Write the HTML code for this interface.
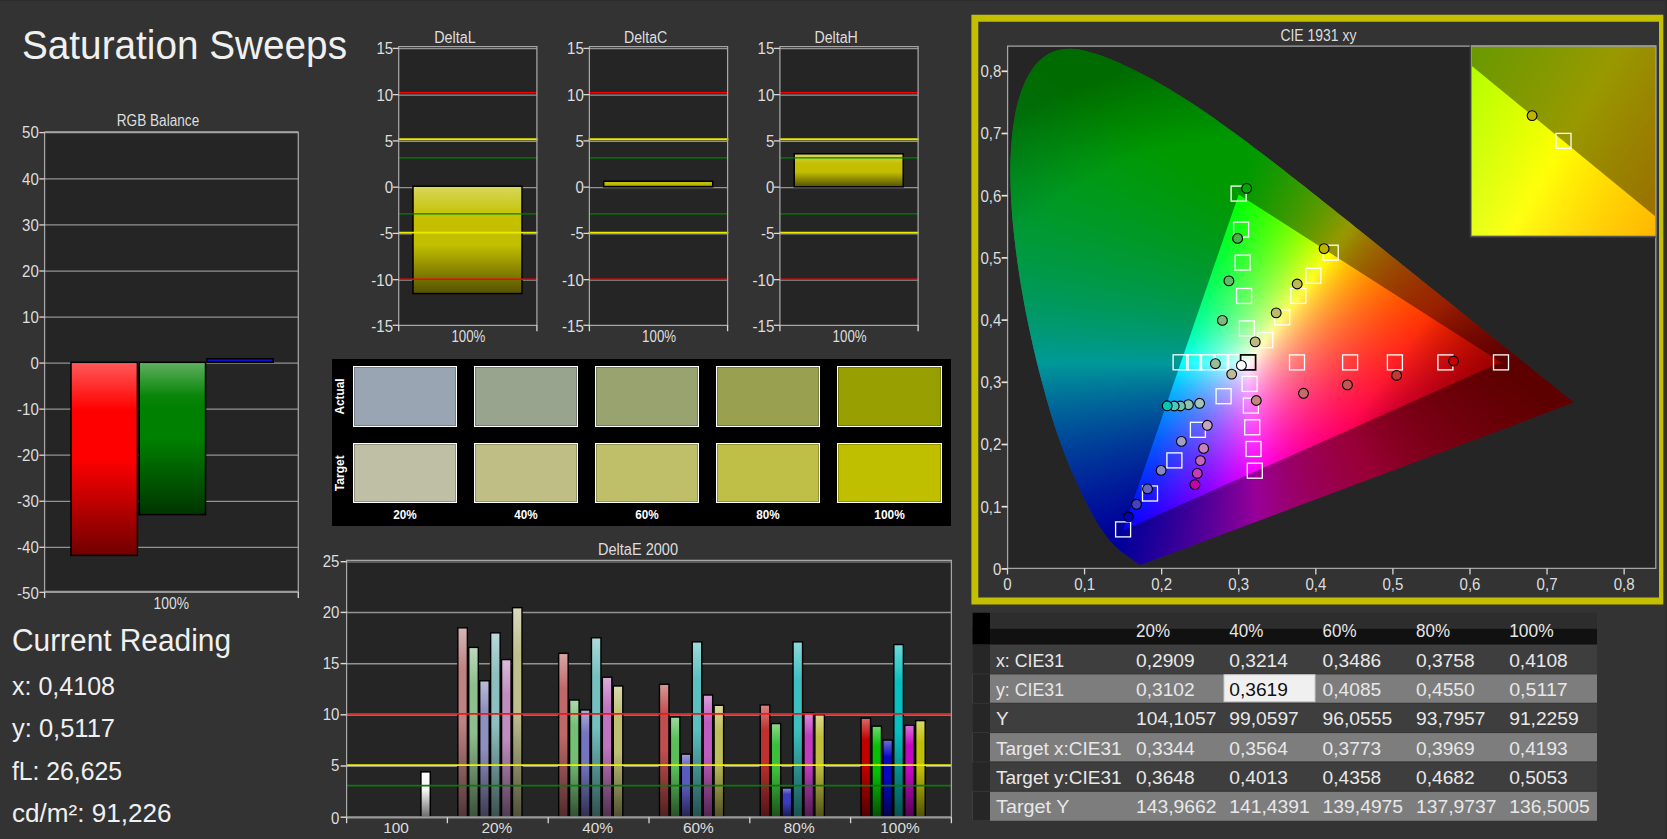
<!DOCTYPE html>
<html><head><meta charset="utf-8"><title>Saturation Sweeps</title>
<style>
html,body{margin:0;padding:0}
body{width:1667px;height:839px;background:#333;overflow:hidden;position:relative;font-family:"Liberation Sans",Arial,sans-serif}
svg{position:absolute;left:0;top:0}
svg{fill:#dedede}
svg text{font-family:"Liberation Sans",Arial,sans-serif}
.rw i{position:absolute;display:block}
#cbg{position:absolute;left:1007.6px;top:46px;width:648.2px;height:522.4px;background:#252525}
</style></head><body>
<div id="cbg"></div>
<div class="rw" style="position:absolute;left:1008px;top:46px;width:648px;height:522px;overflow:hidden;clip-path:polygon(133.7px 518.5px,131.6px 518.4px,129.7px 517.3px,127.8px 516.0px,125.8px 514.5px,123.7px 513.0px,121.7px 511.6px,119.4px 510.0px,117.7px 508.8px,115.9px 507.5px,113.8px 505.9px,111.6px 504.1px,109.3px 502.1px,106.7px 499.7px,103.9px 496.8px,102.4px 495.0px,100.8px 493.1px,99.0px 490.8px,97.1px 488.4px,95.2px 485.6px,93.1px 482.7px,91.0px 479.4px,88.8px 475.8px,86.4px 471.9px,84.0px 467.6px,81.4px 462.8px,78.7px 457.6px,75.9px 451.9px,73.0px 445.8px,69.9px 439.1px,66.6px 431.8px,63.2px 424.0px,59.7px 415.6px,56.1px 406.5px,52.5px 396.8px,48.8px 386.3px,45.2px 375.3px,41.6px 363.6px,38.1px 351.2px,34.5px 338.1px,30.9px 324.4px,27.4px 310.2px,24.0px 295.4px,20.7px 280.3px,17.6px 264.9px,14.7px 249.3px,12.0px 233.6px,9.7px 217.9px,7.6px 202.3px,5.8px 186.7px,4.3px 171.4px,3.3px 156.4px,2.6px 141.9px,2.3px 127.9px,2.5px 114.3px,3.1px 101.2px,4.1px 88.6px,5.7px 76.7px,7.7px 65.4px,10.2px 55.0px,13.2px 45.4px,16.6px 36.7px,20.5px 28.9px,24.8px 22.2px,29.4px 16.5px,34.4px 11.9px,39.7px 8.3px,45.2px 5.7px,50.9px 3.9px,56.8px 3.0px,62.7px 2.8px,68.8px 3.3px,75.0px 4.3px,81.2px 5.9px,87.5px 7.7px,93.8px 9.8px,100.1px 12.2px,106.4px 14.8px,112.6px 17.5px,118.8px 20.4px,124.8px 23.2px,130.7px 26.2px,136.6px 29.2px,142.4px 32.3px,148.2px 35.4px,153.9px 38.7px,159.6px 42.0px,165.2px 45.4px,170.9px 48.9px,176.5px 52.4px,182.1px 56.0px,187.7px 59.7px,193.3px 63.4px,198.8px 67.2px,204.4px 71.1px,209.9px 75.0px,215.4px 78.9px,220.9px 82.9px,226.5px 86.9px,232.0px 91.0px,237.5px 95.1px,243.0px 99.2px,248.5px 103.4px,254.0px 107.6px,259.5px 111.8px,265.1px 116.0px,270.6px 120.3px,276.1px 124.6px,281.6px 128.9px,287.1px 133.2px,292.6px 137.5px,298.1px 141.8px,303.6px 146.2px,309.1px 150.5px,314.6px 154.9px,320.0px 159.2px,325.5px 163.6px,330.9px 167.9px,336.4px 172.2px,341.8px 176.6px,347.2px 180.9px,352.6px 185.2px,357.9px 189.5px,363.2px 193.8px,368.5px 198.0px,373.8px 202.3px,379.0px 206.5px,384.2px 210.7px,389.4px 214.8px,394.5px 218.9px,399.6px 223.0px,404.6px 227.1px,409.6px 231.1px,414.5px 235.0px,419.4px 238.9px,424.2px 242.8px,429.0px 246.6px,433.7px 250.4px,438.3px 254.1px,442.8px 257.7px,447.3px 261.3px,451.7px 264.9px,456.0px 268.3px,460.2px 271.7px,464.2px 275.0px,468.2px 278.1px,472.0px 281.2px,475.7px 284.2px,479.3px 287.1px,482.8px 289.9px,486.3px 292.7px,489.7px 295.4px,492.9px 298.0px,496.1px 300.6px,499.2px 303.0px,502.1px 305.4px,504.9px 307.6px,507.6px 309.8px,510.2px 311.8px,512.7px 313.8px,515.1px 315.8px,517.4px 317.6px,519.6px 319.4px,521.7px 321.1px,523.7px 322.7px,525.6px 324.3px,527.5px 325.8px,529.2px 327.2px,530.9px 328.5px,532.5px 329.8px,535.5px 332.2px,538.2px 334.4px,540.8px 336.4px,543.0px 338.3px,545.2px 340.0px,547.2px 341.6px,549.0px 343.1px,550.7px 344.4px,552.3px 345.7px,554.4px 347.4px,556.3px 348.9px,558.3px 350.5px,559.9px 351.8px,561.4px 353.1px,563.0px 354.3px,564.6px 355.6px,565.8px 356.6px);">
<i style="top:2px;left:48px;width:32px;height:2px;background:linear-gradient(90deg,#00b200,#00b200,#00b200,#00b200,#00b200)"></i>
<i style="top:4px;left:40px;width:48px;height:2px;background:linear-gradient(90deg,#00b200,#00b200,#00b200,#00b200,#00b200,#00b200,#00b200)"></i>
<i style="top:6px;left:32px;width:64px;height:2px;background:linear-gradient(90deg,#00b200,#00b200,#00b200,#00b200,#00b200,#00b200,#00b200,#00b200,#00b200)"></i>
<i style="top:8px;left:32px;width:64px;height:2px;background:linear-gradient(90deg,#00b200,#00b200,#00b200,#00b200,#00b200,#00b200,#00b200,#00b200,#00b200)"></i>
<i style="top:10px;left:32px;width:72px;height:2px;background:linear-gradient(90deg,#00b200,#00b200,#00b200,#00b200,#00b200,#00b200,#00b200,#00b200,#00b200,#00b200)"></i>
<i style="top:12px;left:24px;width:88px;height:2px;background:linear-gradient(90deg,#00b200,#00b200,#00b200,#00b200,#00b200,#00b200,#00b200,#00b200,#00b200,#00b200,#00b200,#00b200)"></i>
<i style="top:14px;left:24px;width:88px;height:2px;background:linear-gradient(90deg,#00b200,#00b200,#00b200,#00b200,#00b200,#00b200,#00b200,#00b200,#00b200,#00b200,#00b200,#00b200)"></i>
<i style="top:16px;left:24px;width:96px;height:2px;background:linear-gradient(90deg,#00b300,#00b200,#00b200,#00b200,#00b200,#00b200,#00b200,#00b200,#00b200,#00b200,#00b200,#00b200,#00b200)"></i>
<i style="top:18px;left:24px;width:96px;height:2px;background:linear-gradient(90deg,#00b301,#00b200,#00b200,#00b200,#00b200,#00b200,#00b200,#00b200,#00b200,#00b200,#00b200,#00b200,#00b200)"></i>
<i style="top:20px;left:16px;width:112px;height:2px;background:linear-gradient(90deg,#00b402,#00b301,#00b200,#00b200,#00b200,#00b200,#00b200,#00b200,#00b200,#00b200,#00b200,#00b200,#00b200,#00b200,#00b200)"></i>
<i style="top:22px;left:16px;width:112px;height:2px;background:linear-gradient(90deg,#00b403,#00b302,#00b300,#00b200,#00b200,#00b200,#00b200,#00b200,#00b200,#00b200,#00b200,#00b200,#00b200,#00b200,#00b300)"></i>
<i style="top:24px;left:16px;width:120px;height:2px;background:linear-gradient(90deg,#00b403,#00b302,#00b301,#00b200,#00b200,#00b200,#00b200,#00b200,#00b200,#00b200,#00b200,#00b200,#00b200,#00b300,#00b500,#00b700)"></i>
<i style="top:26px;left:16px;width:120px;height:2px;background:linear-gradient(90deg,#00b404,#00b403,#00b301,#00b300,#00b200,#00b200,#00b200,#00b200,#00b200,#00b200,#00b200,#00b200,#00b300,#00b500,#00b700,#00b900)"></i>
<i style="top:28px;left:16px;width:128px;height:2px;background:linear-gradient(90deg,#00b405,#00b403,#00b302,#00b301,#00b200,#00b200,#00b200,#00b200,#00b200,#00b200,#00b200,#00b300,#00b500,#00b700,#00b900,#00ba00,#00bc00)"></i>
<i style="top:30px;left:16px;width:128px;height:2px;background:linear-gradient(90deg,#00b505,#00b404,#00b403,#00b301,#00b200,#00b200,#00b200,#00b200,#00b200,#00b200,#00b200,#00b500,#00b700,#00b900,#00ba00,#00bc00,#00be00)"></i>
<i style="top:32px;left:16px;width:136px;height:2px;background:linear-gradient(90deg,#00b506,#00b404,#00b403,#00b302,#00b300,#00b200,#00b200,#00b200,#00b200,#00b200,#00b400,#00b600,#00b800,#00ba00,#00bc00,#00be00,#00bf00,#00c100)"></i>
<i style="top:34px;left:8px;width:144px;height:2px;background:linear-gradient(90deg,#00b607,#00b506,#00b505,#00b404,#00b302,#00b301,#00b200,#00b200,#00b200,#00b200,#00b300,#00b600,#00b800,#00ba00,#00bc00,#00be00,#00c000,#00c100,#00c300)"></i>
<i style="top:36px;left:8px;width:152px;height:2px;background:linear-gradient(90deg,#00b608,#00b507,#00b505,#00b404,#00b403,#00b301,#00b300,#00b200,#00b200,#00b300,#00b500,#00b700,#00ba00,#00bc00,#00be00,#00c000,#00c100,#00c300,#00c400,#00c600)"></i>
<i style="top:38px;left:8px;width:152px;height:2px;background:linear-gradient(90deg,#00b608,#00b607,#00b506,#00b405,#00b403,#00b302,#00b301,#00b200,#00b200,#00b400,#00b700,#00b900,#0b0,#00bd00,#00bf00,#00c100,#00c300,#00c500,#00c600,#00c700)"></i>
<i style="top:40px;left:8px;width:160px;height:2px;background:linear-gradient(90deg,#00b609,#00b608,#00b506,#00b505,#00b404,#00b403,#00b301,#00b200,#00b300,#00b600,#00b800,#0b0,#00bd00,#00bf00,#00c100,#00c300,#00c500,#00c600,#00c800,#00c900,#00cb00)"></i>
<i style="top:42px;left:8px;width:160px;height:2px;background:linear-gradient(90deg,#00b70a,#00b608,#00b507,#00b506,#00b404,#00b403,#00b302,#00b300,#00b500,#00b800,#00ba00,#00bc00,#00bf00,#00c100,#00c300,#00c500,#00c600,#00c800,#00ca00,#00cb00,#0c0)"></i>
<i style="top:44px;left:8px;width:160px;height:2px;background:linear-gradient(90deg,#00b70a,#00b609,#00b608,#00b506,#00b505,#00b404,#00b302,#00b401,#00b700,#00b900,#00bc00,#00be00,#00c000,#00c200,#00c400,#00c600,#00c800,#00ca00,#00cb00,#00cd00,#00ce00)"></i>
<i style="top:46px;left:8px;width:168px;height:2px;background:linear-gradient(90deg,#00b70b,#00b609,#00b608,#00b507,#00b505,#00b404,#00b403,#00b601,#00b800,#0b0,#00bd00,#00c000,#00c200,#00c400,#00c600,#00c800,#00ca00,#0c0,#00cd00,#00cf00,#00d000,#00d100)"></i>
<i style="top:48px;left:8px;width:168px;height:2px;background:linear-gradient(90deg,#00b70b,#00b70a,#00b609,#00b607,#00b506,#00b505,#00b603,#00b802,#00ba01,#00bd00,#00bf00,#00c100,#00c400,#00c600,#00c800,#00ca00,#0c0,#00cd00,#00cf00,#00d000,#00d200,#00d300)"></i>
<i style="top:50px;left:8px;width:176px;height:2px;background:linear-gradient(90deg,#00b70c,#00b70b,#00b609,#00b608,#00b507,#00b505,#00b804,#00ba03,#00bc01,#00be00,#00c100,#00c300,#00c500,#00c700,#00ca00,#00cb00,#00cd00,#00cf00,#00d100,#00d200,#00d300,#00d500,#00d600)"></i>
<i style="top:52px;left:8px;width:176px;height:2px;background:linear-gradient(90deg,#00b80c,#00b70b,#00b70a,#00b609,#00b607,#00b706,#00b905,#00bc03,#00be02,#00c000,#00c200,#00c500,#00c700,#00c900,#00cb00,#00cd00,#00cf00,#00d100,#00d200,#00d400,#00d500,#00d600,#00d700)"></i>
<i style="top:54px;left:8px;width:176px;height:2px;background:linear-gradient(90deg,#00b80d,#00b70c,#00b70a,#00b609,#00b608,#00b907,#00bb05,#00bd04,#00c002,#00c201,#00c400,#00c600,#00c900,#00cb00,#00cd00,#00cf00,#00d100,#00d200,#00d400,#00d600,#00d700,#00d800,#00d900)"></i>
<i style="top:56px;left:8px;width:184px;height:2px;background:linear-gradient(90deg,#00b80e,#00b80c,#00b70b,#00b70a,#00b808,#00bb07,#00bd06,#00bf05,#00c103,#00c302,#00c600,#00c800,#00ca00,#00cd00,#00cf00,#00d100,#00d200,#00d400,#00d600,#00d700,#00d900,#00da00,#00db00,#00dc00)"></i>
<i style="top:58px;left:0px;width:192px;height:2px;background:linear-gradient(90deg,#00b910,#00b80e,#00b80d,#00b70c,#00b70a,#00ba09,#00bc08,#00bf07,#00c105,#00c304,#00c502,#00c701,#00ca00,#0c0,#00ce00,#00d000,#00d200,#00d400,#00d600,#00d800,#00d900,#00da00,#00dc00,#0d0,#00de00)"></i>
<i style="top:60px;left:0px;width:200px;height:2px;background:linear-gradient(90deg,#00b910,#00b90f,#00b80e,#00b80c,#00b90b,#00bc0a,#00be09,#00c007,#00c306,#00c504,#00c703,#00c901,#00cb00,#00ce00,#00d000,#00d200,#00d400,#00d600,#00d800,#00d900,#00db00,#00dc00,#0d0,#00de00,#00df00,#00e000)"></i>
<i style="top:62px;left:0px;width:200px;height:2px;background:linear-gradient(90deg,#00b911,#00b910,#00b80e,#00b80d,#00bb0c,#00bd0b,#00c009,#00c208,#00c407,#00c705,#00c904,#00cb02,#00cd00,#00cf00,#00d200,#00d400,#00d600,#00d800,#00d900,#00db00,#0d0,#00de00,#00df00,#00e000,#00e100,#00e200)"></i>
<i style="top:64px;left:0px;width:200px;height:2px;background:linear-gradient(90deg,#00ba11,#00b910,#00b90f,#00ba0e,#00bc0c,#00bf0b,#00c10a,#00c409,#00c607,#00c806,#00cb04,#00cd03,#00cf01,#00d100,#00d300,#00d500,#00d700,#00d900,#00db00,#0d0,#00de00,#00e000,#00e100,#00e200,#00e300,#00e400)"></i>
<i style="top:66px;left:0px;width:208px;height:2px;background:linear-gradient(90deg,#00ba12,#00b911,#00b90f,#00bb0e,#00be0d,#00c10c,#00c30b,#00c509,#00c808,#00ca06,#00cc05,#00ce03,#00d102,#00d300,#00d500,#00d700,#00d900,#00db00,#0d0,#00de00,#00e000,#00e100,#00e300,#00e400,#00e500,#00e600,#00e600)"></i>
<i style="top:68px;left:0px;width:208px;height:2px;background:linear-gradient(90deg,#00ba13,#00ba11,#00bb10,#00bd0f,#00c00e,#00c20d,#00c50b,#00c70a,#00c909,#00cc07,#00ce06,#00d004,#00d202,#00d401,#00d700,#00d900,#00db00,#0d0,#00df00,#00e000,#00e200,#00e300,#00e400,#00e600,#00e700,#00e700,#00e800)"></i>
<i style="top:70px;left:0px;width:208px;height:2px;background:linear-gradient(90deg,#00ba13,#00ba12,#00bc11,#00bf10,#00c10f,#00c40e,#00c60c,#00c90b,#00cb09,#00cd08,#00d006,#00d205,#00d403,#00d601,#00d800,#00da00,#00dc00,#00de00,#00e000,#00e200,#00e400,#00e500,#00e600,#00e700,#00e800,#00e900,#00ea00)"></i>
<i style="top:72px;left:0px;width:216px;height:2px;background:linear-gradient(90deg,#00bb14,#00bb13,#00be12,#00c011,#00c310,#00c50e,#00c80d,#00ca0c,#00cd0a,#00cf09,#00d107,#00d406,#00d604,#00d802,#00da00,#00dc00,#00de00,#00e000,#00e200,#00e400,#00e500,#00e700,#00e800,#00e900,#00ea00,#00eb00,#00ec00,#00ec00)"></i>
<i style="top:74px;left:0px;width:216px;height:2px;background:linear-gradient(90deg,#00bb15,#00bd14,#00bf13,#00c212,#00c410,#00c70f,#00ca0e,#00cc0c,#00ce0b,#00d109,#00d308,#00d506,#00d805,#00da03,#00dc01,#00de00,#00e000,#00e200,#00e400,#00e500,#00e700,#00e800,#00ea00,#00eb00,#00ec00,#00ed00,#00ed00,#0e0)"></i>
<i style="top:76px;left:0px;width:216px;height:2px;background:linear-gradient(90deg,#00bb15,#00be14,#00c113,#00c312,#00c611,#00c910,#00cb0f,#00ce0d,#00d00c,#00d20a,#00d509,#00d707,#00d905,#00db04,#00dd02,#00df00,#00e200,#00e400,#00e500,#00e700,#00e900,#00ea00,#00eb00,#00ed00,#0e0,#00ef00,#00ef00,#00f000)"></i>
<i style="top:78px;left:0px;width:224px;height:2px;background:linear-gradient(90deg,#00bd16,#00c015,#00c214,#00c513,#00c812,#00ca11,#00cd0f,#00cf0e,#00d20d,#00d40b,#00d60a,#00d908,#00db06,#00dd04,#00df03,#00e101,#00e300,#00e500,#00e700,#00e900,#00ea00,#00ec00,#00ed00,#0e0,#00ef00,#00f000,#00f100,#00f200,#00f200)"></i>
<i style="top:80px;left:0px;width:224px;height:2px;background:linear-gradient(90deg,#00be17,#00c116,#00c415,#00c614,#00c913,#00cc12,#00ce10,#00d10f,#00d30d,#00d60c,#00d80a,#00da09,#00dd07,#00df05,#00e103,#00e301,#00e500,#00e700,#00e900,#00eb00,#00ec00,#0e0,#00ef00,#00f000,#00f100,#00f200,#00f300,#00f300,#00f400)"></i>
<i style="top:82px;left:0px;width:224px;height:2px;background:linear-gradient(90deg,#00c018,#00c317,#00c516,#00c815,#00cb14,#00cd12,#00d011,#00d210,#00d50e,#00d70d,#00da0b,#00dc0a,#00de08,#00e106,#00e304,#00e502,#00e700,#00e900,#00eb00,#00ec00,#0e0,#00ef00,#00f100,#00f200,#00f300,#00f400,#00f500,#00f500,#00f600)"></i>
<i style="top:84px;left:0px;width:232px;height:2px;background:linear-gradient(90deg,#00c119,#00c418,#00c717,#00ca16,#00cc15,#00cf13,#00d112,#00d411,#00d70f,#00d90e,#00db0c,#00de0a,#00e009,#00e207,#00e405,#00e603,#00e801,#00ea00,#00ec00,#0e0,#00f000,#00f100,#00f300,#00f400,#00f500,#00f600,#00f600,#00f700,#00f700,#00f800)"></i>
<i style="top:86px;left:0px;width:232px;height:2px;background:linear-gradient(90deg,#00c31a,#00c619,#00c818,#00cb17,#00ce15,#00d014,#00d313,#00d612,#00d810,#00db0f,#00dd0d,#00df0b,#00e20a,#00e408,#00e606,#00e804,#00ea02,#00ec00,#0e0,#00f000,#00f100,#00f300,#00f400,#00f600,#00f700,#00f700,#00f800,#00f900,#00f900,#00f900)"></i>
<i style="top:88px;left:0px;width:232px;height:2px;background:linear-gradient(90deg,#00c41b,#00c71a,#00ca19,#00cc18,#00cf16,#00d215,#00d514,#00d712,#00da11,#00dc0f,#00df0e,#00e10c,#00e30a,#00e609,#00e807,#00ea05,#00ec03,#00ee01,#00f000,#00f100,#00f300,#00f500,#00f600,#00f700,#00f800,#00f900,#00fa00,#00fb00,#00fb00,#00fb00)"></i>
<i style="top:90px;left:0px;width:240px;height:2px;background:linear-gradient(90deg,#00c61c,#00c81b,#00cb1a,#00ce19,#00d117,#00d316,#00d615,#00d913,#00db12,#00de10,#00e00f,#00e30d,#00e50b,#00e70a,#00e908,#00ec06,#00ee04,#00f001,#00f100,#00f300,#00f500,#00f600,#00f800,#00f900,#00fa00,#00fb00,#00fc00,#00fc00,#00fd00,#00fd00,#00fd00)"></i>
<i style="top:92px;left:0px;width:240px;height:2px;background:linear-gradient(90deg,#00c71d,#00ca1c,#00cd1b,#00cf19,#00d218,#00d517,#00d816,#00da14,#00dd13,#00df11,#00e210,#00e40e,#00e70c,#00e90a,#00eb09,#00ed07,#00ef04,#00f102,#00f300,#00f500,#00f700,#00f800,#00fa00,#00fb00,#00fc00,#00fd00,#00fe00,#00fe00,#0f0,#0f0,#0f0)"></i>
<i style="top:94px;left:0px;width:240px;height:2px;background:linear-gradient(90deg,#00c81e,#00cb1d,#00ce1c,#00d11a,#00d419,#00d618,#00d917,#00dc15,#00de14,#00e112,#00e311,#00e60f,#00e80d,#00eb0b,#00ed09,#00ef07,#00f105,#00f303,#00f501,#00f700,#00f800,#00fa00,#00fb00,#00fd00,#00fe00,#0f0,#0f0,#0f0,#0f0,#0f0,#0f0)"></i>
<i style="top:96px;left:0px;width:248px;height:2px;background:linear-gradient(90deg,#00ca1f,#00cd1e,#00cf1d,#00d21b,#00d51a,#00d819,#00db18,#00dd16,#00e015,#00e213,#00e512,#00e710,#00ea0e,#00ec0c,#00ee0a,#00f108,#00f306,#00f504,#00f702,#00f800,#00fa00,#00fc00,#00fd00,#00fe00,#0f0,#0f0,#0f0,#0f0,#0f0,#0f0,#0f0,#0f0)"></i>
<i style="top:98px;left:0px;width:248px;height:2px;background:linear-gradient(90deg,#00cb20,#00ce1f,#00d11e,#00d41c,#00d61b,#00d91a,#00dc19,#00df17,#00e116,#00e414,#00e613,#00e911,#00eb0f,#00ee0d,#00f00b,#00f209,#00f407,#00f605,#00f803,#00fa00,#00fc00,#00fd00,#0f0,#0f0,#0f0,#0f0,#0f0,#0f0,#0f0,#0f0,#0f0,#0f0)"></i>
<i style="top:100px;left:0px;width:248px;height:2px;background:linear-gradient(90deg,#00cd21,#00cf20,#00d21f,#00d51d,#00d81c,#00db1b,#00dd1a,#00e018,#00e317,#00e515,#00e814,#00ea12,#00ed10,#00ef0e,#00f20c,#00f40a,#00f608,#00f806,#00fa04,#00fc01,#00fe00,#0f0,#0f0,#0f0,#0f0,#0f0,#0f0,#0f0,#0f0,#0f0,#0f0,#01ff00)"></i>
<i style="top:102px;left:0px;width:256px;height:2px;background:linear-gradient(90deg,#00ce22,#00d121,#00d420,#00d71e,#00d91d,#00dc1c,#00df1b,#00e219,#00e418,#00e716,#00e915,#00ec13,#0e1,#00f10f,#00f30d,#00f50b,#00f809,#00fa07,#00fc05,#00fe02,#0f0,#0f0,#0f0,#0f0,#0f0,#0f0,#0f0,#0f0,#0f0,#0f0,#0f0,#02ff00,#0dff00)"></i>
<i style="top:104px;left:0px;width:256px;height:2px;background:linear-gradient(90deg,#00cf23,#00d222,#00d521,#00d81f,#00db1e,#00de1d,#00e01c,#00e31a,#00e619,#00e817,#00eb16,#00ee14,#00f012,#00f210,#00f50e,#00f70c,#00f90a,#00fb08,#00fd06,#00ff03,#00ff01,#0f0,#0f0,#0f0,#0f0,#0f0,#0f0,#0f0,#0f0,#0f0,#0f0,#03ff00,#0eff00)"></i>
<i style="top:106px;left:0px;width:256px;height:2px;background:linear-gradient(90deg,#00d124,#00d423,#00d622,#00d921,#00dc1f,#00df1e,#00e21d,#00e41b,#00e71a,#00ea18,#00ec17,#00ef15,#00f213,#00f411,#00f610,#00f90d,#00fb0b,#00fd09,#00ff07,#00ff04,#00ff02,#0f0,#0f0,#0f0,#0f0,#0f0,#0f0,#0f0,#0f0,#0f0,#0f0,#04ff00,#0fff00)"></i>
<i style="top:108px;left:0px;width:264px;height:2px;background:linear-gradient(90deg,#00d225,#00d524,#00d823,#00db22,#00dd20,#00e01f,#00e31e,#00e61d,#00e91b,#00eb1a,#00ee18,#00f016,#00f314,#00f513,#00f811,#00fa0f,#00fc0c,#00ff0a,#00ff08,#00ff05,#00ff03,#0f0,#0f0,#0f0,#0f0,#0f0,#0f0,#0f0,#0f0,#0f0,#0f0,#05ff00,#10ff00,#1bff00)"></i>
<i style="top:110px;left:0px;width:264px;height:2px;background:linear-gradient(90deg,#00d326,#00d625,#00d924,#00dc23,#00df22,#00e220,#00e41f,#00e71e,#00ea1c,#00ed1b,#00ef19,#00f217,#00f416,#00f714,#00f912,#00fc10,#00fe0e,#00ff0b,#00ff09,#00ff06,#00ff04,#00ff01,#0f0,#0f0,#0f0,#0f0,#0f0,#0f0,#0f0,#0f0,#0f0,#06ff00,#1f0,#1cff00)"></i>
<i style="top:112px;left:0px;width:264px;height:2px;background:linear-gradient(90deg,#00d527,#00d726,#00da25,#00dd24,#00e023,#00e321,#00e620,#00e91f,#00eb1d,#00ee1c,#00f11a,#00f318,#00f617,#00f815,#00fb13,#00fd11,#00ff0f,#00ff0c,#00ff0a,#00ff07,#00ff05,#00ff02,#0f0,#0f0,#0f0,#0f0,#0f0,#0f0,#0f0,#0f0,#0f0,#07ff00,#12ff00,#1dff00)"></i>
<i style="top:114px;left:0px;width:272px;height:2px;background:linear-gradient(90deg,#00d628,#00d927,#00dc26,#00df25,#00e124,#00e423,#00e721,#00ea20,#00ed1e,#00ef1d,#00f21b,#00f51a,#00f718,#00fa16,#00fc14,#00ff12,#00ff10,#00ff0d,#00ff0b,#00ff08,#00ff06,#00ff03,#00ff01,#0f0,#0f0,#0f0,#0f0,#0f0,#0f0,#0f0,#0f0,#08ff00,#13ff00,#1eff00,#2aff00)"></i>
<i style="top:116px;left:0px;width:272px;height:2px;background:linear-gradient(90deg,#00d729,#00da28,#00dd27,#00e026,#00e325,#00e624,#00e822,#00eb21,#00ee20,#00f11e,#00f41d,#00f61b,#00f919,#00fb17,#00fe15,#00ff13,#0f1,#00ff0e,#00ff0c,#00ff0a,#00ff07,#00ff04,#00ff02,#0f0,#0f0,#0f0,#0f0,#0f0,#0f0,#0f0,#0f0,#09ff00,#14ff00,#1fff00,#2bff00)"></i>
<i style="top:118px;left:0px;width:272px;height:2px;background:linear-gradient(90deg,#00d82a,#00db29,#00de28,#00e127,#00e426,#00e725,#00ea24,#00ed22,#00ef21,#00f21f,#00f51e,#00f81c,#00fa1a,#00fd18,#00ff16,#00ff14,#00ff12,#00ff0f,#00ff0d,#00ff0b,#00ff08,#00ff06,#00ff03,#0f0,#0f0,#0f0,#0f0,#0f0,#0f0,#0f0,#0f0,#0aff00,#15ff00,#20ff00,#2cff00)"></i>
<i style="top:120px;left:0px;width:280px;height:2px;background:linear-gradient(90deg,#00da2b,#00dd2b,#00df2a,#00e229,#00e527,#00e826,#00eb25,#00ee24,#00f122,#00f421,#00f61f,#00f91d,#00fc1b,#00fe1a,#00ff17,#00ff15,#00ff13,#00ff10,#00ff0e,#00ff0c,#00ff09,#00ff07,#00ff04,#00ff01,#0f0,#0f0,#0f0,#0f0,#0f0,#0f0,#0f0,#0bff00,#16ff00,#2f0,#2dff00,#3aff00)"></i>
<i style="top:122px;left:0px;width:280px;height:2px;background:linear-gradient(90deg,#00db2d,#00de2c,#00e12b,#00e42a,#00e729,#00e927,#00ec26,#00ef25,#00f223,#00f522,#00f820,#00fa1e,#00fd1d,#00ff1b,#00ff19,#00ff16,#00ff14,#00ff12,#00ff0f,#00ff0d,#00ff0a,#00ff08,#00ff05,#00ff02,#0f0,#0f0,#0f0,#0f0,#0f0,#0f0,#01ff00,#0cff00,#17ff00,#23ff00,#2fff00,#3bff00)"></i>
<i style="top:124px;left:0px;width:280px;height:2px;background:linear-gradient(90deg,#00dc2e,#00df2d,#00e22c,#00e52b,#00e82a,#00eb29,#00ee27,#00f126,#00f325,#00f623,#00f921,#00fc20,#00fe1e,#00ff1c,#00ff1a,#00ff17,#00ff15,#00ff13,#00ff10,#00ff0e,#00ff0b,#00ff09,#00ff06,#00ff03,#00ff01,#0f0,#0f0,#0f0,#0f0,#0f0,#02ff00,#0dff00,#18ff00,#24ff00,#30ff00,#3cff00)"></i>
<i style="top:126px;left:0px;width:288px;height:2px;background:linear-gradient(90deg,#00dd2f,#00e02e,#00e32d,#00e62c,#00e92b,#00ec2a,#00ef29,#00f227,#00f526,#00f824,#00fa23,#00fd21,#00ff1f,#00ff1d,#00ff1b,#00ff18,#00ff16,#00ff14,#0f1,#00ff0f,#00ff0c,#00ff0a,#00ff07,#00ff05,#00ff02,#0f0,#0f0,#0f0,#0f0,#0f0,#03ff00,#0eff00,#19ff00,#25ff00,#31ff00,#3eff00,#4bff00)"></i>
<i style="top:128px;left:0px;width:288px;height:2px;background:linear-gradient(90deg,#00de30,#00e12f,#00e42e,#00e72d,#00ea2c,#00ed2b,#00f02a,#00f329,#00f627,#00f926,#00fc24,#00fe22,#00ff20,#00ff1e,#00ff1c,#00ff1a,#00ff17,#00ff15,#00ff13,#00ff10,#00ff0e,#00ff0b,#00ff08,#00ff06,#00ff03,#0f0,#0f0,#0f0,#0f0,#0f0,#04ff00,#0fff00,#1bff00,#27ff00,#3f0,#3fff00,#4cff00)"></i>
<i style="top:130px;left:0px;width:288px;height:2px;background:linear-gradient(90deg,#00df32,#00e231,#00e530,#00e82f,#00eb2e,#00ee2c,#00f12b,#00f42a,#00f728,#00fa27,#00fd25,#00ff24,#00ff21,#00ff1f,#00ff1d,#00ff1b,#00ff18,#00ff16,#00ff14,#0f1,#00ff0f,#00ff0c,#00ff0a,#00ff07,#00ff04,#00ff01,#0f0,#0f0,#0f0,#0f0,#05ff00,#10ff00,#1cff00,#28ff00,#34ff00,#41ff00,#4eff00)"></i>
<i style="top:132px;left:0px;width:296px;height:2px;background:linear-gradient(90deg,#00e133,#00e432,#00e731,#00ea30,#00ed2f,#00f02e,#00f32c,#00f62b,#00f82a,#00fb28,#00fe27,#00ff25,#00ff23,#00ff20,#00ff1e,#00ff1c,#00ff1a,#00ff17,#00ff15,#00ff12,#00ff10,#00ff0d,#00ff0b,#00ff08,#00ff05,#00ff02,#0f0,#0f0,#0f0,#0f0,#06ff00,#1f0,#1dff00,#29ff00,#36ff00,#42ff00,#4fff00,#5dff00)"></i>
<i style="top:134px;left:0px;width:296px;height:2px;background:linear-gradient(90deg,#00e234,#00e533,#00e832,#00eb31,#00ee30,#00f12f,#00f42e,#00f72d,#00fa2b,#00fd2a,#00ff28,#00ff26,#00ff24,#0f2,#00ff1f,#00ff1d,#00ff1b,#00ff18,#00ff16,#00ff14,#0f1,#00ff0e,#00ff0c,#00ff09,#00ff06,#00ff04,#00ff01,#0f0,#0f0,#0f0,#07ff00,#12ff00,#1eff00,#2aff00,#37ff00,#4f0,#51ff00,#5fff00)"></i>
<i style="top:136px;left:0px;width:296px;height:2px;background:linear-gradient(90deg,#00e335,#00e635,#00e934,#00ec33,#00ef32,#00f230,#00f52f,#00f82e,#00fb2c,#00fe2b,#00ff29,#00ff27,#00ff25,#00ff23,#00ff21,#00ff1e,#00ff1c,#00ff1a,#00ff17,#00ff15,#00ff12,#00ff10,#00ff0d,#00ff0a,#00ff08,#00ff05,#00ff02,#0f0,#0f0,#0f0,#08ff00,#13ff00,#1fff00,#2cff00,#38ff00,#45ff00,#53ff00,#60ff00)"></i>
<i style="top:138px;left:0px;width:304px;height:2px;background:linear-gradient(90deg,#00e437,#00e736,#00ea35,#00ed34,#00f033,#00f332,#00f631,#00f92f,#00fc2e,#00ff2c,#00ff2a,#00ff28,#00ff26,#00ff24,#0f2,#00ff1f,#00ff1d,#00ff1b,#00ff18,#00ff16,#00ff13,#0f1,#00ff0e,#00ff0b,#00ff09,#00ff06,#00ff03,#0f0,#0f0,#0f0,#09ff00,#15ff00,#21ff00,#2dff00,#3aff00,#47ff00,#54ff00,#62ff00,#70ff00)"></i>
<i style="top:140px;left:0px;width:304px;height:2px;background:linear-gradient(90deg,#00e538,#00e837,#00eb36,#00ee35,#00f134,#00f433,#00f732,#00fa31,#00fd2f,#00ff2e,#00ff2c,#00ff29,#00ff27,#00ff25,#00ff23,#00ff21,#00ff1e,#00ff1c,#00ff1a,#00ff17,#00ff15,#00ff12,#00ff0f,#00ff0d,#00ff0a,#00ff07,#00ff04,#00ff01,#0f0,#0f0,#0aff00,#16ff00,#2f0,#2eff00,#3bff00,#49ff00,#56ff00,#64ff00,#72ff00)"></i>
<i style="top:142px;left:0px;width:304px;height:2px;background:linear-gradient(90deg,#00e639,#00e939,#00ec38,#00ef37,#00f236,#00f535,#00f833,#00fb32,#00fe31,#00ff2f,#00ff2d,#00ff2b,#00ff29,#00ff26,#00ff24,#0f2,#00ff20,#00ff1d,#00ff1b,#00ff18,#00ff16,#00ff13,#0f1,#00ff0e,#00ff0b,#00ff08,#00ff05,#00ff02,#0f0,#0f0,#0bff00,#17ff00,#23ff00,#30ff00,#3dff00,#4aff00,#58ff00,#6f0,#74ff00)"></i>
<i style="top:144px;left:0px;width:312px;height:2px;background:linear-gradient(90deg,#00e73b,#00ea3a,#00ed39,#00f038,#00f337,#00f636,#00f935,#00fc34,#00ff32,#00ff30,#00ff2e,#00ff2c,#00ff2a,#00ff28,#00ff25,#00ff23,#00ff21,#00ff1e,#00ff1c,#00ff1a,#00ff17,#00ff14,#00ff12,#00ff0f,#00ff0c,#00ff09,#00ff07,#00ff04,#00ff01,#0f0,#0cff00,#18ff00,#25ff00,#31ff00,#3eff00,#4cff00,#5aff00,#68ff00,#76ff00,#85ff00)"></i>
<i style="top:146px;left:0px;width:312px;height:2px;background:linear-gradient(90deg,#00e83c,#00eb3b,#00ee3b,#00f13a,#00f439,#00f737,#00fb36,#00fe35,#0f3,#00ff31,#00ff2f,#00ff2d,#00ff2b,#00ff29,#00ff27,#00ff24,#0f2,#00ff20,#00ff1d,#00ff1b,#00ff18,#00ff16,#00ff13,#00ff10,#00ff0e,#00ff0b,#00ff08,#00ff05,#00ff02,#01ff00,#0dff00,#19ff00,#26ff00,#3f0,#40ff00,#4eff00,#5bff00,#6aff00,#79ff00,#8f0)"></i>
<i style="top:148px;left:0px;width:312px;height:2px;background:linear-gradient(90deg,#00e93e,#00ec3d,#00ef3c,#00f23b,#00f53a,#00f939,#00fc38,#00ff36,#00ff35,#0f3,#00ff31,#00ff2e,#00ff2c,#00ff2a,#00ff28,#00ff26,#00ff23,#00ff21,#00ff1f,#00ff1c,#00ff1a,#00ff17,#00ff14,#00ff12,#00ff0f,#00ff0c,#00ff09,#00ff06,#00ff03,#02ff00,#0eff00,#1bff00,#27ff00,#34ff00,#42ff00,#4fff00,#5dff00,#6cff00,#7bff00,#8aff00)"></i>
<i style="top:150px;left:0px;width:312px;height:2px;background:linear-gradient(90deg,#00ea3f,#00ed3e,#00f03d,#00f33c,#00f63b,#00fa3a,#00fd39,#00ff38,#00ff36,#00ff34,#00ff32,#00ff30,#00ff2e,#00ff2b,#00ff29,#00ff27,#00ff25,#0f2,#00ff20,#00ff1d,#00ff1b,#00ff18,#00ff16,#00ff13,#00ff10,#00ff0d,#00ff0a,#00ff07,#00ff04,#03ff01,#0fff00,#1cff00,#29ff00,#36ff00,#43ff00,#51ff00,#5fff00,#6eff00,#7dff00,#8cff00)"></i>
<i style="top:152px;left:0px;width:320px;height:2px;background:linear-gradient(90deg,#00eb40,#00ee40,#00f13f,#00f43e,#00f83d,#00fb3c,#00fe3b,#00ff39,#00ff37,#00ff35,#0f3,#00ff31,#00ff2f,#00ff2d,#00ff2b,#00ff28,#00ff26,#00ff24,#00ff21,#00ff1f,#00ff1c,#00ff1a,#00ff17,#00ff14,#0f1,#00ff0f,#00ff0c,#00ff09,#00ff06,#04ff02,#10ff00,#1dff00,#2aff00,#37ff00,#45ff00,#53ff00,#61ff00,#70ff00,#7fff00,#8fff00,#9fff00)"></i>
<i style="top:154px;left:0px;width:320px;height:2px;background:linear-gradient(90deg,#00ec42,#00ef41,#00f240,#00f53f,#00f83e,#00fc3d,#00ff3c,#00ff3a,#00ff38,#00ff36,#00ff34,#00ff32,#00ff30,#00ff2e,#00ff2c,#00ff2a,#00ff27,#00ff25,#0f2,#00ff20,#00ff1d,#00ff1b,#00ff18,#00ff15,#00ff13,#00ff10,#00ff0d,#00ff0a,#00ff07,#05ff04,#12ff00,#1eff00,#2bff00,#39ff00,#46ff00,#54ff00,#63ff00,#72ff00,#81ff00,#91ff00,#a1ff00)"></i>
<i style="top:156px;left:0px;width:320px;height:2px;background:linear-gradient(90deg,#00ed43,#00f043,#00f342,#00f641,#00f940,#00fd3f,#00ff3e,#00ff3c,#00ff3a,#00ff38,#00ff36,#00ff34,#00ff32,#00ff2f,#00ff2d,#00ff2b,#00ff29,#00ff26,#00ff24,#00ff21,#00ff1f,#00ff1c,#00ff1a,#00ff17,#00ff14,#0f1,#00ff0e,#00ff0b,#00ff08,#06ff05,#13ff02,#20ff00,#2dff00,#3aff00,#48ff00,#56ff00,#65ff00,#74ff00,#83ff00,#93ff00,#a4ff00)"></i>
<i style="top:158px;left:0px;width:328px;height:2px;background:linear-gradient(90deg,#00ee45,#00f144,#00f443,#00f743,#00fa42,#00fe41,#00ff3f,#00ff3d,#00ff3b,#00ff39,#00ff37,#00ff35,#0f3,#00ff31,#00ff2f,#00ff2c,#00ff2a,#00ff28,#00ff25,#00ff23,#00ff20,#00ff1e,#00ff1b,#00ff18,#00ff15,#00ff12,#00ff10,#00ff0d,#00ff09,#08ff06,#14ff03,#21ff00,#2eff00,#3cff00,#4aff00,#58ff00,#67ff00,#76ff00,#86ff00,#96ff00,#a6ff00,#b8ff00)"></i>
<i style="top:160px;left:0px;width:328px;height:2px;background:linear-gradient(90deg,#00ef46,#00f246,#00f545,#00f844,#00fb43,#00fe42,#00ff40,#00ff3e,#00ff3d,#00ff3b,#00ff38,#00ff36,#00ff34,#00ff32,#00ff30,#00ff2e,#00ff2b,#00ff29,#00ff27,#00ff24,#00ff21,#00ff1f,#00ff1c,#00ff19,#00ff17,#00ff14,#0f1,#00ff0e,#00ff0b,#09ff08,#15ff04,#22ff01,#30ff00,#3dff00,#4bff00,#5aff00,#69ff00,#78ff00,#8f0,#98ff00,#a9ff00,#baff00)"></i>
<i style="top:162px;left:0px;width:328px;height:2px;background:linear-gradient(90deg,#00f048,#00f347,#00f646,#00f946,#00fc45,#0f4,#00ff42,#00ff40,#00ff3e,#00ff3c,#00ff3a,#00ff38,#00ff36,#0f3,#00ff31,#00ff2f,#00ff2d,#00ff2a,#00ff28,#00ff25,#00ff23,#00ff20,#00ff1e,#00ff1b,#00ff18,#00ff15,#00ff12,#00ff0f,#00ff0c,#0aff09,#17ff06,#24ff02,#31ff00,#3fff00,#4dff00,#5cff00,#6bff00,#7aff00,#8aff00,#9bff00,#acff00,#bdff00)"></i>
<i style="top:164px;left:0px;width:336px;height:2px;background:linear-gradient(90deg,#00f14a,#00f449,#00f748,#00fa47,#00fd46,#00ff45,#00ff43,#00ff41,#00ff3f,#00ff3d,#00ff3b,#00ff39,#00ff37,#00ff35,#0f3,#00ff30,#00ff2e,#00ff2c,#00ff29,#00ff27,#00ff24,#0f2,#00ff1f,#00ff1c,#00ff19,#00ff17,#00ff14,#0f1,#00ff0e,#0bff0a,#18ff07,#25ff04,#3f0,#41ff00,#4fff00,#5eff00,#6dff00,#7dff00,#8dff00,#9dff00,#afff00,#c0ff00,#d3ff00)"></i>
<i style="top:166px;left:0px;width:336px;height:2px;background:linear-gradient(90deg,#00f24b,#00f54a,#00f84a,#00fb49,#00fe48,#00ff46,#00ff45,#00ff43,#00ff41,#00ff3f,#00ff3d,#00ff3b,#00ff38,#00ff36,#00ff34,#00ff32,#00ff30,#00ff2d,#00ff2b,#00ff28,#00ff26,#00ff23,#00ff20,#00ff1e,#00ff1b,#00ff18,#00ff15,#00ff12,#00ff0f,#0cff0c,#19ff08,#26ff05,#34ff02,#42ff00,#51ff00,#60ff00,#6fff00,#7fff00,#8fff00,#a0ff00,#b1ff00,#c3ff00,#d6ff00)"></i>
<i style="top:168px;left:0px;width:336px;height:2px;background:linear-gradient(90deg,#00f34d,#00f64c,#00f94b,#00fc4a,#00ff4a,#00ff48,#00ff46,#0f4,#00ff42,#00ff40,#00ff3e,#00ff3c,#00ff3a,#00ff38,#00ff36,#0f3,#00ff31,#00ff2f,#00ff2c,#00ff2a,#00ff27,#00ff25,#0f2,#00ff1f,#00ff1c,#00ff19,#00ff17,#00ff13,#01ff10,#0dff0d,#1aff0a,#28ff07,#36ff03,#4f0,#53ff00,#62ff00,#71ff00,#81ff00,#92ff00,#a3ff00,#b4ff00,#c6ff00,#d9ff00)"></i>
<i style="top:170px;left:0px;width:344px;height:2px;background:linear-gradient(90deg,#00f34e,#00f64e,#00fa4d,#00fd4c,#00ff4b,#00ff49,#00ff47,#00ff45,#0f4,#00ff42,#00ff40,#00ff3d,#00ff3b,#00ff39,#00ff37,#00ff35,#00ff32,#00ff30,#00ff2e,#00ff2b,#00ff29,#00ff26,#00ff23,#00ff21,#00ff1e,#00ff1b,#00ff18,#00ff15,#02ff12,#0fff0f,#1cff0b,#29ff08,#37ff04,#46ff01,#54ff00,#64ff00,#73ff00,#84ff00,#94ff00,#a5ff00,#b7ff00,#caff00,#dcff00,#f0ff00)"></i>
<i style="top:172px;left:0px;width:344px;height:2px;background:linear-gradient(90deg,#00f450,#00f74f,#00fa4f,#00fd4e,#00ff4c,#00ff4b,#00ff49,#00ff47,#00ff45,#00ff43,#00ff41,#00ff3f,#00ff3d,#00ff3b,#00ff38,#00ff36,#00ff34,#00ff32,#00ff2f,#00ff2d,#00ff2a,#00ff27,#00ff25,#0f2,#00ff1f,#00ff1c,#00ff19,#00ff16,#03ff13,#10ff10,#1dff0d,#2bff09,#39ff06,#47ff02,#56ff00,#6f0,#76ff00,#86ff00,#97ff00,#a8ff00,#baff00,#cdff00,#e0ff00,#f4ff00)"></i>
<i style="top:174px;left:0px;width:344px;height:2px;background:linear-gradient(90deg,#00f552,#00f851,#00fb50,#00fe4f,#00ff4e,#00ff4c,#00ff4a,#00ff48,#00ff46,#0f4,#00ff42,#00ff40,#00ff3e,#00ff3c,#00ff3a,#00ff38,#00ff35,#0f3,#00ff31,#00ff2e,#00ff2c,#00ff29,#00ff26,#00ff24,#00ff21,#00ff1e,#00ff1b,#00ff18,#04ff15,#11ff12,#1eff0e,#2cff0b,#3bff07,#49ff04,#58ff00,#68ff00,#78ff00,#8f0,#9f0,#abff00,#bdff00,#d0ff00,#e3ff00,#f7ff00)"></i>
<i style="top:176px;left:0px;width:352px;height:2px;background:linear-gradient(90deg,#00f653,#00f953,#00fc52,#00ff51,#00ff4f,#00ff4e,#00ff4c,#00ff4a,#00ff48,#00ff46,#0f4,#00ff42,#00ff40,#00ff3e,#00ff3b,#00ff39,#00ff37,#00ff35,#00ff32,#00ff30,#00ff2d,#00ff2b,#00ff28,#00ff25,#0f2,#00ff1f,#00ff1c,#00ff19,#05ff16,#12ff13,#20ff10,#2eff0c,#3cff09,#4bff05,#5aff02,#6aff00,#7aff00,#8bff00,#9cff00,#aeff00,#c0ff00,#d3ff00,#e7ff00,#fbff00,#ffef00)"></i>
<i style="top:178px;left:0px;width:352px;height:2px;background:linear-gradient(90deg,#00f755,#00fa54,#00fd54,#00ff53,#00ff51,#00ff4f,#00ff4d,#00ff4b,#00ff49,#00ff47,#00ff45,#00ff43,#00ff41,#00ff3f,#00ff3d,#00ff3b,#00ff38,#00ff36,#00ff34,#00ff31,#00ff2f,#00ff2c,#00ff29,#00ff27,#00ff24,#00ff21,#00ff1e,#00ff1b,#06ff18,#14ff15,#21ff11,#2fff0e,#3eff0a,#4dff07,#5cff03,#6cff00,#7cff00,#8dff00,#9fff00,#b1ff00,#c3ff00,#d7ff00,#ebff00,#ff0,#ffeb00)"></i>
<i style="top:180px;left:0px;width:352px;height:2px;background:linear-gradient(90deg,#00f757,#00fa56,#00fd55,#00ff54,#00ff52,#00ff51,#00ff4f,#00ff4d,#00ff4b,#00ff49,#00ff47,#00ff45,#00ff43,#00ff41,#00ff3f,#00ff3c,#00ff3a,#00ff38,#00ff35,#0f3,#00ff30,#00ff2e,#00ff2b,#00ff28,#00ff25,#00ff23,#00ff20,#00ff1d,#07ff19,#15ff16,#23ff13,#31ff0f,#40ff0c,#4fff08,#5eff05,#6eff01,#7fff00,#90ff00,#a2ff00,#b4ff00,#c7ff00,#daff00,#ef0,#fffb00,#ffe800)"></i>
<i style="top:182px;left:0px;width:360px;height:2px;background:linear-gradient(90deg,#00f858,#00fb58,#00fe57,#00ff56,#00ff54,#00ff52,#00ff50,#00ff4e,#00ff4d,#00ff4b,#00ff49,#00ff47,#0f4,#00ff42,#00ff40,#00ff3e,#00ff3c,#00ff39,#00ff37,#00ff34,#00ff32,#00ff2f,#00ff2d,#00ff2a,#00ff27,#00ff24,#00ff21,#00ff1e,#09ff1b,#16ff18,#24ff14,#3f1,#41ff0e,#51ff0a,#60ff06,#71ff02,#81ff00,#93ff00,#a4ff00,#b7ff00,#caff00,#deff00,#f2ff00,#fff700,#ffe400,#ffd300)"></i>
<i style="top:184px;left:0px;width:360px;height:2px;background:linear-gradient(90deg,#00f95a,#00fc59,#00ff59,#00ff57,#0f5,#00ff54,#00ff52,#00ff50,#00ff4e,#00ff4c,#00ff4a,#00ff48,#00ff46,#0f4,#00ff42,#00ff3f,#00ff3d,#00ff3b,#00ff38,#00ff36,#0f3,#00ff31,#00ff2e,#00ff2b,#00ff29,#00ff26,#00ff23,#00ff20,#0aff1d,#18ff19,#26ff16,#34ff13,#43ff0f,#53ff0c,#62ff08,#73ff04,#84ff00,#95ff00,#a7ff00,#baff00,#cdff00,#e1ff00,#f6ff00,#fff300,#ffe100,#ffd000)"></i>
<i style="top:186px;left:0px;width:360px;height:2px;background:linear-gradient(90deg,#00f95c,#00fd5b,#00ff5a,#00ff59,#00ff57,#0f5,#00ff53,#00ff52,#00ff50,#00ff4e,#00ff4c,#00ff4a,#00ff48,#00ff45,#00ff43,#00ff41,#00ff3f,#00ff3c,#00ff3a,#00ff38,#00ff35,#00ff32,#00ff30,#00ff2d,#00ff2a,#00ff27,#00ff24,#00ff21,#0bff1e,#19ff1b,#27ff18,#36ff14,#45ff11,#54ff0d,#65ff09,#75ff06,#86ff02,#98ff00,#af0,#bdff00,#d1ff00,#e5ff00,#faff00,#fff000,#fd0,#ffcd00)"></i>
<i style="top:188px;left:0px;width:360px;height:2px;background:linear-gradient(90deg,#00fa5e,#00fd5d,#00ff5c,#00ff5a,#00ff59,#00ff57,#0f5,#00ff53,#00ff51,#00ff4f,#00ff4d,#00ff4b,#00ff49,#00ff47,#00ff45,#00ff43,#00ff40,#00ff3e,#00ff3c,#00ff39,#00ff37,#00ff34,#00ff31,#00ff2f,#00ff2c,#00ff29,#00ff26,#00ff23,#0cff20,#1aff1d,#29ff19,#37ff16,#47ff12,#56ff0f,#67ff0b,#77ff07,#89ff03,#9bff00,#adff00,#c0ff00,#d4ff00,#e9ff00,#feff00,#ffec00,#ffda00,#ffca00)"></i>
<i style="top:190px;left:0px;width:368px;height:2px;background:linear-gradient(90deg,#00fb5f,#00fe5f,#00ff5e,#00ff5c,#00ff5a,#00ff58,#00ff57,#0f5,#00ff53,#00ff51,#00ff4f,#00ff4d,#00ff4b,#00ff49,#00ff47,#0f4,#00ff42,#00ff40,#00ff3d,#00ff3b,#00ff38,#00ff36,#0f3,#00ff30,#00ff2e,#00ff2b,#00ff28,#00ff25,#0eff22,#1cff1e,#2aff1b,#39ff18,#49ff14,#59ff10,#69ff0d,#7aff09,#8bff05,#9dff01,#b0ff00,#c4ff00,#d8ff00,#ecff00,#fffc00,#ffe800,#ffd600,#ffc700,#ffb900)"></i>
<i style="top:192px;left:0px;width:368px;height:2px;background:linear-gradient(90deg,#00fb61,#00fe61,#00ff5f,#00ff5e,#00ff5c,#00ff5a,#00ff58,#00ff56,#0f5,#00ff53,#00ff51,#00ff4f,#00ff4d,#00ff4a,#00ff48,#00ff46,#0f4,#00ff41,#00ff3f,#00ff3d,#00ff3a,#00ff38,#00ff35,#00ff32,#00ff2f,#00ff2c,#00ff29,#01ff26,#0fff23,#1dff20,#2cff1d,#3bff19,#4bff16,#5bff12,#6bff0e,#7cff0a,#8eff06,#a0ff02,#b3ff00,#c7ff00,#dbff00,#f0ff00,#fff800,#ffe400,#ffd300,#ffc400,#ffb600)"></i>
<i style="top:194px;left:0px;width:368px;height:2px;background:linear-gradient(90deg,#00fc63,#00ff63,#00ff61,#00ff5f,#00ff5d,#00ff5c,#00ff5a,#00ff58,#00ff56,#00ff54,#00ff52,#00ff50,#00ff4e,#00ff4c,#00ff4a,#00ff48,#00ff46,#00ff43,#00ff41,#00ff3e,#00ff3c,#00ff39,#00ff37,#00ff34,#00ff31,#00ff2e,#00ff2b,#02ff28,#10ff25,#1fff22,#2dff1e,#3dff1b,#4cff18,#5dff14,#6dff10,#7fff0c,#91ff08,#a3ff04,#b6ff00,#caff00,#dfff00,#f4ff00,#fff400,#ffe100,#ffd000,#ffc000,#ffb300)"></i>
<i style="top:196px;left:0px;width:376px;height:2px;background:linear-gradient(90deg,#00fd65,#00ff64,#00ff63,#00ff61,#00ff5f,#00ff5d,#00ff5c,#00ff5a,#00ff58,#00ff56,#00ff54,#00ff52,#00ff50,#00ff4e,#00ff4c,#00ff4a,#00ff47,#00ff45,#00ff43,#00ff40,#00ff3e,#00ff3b,#00ff38,#00ff36,#0f3,#00ff30,#00ff2d,#03ff2a,#12ff27,#20ff24,#2fff20,#3eff1d,#4eff19,#5fff16,#70ff12,#81ff0e,#93ff0a,#a6ff06,#baff01,#ceff00,#e3ff00,#f8ff00,#fff000,#fd0,#fc0,#ffbd00,#ffb000,#ffa400)"></i>
<i style="top:198px;left:0px;width:376px;height:2px;background:linear-gradient(90deg,#00fd67,#0f6,#00ff64,#00ff63,#00ff61,#00ff5f,#00ff5d,#00ff5b,#00ff5a,#00ff58,#00ff56,#00ff54,#00ff52,#00ff50,#00ff4d,#00ff4b,#00ff49,#00ff47,#0f4,#00ff42,#00ff3f,#00ff3d,#00ff3a,#00ff37,#00ff35,#00ff32,#00ff2f,#05ff2c,#13ff29,#22ff25,#31ff22,#40ff1f,#50ff1b,#61ff17,#72ff14,#84ff10,#96ff0c,#a9ff08,#bdff03,#d1ff00,#e6ff00,#fcff00,#ffec00,#ffda00,#ffc900,#ffba00,#ffad00,#ffa100)"></i>
<i style="top:200px;left:0px;width:376px;height:2px;background:linear-gradient(90deg,#00fe69,#00ff67,#0f6,#00ff64,#00ff63,#00ff61,#00ff5f,#00ff5d,#00ff5b,#00ff59,#00ff58,#00ff56,#00ff53,#00ff51,#00ff4f,#00ff4d,#00ff4b,#00ff48,#00ff46,#0f4,#00ff41,#00ff3f,#00ff3c,#00ff39,#00ff36,#00ff34,#00ff31,#06ff2e,#14ff2a,#23ff27,#32ff24,#42ff20,#52ff1d,#63ff19,#75ff15,#87ff12,#99ff0e,#acff09,#c0ff05,#d5ff00,#eaff00,#fffd00,#ffe900,#ffd600,#ffc600,#ffb700,#fa0,#ff9f00)"></i>
<i style="top:202px;left:0px;width:384px;height:2px;background:linear-gradient(90deg,#00fe6b,#00ff69,#00ff68,#0f6,#00ff64,#00ff63,#00ff61,#00ff5f,#00ff5d,#00ff5b,#00ff59,#00ff57,#0f5,#00ff53,#00ff51,#00ff4f,#00ff4d,#00ff4a,#00ff48,#00ff46,#00ff43,#00ff40,#00ff3e,#00ff3b,#00ff38,#00ff35,#0f3,#07ff2f,#16ff2c,#25ff29,#34ff26,#4f2,#55ff1f,#66ff1b,#77ff17,#89ff13,#9cff0f,#b0ff0b,#c4ff07,#d9ff02,#ef0,#fff900,#ffe500,#ffd300,#ffc300,#ffb500,#ffa800,#ff9c00,#ff9200)"></i>
<i style="top:204px;left:0px;width:384px;height:2px;background:linear-gradient(90deg,#00ff6c,#00ff6b,#00ff69,#00ff68,#0f6,#00ff64,#00ff63,#00ff61,#00ff5f,#00ff5d,#00ff5b,#00ff59,#00ff57,#0f5,#00ff53,#00ff51,#00ff4e,#00ff4c,#00ff4a,#00ff47,#00ff45,#00ff42,#00ff40,#00ff3d,#00ff3a,#00ff37,#00ff34,#08ff31,#17ff2e,#26ff2b,#36ff28,#46ff24,#57ff21,#68ff1d,#7aff19,#8cff15,#9fff11,#b3ff0d,#c7ff09,#dcff04,#f2ff00,#fff500,#ffe100,#ffcf00,#ffc000,#ffb200,#ffa500,#ff9a00,#ff8f00)"></i>
<i style="top:206px;left:0px;width:384px;height:2px;background:linear-gradient(90deg,#00ff6e,#00ff6d,#00ff6b,#00ff69,#00ff68,#0f6,#00ff64,#00ff63,#00ff61,#00ff5f,#00ff5d,#00ff5b,#00ff59,#00ff57,#0f5,#00ff53,#00ff50,#00ff4e,#00ff4c,#00ff49,#00ff47,#0f4,#00ff42,#00ff3f,#00ff3c,#00ff39,#00ff36,#0aff33,#19ff30,#28ff2d,#38ff2a,#48ff26,#59ff23,#6aff1f,#7cff1b,#8fff17,#a2ff13,#b6ff0f,#cbff0b,#e0ff06,#f7ff01,#fff100,#fd0,#fc0,#ffbd00,#ffaf00,#ffa200,#ff9700,#ff8d00)"></i>
<i style="top:208px;left:0px;width:392px;height:2px;background:linear-gradient(90deg,#00ff70,#00ff6e,#00ff6d,#00ff6b,#00ff6a,#00ff68,#0f6,#00ff64,#00ff63,#00ff61,#00ff5f,#00ff5d,#00ff5b,#00ff59,#00ff57,#00ff54,#00ff52,#00ff50,#00ff4e,#00ff4b,#00ff49,#00ff46,#0f4,#00ff41,#00ff3e,#00ff3b,#00ff38,#0bff35,#1aff32,#2aff2f,#39ff2c,#4aff28,#5bff25,#6dff21,#7fff1d,#92ff19,#a5ff15,#b9ff11,#ceff0d,#e4ff08,#fbff03,#ffed00,#ffda00,#ffc900,#ffb900,#ffac00,#ffa000,#ff9500,#ff8b00,#ff8200)"></i>
<i style="top:210px;left:0px;width:392px;height:2px;background:linear-gradient(90deg,#00ff72,#00ff70,#00ff6f,#00ff6d,#00ff6b,#00ff6a,#00ff68,#0f6,#00ff64,#00ff62,#00ff61,#00ff5f,#00ff5d,#00ff5b,#00ff59,#00ff56,#00ff54,#00ff52,#00ff50,#00ff4d,#00ff4b,#00ff48,#00ff46,#00ff43,#00ff40,#00ff3d,#00ff3a,#0dff37,#1cff34,#2bff31,#3bff2e,#4cff2a,#5dff27,#6fff23,#81ff1f,#95ff1b,#a8ff17,#bdff13,#d2ff0f,#e8ff0a,#ffff05,#ffe900,#ffd600,#ffc500,#ffb600,#ffa900,#ff9d00,#ff9200,#f80,#ff7f00)"></i>
<i style="top:212px;left:0px;width:392px;height:2px;background:linear-gradient(90deg,#00ff74,#00ff72,#00ff70,#00ff6f,#00ff6d,#00ff6b,#00ff6a,#00ff68,#0f6,#00ff64,#00ff62,#00ff61,#00ff5f,#00ff5d,#00ff5a,#00ff58,#00ff56,#00ff54,#00ff52,#00ff4f,#00ff4d,#00ff4a,#00ff48,#00ff45,#00ff42,#00ff3f,#00ff3c,#0eff39,#1dff36,#2dff33,#3dff30,#4eff2c,#5fff29,#71ff25,#84ff21,#97ff1d,#acff19,#c0ff15,#d6ff11,#ecff0c,#fffb07,#ffe502,#ffd200,#ffc200,#ffb300,#ffa600,#ff9a00,#ff9000,#ff8600,#ff7d00)"></i>
<i style="top:214px;left:8px;width:384px;height:2px;background:linear-gradient(90deg,#00ff74,#00ff72,#00ff71,#00ff6f,#00ff6d,#00ff6c,#00ff6a,#00ff68,#0f6,#00ff64,#00ff62,#00ff61,#00ff5e,#00ff5c,#00ff5a,#00ff58,#00ff56,#00ff54,#00ff51,#00ff4f,#00ff4c,#00ff4a,#00ff47,#0f4,#00ff41,#00ff3e,#0fff3b,#1fff38,#2fff35,#3fff32,#50ff2e,#62ff2b,#74ff27,#87ff23,#9aff1f,#afff1b,#c4ff17,#daff13,#f0ff0e,#fff609,#ffe104,#ffcf00,#ffbf00,#ffb000,#ffa300,#ff9800,#ff8d00,#ff8400,#ff7b00)"></i>
<i style="top:216px;left:8px;width:392px;height:2px;background:linear-gradient(90deg,#00ff76,#00ff74,#00ff73,#00ff71,#00ff6f,#00ff6e,#00ff6c,#00ff6a,#00ff68,#0f6,#00ff64,#00ff62,#00ff60,#00ff5e,#00ff5c,#00ff5a,#00ff58,#00ff56,#00ff53,#00ff51,#00ff4e,#00ff4c,#00ff49,#00ff46,#00ff43,#02ff41,#11ff3e,#20ff3a,#30ff37,#41ff34,#52ff30,#64ff2d,#77ff29,#8aff25,#9eff21,#b2ff1d,#c7ff19,#deff15,#f5ff10,#fff20b,#ffdd06,#ffcb01,#fb0,#ffad00,#ffa100,#ff9500,#ff8b00,#ff8200,#ff7900,#ff7100)"></i>
<i style="top:218px;left:8px;width:392px;height:2px;background:linear-gradient(90deg,#00ff78,#00ff76,#00ff74,#00ff73,#00ff71,#00ff6f,#00ff6e,#00ff6c,#00ff6a,#00ff68,#0f6,#00ff64,#00ff62,#00ff60,#00ff5e,#00ff5c,#00ff5a,#00ff58,#0f5,#00ff53,#00ff50,#00ff4e,#00ff4b,#00ff48,#00ff46,#03ff43,#12ff40,#22ff3d,#32ff39,#43ff36,#5f3,#67ff2f,#79ff2b,#8dff28,#a1ff24,#b6ff20,#cbff1b,#e2ff17,#f9ff12,#ffee0d,#ffda07,#ffc803,#ffb800,#fa0,#ff9e00,#ff9300,#ff8900,#ff7f00,#f70,#ff6f00)"></i>
<i style="top:220px;left:8px;width:392px;height:2px;background:linear-gradient(90deg,#00ff79,#00ff78,#00ff76,#00ff75,#00ff73,#00ff71,#00ff70,#00ff6e,#00ff6c,#00ff6a,#00ff68,#00ff67,#00ff65,#00ff62,#00ff60,#00ff5e,#00ff5c,#00ff5a,#00ff57,#0f5,#00ff52,#00ff50,#00ff4d,#00ff4b,#00ff48,#04ff45,#14ff42,#24ff3f,#34ff3c,#45ff38,#57ff35,#69ff31,#7cff2e,#90ff2a,#a4ff26,#b9ff22,#cfff1e,#e6ff19,#feff14,#ffea0e,#ffd609,#ffc404,#ffb500,#ffa700,#ff9b00,#ff9000,#ff8600,#ff7d00,#ff7500,#ff6d00)"></i>
<i style="top:222px;left:8px;width:400px;height:2px;background:linear-gradient(90deg,#00ff7b,#00ff7a,#00ff78,#0f7,#00ff75,#00ff73,#00ff72,#00ff70,#00ff6e,#00ff6c,#00ff6b,#00ff69,#00ff67,#00ff65,#00ff62,#00ff60,#00ff5e,#00ff5c,#00ff5a,#00ff57,#0f5,#00ff52,#00ff4f,#00ff4d,#00ff4a,#06ff47,#15ff44,#25ff41,#36ff3e,#47ff3b,#59ff37,#6cff34,#7fff30,#93ff2c,#a7ff28,#bdff24,#d3ff20,#eaff1b,#fffc16,#ffe610,#ffd20b,#ffc106,#ffb202,#ffa500,#f90,#ff8e00,#ff8400,#ff7b00,#ff7300,#ff6b00,#ff6400)"></i>
<i style="top:224px;left:8px;width:400px;height:2px;background:linear-gradient(90deg,#00ff7d,#00ff7c,#00ff7a,#00ff79,#0f7,#00ff75,#00ff74,#00ff72,#00ff70,#00ff6e,#00ff6d,#00ff6b,#00ff69,#00ff67,#00ff65,#00ff62,#00ff60,#00ff5e,#00ff5c,#00ff59,#00ff57,#00ff54,#00ff52,#00ff4f,#00ff4c,#07ff49,#17ff46,#27ff43,#38ff40,#49ff3d,#5bff39,#6eff36,#82ff32,#96ff2e,#abff2a,#c0ff26,#d7ff22,#eeff1e,#fff718,#ffe212,#ffce0c,#ffbe07,#ffaf03,#ffa200,#ff9600,#ff8b00,#ff8100,#ff7900,#ff7100,#ff6900,#ff6200)"></i>
<i style="top:226px;left:8px;width:400px;height:2px;background:linear-gradient(90deg,#00ff7f,#00ff7e,#00ff7c,#00ff7b,#00ff79,#0f7,#00ff76,#00ff74,#00ff72,#00ff71,#00ff6f,#00ff6d,#00ff6b,#00ff69,#00ff67,#00ff65,#00ff62,#00ff60,#00ff5e,#00ff5c,#00ff59,#00ff57,#00ff54,#00ff51,#00ff4e,#08ff4c,#18ff49,#29ff46,#3aff42,#4bff3f,#5eff3c,#71ff38,#84ff35,#99ff31,#aeff2d,#c4ff29,#dbff24,#f3ff20,#fff31a,#ffde14,#ffcb0e,#ffba09,#ffac05,#ff9f01,#ff9300,#ff8900,#ff7f00,#ff7600,#ff6e00,#ff6700,#ff6000)"></i>
<i style="top:228px;left:8px;width:408px;height:2px;background:linear-gradient(90deg,#00ff81,#00ff80,#00ff7e,#00ff7d,#00ff7b,#00ff7a,#00ff78,#00ff76,#00ff74,#00ff73,#00ff71,#00ff6f,#00ff6d,#00ff6b,#00ff69,#00ff67,#00ff65,#00ff62,#00ff60,#00ff5e,#00ff5b,#00ff59,#00ff56,#00ff54,#00ff51,#0aff4e,#1aff4b,#2bff48,#3cff45,#4eff42,#60ff3e,#73ff3b,#87ff37,#9cff33,#b1ff2f,#c8ff2b,#dfff27,#f7ff22,#ffef1c,#ffda15,#ffc710,#ffb70b,#ffa906,#ff9c02,#ff9100,#ff8600,#ff7d00,#ff7400,#ff6c00,#ff6500,#ff5f00,#ff5800)"></i>
<i style="top:230px;left:8px;width:408px;height:2px;background:linear-gradient(90deg,#00ff83,#00ff82,#00ff80,#00ff7f,#00ff7d,#00ff7c,#00ff7a,#00ff78,#0f7,#00ff75,#00ff73,#00ff71,#00ff6f,#00ff6d,#00ff6b,#00ff69,#00ff67,#00ff65,#00ff62,#00ff60,#00ff5e,#00ff5b,#00ff59,#00ff56,#00ff53,#0bff50,#1cff4d,#2cff4a,#3eff47,#50ff44,#63ff41,#76ff3d,#8aff39,#9fff36,#b5ff32,#ccff2e,#e3ff29,#fcff25,#ffea1e,#ffd617,#ffc411,#ffb40c,#ffa608,#ff9903,#ff8e00,#ff8400,#ff7b00,#ff7200,#ff6a00,#ff6300,#ff5d00,#ff5700)"></i>
<i style="top:232px;left:8px;width:408px;height:2px;background:linear-gradient(90deg,#00ff85,#00ff84,#00ff82,#00ff81,#00ff7f,#00ff7e,#00ff7c,#00ff7a,#00ff79,#0f7,#00ff75,#00ff73,#00ff71,#00ff6f,#00ff6d,#00ff6b,#00ff69,#00ff67,#00ff65,#00ff62,#00ff60,#00ff5e,#00ff5b,#00ff58,#00ff56,#0dff53,#1dff50,#2eff4d,#40ff4a,#52ff46,#65ff43,#79ff40,#8dff3c,#a3ff38,#b9ff34,#d0ff30,#e8ff2c,#fffd27,#ffe61f,#ffd219,#ffc013,#ffb10e,#ffa309,#ff9605,#ff8b01,#ff8100,#ff7800,#ff7000,#ff6800,#ff6100,#ff5b00,#f50)"></i>
<i style="top:234px;left:8px;width:416px;height:2px;background:linear-gradient(90deg,#00ff87,#00ff86,#00ff85,#00ff83,#00ff82,#00ff80,#00ff7e,#00ff7d,#00ff7b,#00ff79,#0f7,#00ff76,#00ff74,#00ff72,#00ff70,#00ff6e,#00ff6c,#00ff69,#00ff67,#00ff65,#00ff62,#00ff60,#00ff5d,#00ff5b,#00ff58,#0eff55,#1fff52,#30ff4f,#42ff4c,#55ff49,#68ff46,#7cff42,#90ff3f,#a6ff3b,#bcff37,#d4ff33,#ecff2e,#fff929,#ffe221,#ffce1a,#ffbd14,#ffad0f,#ffa00a,#ff9406,#ff8903,#ff7f00,#ff7600,#ff6e00,#f60,#ff6000,#ff5900,#ff5300,#ff4e00)"></i>
<i style="top:236px;left:8px;width:416px;height:2px;background:linear-gradient(90deg,#00ff8a,#0f8,#00ff87,#00ff85,#00ff84,#00ff82,#00ff81,#00ff7f,#00ff7d,#00ff7b,#00ff7a,#00ff78,#00ff76,#00ff74,#00ff72,#00ff70,#00ff6e,#00ff6c,#00ff6a,#00ff67,#00ff65,#00ff62,#00ff60,#00ff5d,#00ff5b,#10ff58,#21ff55,#32ff52,#44ff4f,#57ff4c,#6aff48,#7fff45,#94ff41,#aaff3d,#c0ff39,#d8ff35,#f1ff31,#fff42b,#ffde23,#ffca1c,#ffb916,#fa1,#ff9d0c,#ff9108,#ff8604,#ff7d00,#ff7400,#ff6c00,#ff6400,#ff5e00,#ff5700,#ff5200,#ff4c00)"></i>
<i style="top:238px;left:8px;width:416px;height:2px;background:linear-gradient(90deg,#00ff8c,#00ff8a,#00ff89,#00ff87,#00ff86,#00ff84,#00ff83,#00ff81,#00ff7f,#00ff7e,#00ff7c,#00ff7a,#00ff78,#00ff76,#00ff74,#00ff72,#00ff70,#00ff6e,#00ff6c,#00ff6a,#00ff67,#00ff65,#00ff62,#00ff60,#01ff5d,#11ff5a,#22ff58,#34ff55,#46ff51,#59ff4e,#6dff4b,#82ff47,#97ff44,#adff40,#c4ff3c,#dcff38,#f5ff34,#ffef2d,#ffd925,#ffc61e,#ffb617,#ffa712,#ff9a0d,#ff8e09,#ff8405,#ff7a02,#ff7200,#ff6a00,#ff6200,#ff5c00,#ff5600,#ff5000,#ff4b00)"></i>
<i style="top:240px;left:8px;width:424px;height:2px;background:linear-gradient(90deg,#00ff8e,#00ff8c,#00ff8b,#00ff8a,#0f8,#00ff87,#00ff85,#00ff83,#00ff82,#00ff80,#00ff7e,#00ff7d,#00ff7b,#00ff79,#0f7,#00ff75,#00ff73,#00ff71,#00ff6f,#00ff6c,#00ff6a,#00ff68,#00ff65,#00ff62,#02ff60,#13ff5d,#24ff5a,#36ff57,#49ff54,#5cff51,#70ff4e,#85ff4a,#9aff47,#b1ff43,#c8ff3f,#e1ff3b,#faff37,#ffeb2e,#ffd526,#ffc31f,#ffb219,#ffa414,#ff970f,#ff8c0a,#ff8106,#ff7803,#ff6f00,#ff6800,#ff6000,#ff5a00,#ff5400,#ff4e00,#ff4900,#f40)"></i>
<i style="top:242px;left:8px;width:424px;height:2px;background:linear-gradient(90deg,#00ff90,#00ff8f,#00ff8d,#00ff8c,#00ff8a,#00ff89,#00ff87,#00ff86,#00ff84,#00ff82,#00ff81,#00ff7f,#00ff7d,#00ff7b,#00ff79,#0f7,#00ff75,#00ff73,#00ff71,#00ff6f,#00ff6d,#00ff6a,#00ff68,#00ff65,#04ff62,#15ff60,#26ff5d,#38ff5a,#4bff57,#5eff54,#73ff50,#88ff4d,#9eff49,#b5ff46,#ccff42,#e5ff3e,#ffff3a,#ffe630,#ffd128,#ffbf21,#ffaf1b,#ffa115,#ff9410,#ff890c,#ff7f08,#ff7604,#ff6d01,#f60,#ff5f00,#ff5800,#ff5200,#ff4d00,#ff4700,#ff4300)"></i>
<i style="top:244px;left:8px;width:424px;height:2px;background:linear-gradient(90deg,#00ff92,#00ff91,#00ff90,#00ff8e,#00ff8d,#00ff8b,#00ff8a,#0f8,#00ff87,#00ff85,#00ff83,#00ff81,#00ff80,#00ff7e,#00ff7c,#00ff7a,#00ff78,#00ff76,#00ff74,#00ff71,#00ff6f,#00ff6d,#00ff6a,#00ff68,#05ff65,#16ff62,#28ff60,#3aff5d,#4dff5a,#61ff56,#76ff53,#8bff50,#a1ff4c,#b8ff49,#d1ff45,#eaff41,#fffa3b,#ffe232,#ffcd29,#ffbc22,#ffac1c,#ff9e16,#ff9211,#ff860d,#ff7c09,#ff7305,#ff6b02,#ff6400,#ff5d00,#ff5600,#ff5000,#ff4b00,#ff4600,#ff4100)"></i>
<i style="top:246px;left:8px;width:424px;height:2px;background:linear-gradient(90deg,#00ff94,#00ff93,#00ff92,#00ff90,#00ff8f,#00ff8e,#00ff8c,#00ff8b,#00ff89,#00ff87,#00ff86,#00ff84,#00ff82,#00ff80,#00ff7e,#00ff7c,#00ff7a,#00ff78,#00ff76,#00ff74,#00ff72,#00ff6f,#00ff6d,#00ff6b,#07ff68,#18ff65,#2aff62,#3cff60,#50ff5d,#64ff59,#79ff56,#8eff53,#a5ff4f,#bcff4c,#d5ff48,#ef4,#fff53d,#ffde33,#ffca2b,#ffb824,#ffa91d,#ff9b18,#ff8f13,#ff840e,#ff7a0a,#ff7107,#ff6903,#ff6200,#ff5b00,#ff5400,#ff4f00,#ff4900,#f40,#ff4000)"></i>
<i style="top:248px;left:8px;width:432px;height:2px;background:linear-gradient(90deg,#00ff97,#00ff95,#00ff94,#00ff93,#00ff91,#00ff90,#00ff8e,#00ff8d,#00ff8b,#00ff8a,#0f8,#00ff86,#00ff85,#00ff83,#00ff81,#00ff7f,#00ff7d,#00ff7b,#00ff79,#0f7,#00ff75,#00ff72,#00ff70,#00ff6d,#08ff6b,#1aff68,#2cff65,#3fff62,#52ff5f,#66ff5c,#7cff59,#91ff56,#a8ff52,#c0ff4f,#d9ff4b,#f3ff47,#fff03f,#ffd935,#ffc62d,#ffb425,#ffa51f,#ff9819,#ff8c14,#ff8110,#ff780c,#ff6f08,#ff6704,#ff6001,#ff5900,#ff5300,#ff4d00,#ff4800,#ff4300,#ff3e00,#ff3a00)"></i>
<i style="top:250px;left:8px;width:432px;height:2px;background:linear-gradient(90deg,#0f9,#00ff98,#00ff97,#00ff95,#00ff94,#00ff92,#00ff91,#00ff8f,#00ff8e,#00ff8c,#00ff8b,#00ff89,#00ff87,#00ff85,#00ff84,#00ff82,#00ff80,#00ff7e,#00ff7c,#00ff7a,#0f7,#00ff75,#00ff73,#00ff70,#0aff6e,#1bff6b,#2eff68,#41ff65,#55ff62,#69ff5f,#7fff5c,#95ff59,#acff55,#c4ff52,#deff4e,#f8ff4a,#ffec40,#ffd537,#ffc22e,#ffb127,#ffa220,#ff951b,#ff8916,#ff7f11,#ff750d,#ff6d09,#ff6506,#ff5e02,#ff5700,#ff5100,#ff4b00,#ff4600,#ff4100,#ff3d00,#ff3800)"></i>
<i style="top:252px;left:8px;width:432px;height:2px;background:linear-gradient(90deg,#00ff9b,#00ff9a,#0f9,#00ff98,#00ff96,#00ff95,#00ff93,#00ff92,#00ff90,#00ff8f,#00ff8d,#00ff8c,#00ff8a,#0f8,#00ff86,#00ff84,#00ff83,#00ff81,#00ff7e,#00ff7c,#00ff7a,#00ff78,#00ff76,#00ff73,#0bff71,#1dff6e,#30ff6b,#43ff68,#57ff65,#6cff62,#82ff5f,#98ff5c,#b0ff58,#c9ff55,#e2ff51,#fdff4d,#ffe742,#ffd138,#ffbe30,#ffae28,#ff9f22,#ff921c,#ff8717,#ff7c12,#ff730e,#ff6a0a,#ff6307,#ff5c04,#ff5501,#ff4f00,#ff4900,#f40,#ff4000,#ff3b00,#ff3700)"></i>
<i style="top:254px;left:8px;width:440px;height:2px;background:linear-gradient(90deg,#00ff9e,#00ff9d,#00ff9b,#00ff9a,#0f9,#00ff97,#00ff96,#00ff94,#00ff93,#00ff91,#00ff90,#00ff8e,#00ff8d,#00ff8b,#00ff89,#00ff87,#00ff85,#00ff83,#00ff81,#00ff7f,#00ff7d,#00ff7b,#00ff78,#00ff76,#0dff74,#1fff71,#32ff6e,#45ff6c,#5aff69,#6fff66,#85ff62,#9cff5f,#b4ff5c,#cdff58,#e7ff54,#fffc4f,#ffe244,#ffcd3a,#ffba31,#ffaa2a,#ff9c23,#ff8f1d,#ff8418,#ff7a14,#ff700f,#ff680b,#ff6108,#ff5a05,#ff5302,#ff4d00,#ff4800,#ff4300,#ff3e00,#ff3a00,#ff3500,#f73000)"></i>
<i style="top:256px;left:8px;width:440px;height:2px;background:linear-gradient(90deg,#00ffa0,#00ff9f,#00ff9e,#00ff9d,#00ff9b,#00ff9a,#00ff98,#00ff97,#00ff96,#00ff94,#00ff93,#00ff91,#00ff8f,#00ff8e,#00ff8c,#00ff8a,#0f8,#00ff86,#00ff84,#00ff82,#00ff80,#00ff7e,#00ff7c,#00ff79,#0fff77,#21ff74,#34ff71,#48ff6f,#5cff6c,#72ff69,#8f6,#a0ff62,#b8ff5f,#d1ff5b,#ecff58,#fff651,#ffde45,#ffc93b,#ffb733,#ffa72b,#ff9925,#ff8c1f,#ff8119,#ff7715,#ff6e10,#ff660d,#ff5e09,#ff5806,#ff5103,#ff4c00,#ff4600,#ff4100,#ff3c00,#ff3800,#fc3300,#f52e00)"></i>
<i style="top:258px;left:8px;width:440px;height:2px;background:linear-gradient(90deg,#00ffa3,#00ffa2,#00ffa0,#00ff9f,#00ff9e,#00ff9c,#00ff9b,#00ff9a,#00ff98,#00ff97,#00ff95,#00ff94,#00ff92,#00ff90,#00ff8f,#00ff8d,#00ff8b,#00ff89,#00ff87,#00ff85,#00ff83,#00ff81,#00ff7f,#00ff7c,#10ff7a,#23ff77,#36ff75,#4aff72,#5fff6f,#75ff6c,#8cff69,#a3ff66,#bcff62,#d6ff5f,#f1ff5b,#fff153,#ffd947,#ffc53d,#ffb334,#ffa32d,#ff9626,#ff8920,#ff7f1b,#ff7516,#ff6c12,#ff640e,#ff5c0a,#ff5607,#ff4f04,#ff4a01,#f40,#ff4000,#ff3b00,#ff3700,#f93200,#f22d00)"></i>
<i style="top:260px;left:8px;width:448px;height:2px;background:linear-gradient(90deg,#00ffa5,#00ffa4,#00ffa3,#00ffa2,#00ffa0,#00ff9f,#00ff9e,#00ff9c,#00ff9b,#00ff9a,#00ff98,#00ff96,#00ff95,#00ff93,#00ff92,#00ff90,#00ff8e,#00ff8c,#00ff8a,#0f8,#00ff86,#00ff84,#00ff82,#00ff7f,#12ff7d,#25ff7a,#38ff78,#4dff75,#62ff72,#78ff6f,#8fff6c,#a7ff69,#c0ff66,#dbff62,#f6ff5f,#ffec54,#ffd549,#ffc13e,#ffaf36,#ffa02e,#ff9327,#ff8721,#ff7c1c,#ff7217,#ff6a13,#ff620f,#ff5a0b,#ff5408,#ff4e05,#ff4802,#ff4300,#ff3e00,#ff3900,#fe3500,#f73000,#f02b00,#e92700)"></i>
<i style="top:262px;left:16px;width:440px;height:2px;background:linear-gradient(90deg,#00ffa7,#00ffa5,#00ffa4,#00ffa3,#00ffa2,#00ffa0,#00ff9f,#00ff9e,#00ff9c,#00ff9b,#0f9,#00ff98,#00ff96,#00ff94,#00ff93,#00ff91,#00ff8f,#00ff8d,#00ff8b,#00ff89,#00ff87,#00ff85,#02ff83,#14ff80,#27ff7e,#3bff7b,#4fff79,#65ff76,#7bff73,#93ff70,#abff6d,#c5ff69,#dfff66,#fbff62,#ffe856,#ffd14a,#ffbd40,#ffac37,#ff9d30,#ff9029,#ff8423,#ff791d,#ff7018,#ff6714,#ff6010,#ff580c,#ff5209,#ff4c06,#ff4603,#ff4101,#ff3c00,#ff3800,#fb3300,#f42e00,#ed2900,#e72500)"></i>
<i style="top:264px;left:16px;width:440px;height:2px;background:linear-gradient(90deg,#00ffa9,#00ffa8,#00ffa7,#00ffa6,#00ffa4,#00ffa3,#00ffa2,#00ffa1,#00ff9f,#00ff9e,#00ff9c,#00ff9b,#0f9,#00ff97,#00ff96,#00ff94,#00ff92,#00ff90,#00ff8e,#00ff8c,#00ff8a,#0f8,#03ff86,#16ff84,#29ff81,#3dff7f,#52ff7c,#68ff79,#7fff76,#96ff73,#afff70,#c9ff6d,#e4ff6a,#fffd65,#ffe357,#ffcc4c,#ffb941,#ffa839,#ff9a31,#ff8d2a,#ff8124,#ff771f,#ff6d1a,#ff6515,#ff5d11,#ff560e,#ff500a,#ff4a07,#ff4504,#ff4001,#ff3b00,#ff3600,#f93100,#f12c00,#eb2800,#e42300)"></i>
<i style="top:266px;left:16px;width:448px;height:2px;background:linear-gradient(90deg,#00ffac,#00ffab,#0fa,#00ffa8,#00ffa7,#00ffa6,#00ffa5,#00ffa3,#00ffa2,#00ffa1,#00ff9f,#00ff9e,#00ff9c,#00ff9a,#0f9,#00ff97,#00ff95,#00ff94,#00ff92,#00ff90,#00ff8e,#00ff8c,#05ff89,#18ff87,#2bff85,#3fff82,#55ff80,#6bff7d,#82ff7a,#9aff77,#b3ff74,#ceff71,#e9ff6e,#fff867,#ffde59,#ffc84d,#ffb543,#ffa53a,#ff9632,#ff8a2b,#ff7e25,#ff7420,#ff6b1b,#ff6316,#ff5b12,#ff540f,#ff4e0b,#ff4808,#ff4305,#ff3e02,#ff3900,#fe3500,#f62f00,#ef2a00,#e82600,#e22200,#dc1e00)"></i>
<i style="top:268px;left:16px;width:448px;height:2px;background:linear-gradient(90deg,#00ffaf,#00ffad,#00ffac,#00ffab,#0fa,#00ffa9,#00ffa8,#00ffa6,#00ffa5,#00ffa4,#00ffa2,#00ffa1,#00ff9f,#00ff9e,#00ff9c,#00ff9a,#0f9,#00ff97,#00ff95,#00ff93,#00ff91,#00ff8f,#06ff8d,#19ff8b,#2dff88,#42ff86,#57ff83,#6eff81,#85ff7e,#9eff7b,#b7ff78,#d2ff75,#efff71,#fff269,#ffd95b,#ffc44f,#ffb144,#ffa13b,#ff9334,#ff872d,#ff7c27,#ff7221,#ff691c,#ff6118,#ff5913,#ff5210,#ff4c0c,#ff4609,#ff4106,#ff3c03,#ff3801,#fb3300,#f32d00,#ec2900,#e62400,#df2000,#da1d00)"></i>
<i style="top:270px;left:16px;width:448px;height:2px;background:linear-gradient(90deg,#00ffb1,#00ffb0,#00ffaf,#00ffae,#00ffad,#00ffac,#0fa,#00ffa9,#00ffa8,#00ffa7,#00ffa5,#00ffa4,#00ffa2,#00ffa1,#00ff9f,#00ff9e,#00ff9c,#00ff9a,#00ff98,#00ff96,#00ff94,#00ff92,#08ff90,#1bff8e,#2fff8c,#44ff89,#5aff87,#71ff84,#89ff82,#a2ff7f,#bcff7c,#d7ff79,#f4ff75,#ffed6a,#ffd55c,#ffc050,#ffae46,#ff9e3d,#ff9035,#ff842e,#ff7928,#ff6f22,#ff661d,#ff5e19,#ff5715,#ff5011,#ff4a0d,#ff450a,#ff4007,#ff3b04,#ff3602,#f83100,#f12c00,#ea2700,#e32300,#dd1f00,#d71c00)"></i>
<i style="top:272px;left:16px;width:456px;height:2px;background:linear-gradient(90deg,#00ffb4,#00ffb3,#00ffb2,#00ffb1,#00ffb0,#00ffaf,#00ffad,#00ffac,#00ffab,#0fa,#00ffa8,#00ffa7,#00ffa5,#00ffa4,#00ffa2,#00ffa1,#00ff9f,#00ff9d,#00ff9c,#00ff9a,#00ff98,#00ff96,#0aff94,#1dff92,#32ff90,#47ff8d,#5dff8b,#74ff88,#8cff86,#a6ff83,#c0ff80,#dcff7d,#f9ff7a,#ffe86c,#ffd05e,#ffbc52,#ffaa47,#ff9b3e,#ff8d36,#ff812f,#ff7629,#ff6d24,#ff641e,#ff5c1a,#ff5516,#ff4f12,#ff490e,#ff430b,#ff3e08,#ff3905,#ff3503,#f62f00,#ee2a00,#e72500,#e12100,#db1e00,#d51a00,#d01700)"></i>
<i style="top:274px;left:16px;width:456px;height:2px;background:linear-gradient(90deg,#00ffb7,#00ffb6,#00ffb5,#00ffb4,#00ffb3,#00ffb2,#00ffb0,#00ffaf,#00ffae,#00ffad,#00ffab,#0fa,#00ffa9,#00ffa7,#00ffa6,#00ffa4,#00ffa3,#00ffa1,#00ff9f,#00ff9d,#00ff9c,#00ff9a,#0cff98,#1fff96,#34ff93,#4aff91,#60ff8f,#78ff8c,#90ff8a,#aaff87,#c5ff84,#e1ff81,#ffff7e,#ffe36d,#ffcc5f,#ffb853,#ffa649,#ff9740,#ff8a38,#ff7e31,#ff742a,#ff6a25,#ff6220,#ff5a1b,#ff5317,#ff4d13,#ff470f,#ff410c,#ff3c09,#ff3806,#fe3304,#f42d01,#eb2800,#e52400,#de2000,#d81c00,#d31900,#cd1600)"></i>
<i style="top:276px;left:16px;width:456px;height:2px;background:linear-gradient(90deg,#00ffba,#00ffb9,#00ffb8,#00ffb7,#00ffb6,#00ffb5,#00ffb3,#00ffb2,#00ffb1,#00ffb0,#00ffaf,#00ffad,#00ffac,#00ffab,#00ffa9,#00ffa8,#00ffa6,#00ffa4,#00ffa3,#00ffa1,#00ff9f,#00ff9d,#0dff9b,#21ff99,#36ff97,#4cff95,#63ff93,#7bff90,#94ff8e,#aeff8b,#caff88,#e6ff85,#fff97f,#ffde6f,#ffc760,#ffb454,#ffa34a,#ff9441,#ff8739,#ff7b32,#ff712c,#ff6826,#ff6021,#ff581c,#ff5118,#ff4b14,#ff4510,#ff400d,#ff3b0a,#ff3607,#fc3105,#f22b02,#e92600,#e22200,#dc1e00,#d61b00,#d01800,#cb1500)"></i>
<i style="top:278px;left:16px;width:456px;height:2px;background:linear-gradient(90deg,#00ffbd,#00ffbc,#0fb,#00ffba,#00ffb9,#00ffb8,#00ffb7,#00ffb5,#00ffb4,#00ffb3,#00ffb2,#00ffb1,#00ffaf,#00ffae,#00ffad,#00ffab,#0fa,#00ffa8,#00ffa6,#00ffa5,#00ffa3,#00ffa1,#0fff9f,#24ff9d,#39ff9b,#4fff99,#66ff97,#7eff94,#98ff92,#b2ff8f,#ceff8d,#ecff8a,#fff481,#ffd970,#ffc362,#ffb056,#ff9f4b,#ff9142,#ff843a,#ff7933,#ff6f2d,#ff6527,#ff5d22,#ff561d,#ff4f19,#ff4915,#ff4311,#ff3e0e,#ff390b,#ff3408,#fb2f05,#f02a03,#e72501,#e02100,#d91d00,#d41a00,#ce1700,#c91400)"></i>
<i style="top:280px;left:16px;width:464px;height:2px;background:linear-gradient(90deg,#00ffc0,#00ffbf,#00ffbe,#00ffbd,#00ffbc,#0fb,#00ffba,#00ffb9,#00ffb8,#00ffb6,#00ffb5,#00ffb4,#00ffb3,#00ffb1,#00ffb0,#00ffaf,#00ffad,#00ffac,#0fa,#00ffa9,#00ffa7,#00ffa5,#11ffa3,#26ffa1,#3bff9f,#52ff9d,#69ff9b,#82ff99,#9cff96,#b7ff94,#d3ff91,#f1ff8e,#ffee82,#ffd471,#ffbe63,#ffac57,#ff9c4d,#ff8d44,#ff813c,#ff7634,#ff6c2e,#ff6328,#ff5b23,#ff541e,#ff4d1a,#ff4716,#ff4112,#ff3c0f,#ff370c,#ff3309,#f92e06,#ef2804,#e52301,#dd1f00,#d71b00,#d11800,#cc1500,#c71300,#c21000)"></i>
<i style="top:282px;left:16px;width:464px;height:2px;background:linear-gradient(90deg,#00ffc2,#00ffc2,#00ffc1,#00ffc0,#00ffbf,#00ffbe,#00ffbd,#00ffbc,#0fb,#00ffba,#00ffb9,#00ffb7,#00ffb6,#00ffb5,#00ffb4,#00ffb2,#00ffb1,#00ffaf,#00ffae,#00ffac,#00ffab,#00ffa9,#13ffa7,#28ffa5,#3effa3,#55ffa1,#6dff9f,#86ff9d,#a0ff9b,#bcff98,#d9ff96,#f7ff93,#ffe984,#ffd073,#ffba65,#ffa859,#ff984e,#ff8a45,#ff7e3d,#ff7336,#ff692f,#ff6129,#ff5924,#ff521f,#ff4b1b,#ff4517,#ff4013,#ff3a10,#ff360d,#ff310a,#f72c07,#ed2604,#e42202,#db1e00,#d51a00,#cf1700,#ca1400,#c51200,#c00f00)"></i>
<i style="top:284px;left:16px;width:464px;height:2px;background:linear-gradient(90deg,#00ffc6,#00ffc5,#00ffc4,#00ffc3,#00ffc2,#00ffc1,#00ffc0,#00ffbf,#00ffbe,#00ffbd,#00ffbc,#0fb,#00ffba,#00ffb9,#00ffb7,#00ffb6,#00ffb5,#00ffb3,#00ffb2,#00ffb0,#00ffaf,#01ffad,#15ffab,#2affaa,#40ffa8,#58ffa6,#70ffa4,#89ffa2,#a4ff9f,#c0ff9d,#deff9a,#fdff98,#ffe385,#ffcb74,#ffb666,#ffa45a,#ff954f,#ff8746,#ff7b3e,#ff7037,#ff6730,#ff5e2b,#ff5725,#ff5021,#ff491c,#ff4318,#ff3e14,#ff3911,#ff340e,#ff300b,#f52a08,#eb2505,#e22003,#d91c01,#d21900,#cd1600,#c71300,#c31100,#be0e00)"></i>
<i style="top:286px;left:16px;width:472px;height:2px;background:linear-gradient(90deg,#00ffc9,#00ffc8,#00ffc7,#00ffc6,#00ffc5,#00ffc4,#00ffc4,#00ffc3,#00ffc2,#00ffc1,#00ffc0,#00ffbf,#00ffbd,#00ffbc,#0fb,#00ffba,#00ffb9,#00ffb7,#00ffb6,#00ffb4,#00ffb3,#02ffb1,#17ffb0,#2dffae,#43ffac,#5bffaa,#73ffa8,#8dffa6,#a9ffa4,#c5ffa2,#e3ff9f,#fffb9a,#ffde86,#ffc676,#ffb267,#ffa05b,#ff9151,#ff8448,#ff783f,#ff6e38,#ff6432,#ff5c2c,#ff5426,#ff4d22,#ff471d,#ff4119,#ff3c15,#ff3712,#ff320f,#fe2e0c,#f32809,#ea2306,#e01f04,#d81b02,#d01800,#ca1500,#c51200,#c01000,#bc0d00,#b70c00)"></i>
<i style="top:288px;left:16px;width:472px;height:2px;background:linear-gradient(90deg,#0fc,#00ffcb,#00ffca,#00ffc9,#00ffc9,#00ffc8,#00ffc7,#00ffc6,#00ffc5,#00ffc4,#00ffc3,#00ffc2,#00ffc1,#00ffc0,#00ffbf,#00ffbe,#00ffbd,#0fb,#00ffba,#00ffb9,#00ffb7,#04ffb6,#19ffb4,#2fffb2,#46ffb1,#5effaf,#77ffad,#91ffab,#adffa9,#caffa7,#e9ffa4,#fff59c,#ffd988,#ffc277,#ffae69,#ff9d5d,#ff8e52,#ff8149,#ff7541,#ff6b39,#ff6233,#ff5a2d,#ff5228,#ff4b23,#ff451e,#ff3f1a,#ff3a16,#ff3513,#ff3110,#fc2c0d,#f22709,#e82207,#df1e04,#d61a02,#ce1600,#c81300,#c31100,#be0f00,#ba0d00,#b50b00)"></i>
<i style="top:290px;left:16px;width:472px;height:2px;background:linear-gradient(90deg,#00ffcf,#00ffce,#00ffce,#00ffcd,#0fc,#00ffcb,#00ffca,#00ffca,#00ffc9,#00ffc8,#00ffc7,#00ffc6,#00ffc5,#00ffc4,#00ffc3,#00ffc2,#00ffc1,#00ffbf,#00ffbe,#00ffbd,#0fb,#06ffba,#1bffb8,#31ffb7,#49ffb5,#61ffb4,#7bffb2,#95ffb0,#b2ffae,#cfffac,#efffaa,#ffef9d,#ffd489,#ffbd78,#ffaa6a,#ff995e,#ff8b53,#ff7e4a,#ff7342,#ff693a,#ff6034,#ff572e,#ff5029,#ff4924,#ff431f,#ff3e1b,#ff3917,#ff3414,#ff2f11,#fa2a0d,#f0250a,#e62007,#dd1c05,#d51803,#cd1501,#c61200,#c11000,#bc0e00,#b80c00,#b30a00)"></i>
<i style="top:292px;left:16px;width:480px;height:2px;background:linear-gradient(90deg,#00ffd2,#00ffd2,#00ffd1,#00ffd0,#00ffcf,#00ffcf,#00ffce,#00ffcd,#0fc,#0fc,#00ffcb,#00ffca,#00ffc9,#00ffc8,#00ffc7,#00ffc6,#00ffc5,#00ffc4,#00ffc2,#00ffc1,#00ffc0,#08ffbe,#1dffbd,#34ffbc,#4cffba,#64ffb8,#7effb7,#9affb5,#b6ffb3,#d5ffb1,#f5ffaf,#ffea9e,#ffcf8a,#ffb97a,#ffa66b,#ff955f,#ff8755,#ff7b4b,#ff7043,#ff663c,#ff5d35,#ff552f,#ff4e2a,#ff4725,#ff4120,#ff3c1c,#ff3718,#ff3215,#ff2e12,#f8290e,#ee230b,#e41f08,#db1b06,#d31704,#cb1402,#c41100,#bf0f00,#ba0d00,#b60b00,#b10900,#ae0700)"></i>
<i style="top:294px;left:16px;width:480px;height:2px;background:linear-gradient(90deg,#00ffd6,#00ffd5,#00ffd4,#00ffd4,#00ffd3,#00ffd2,#00ffd2,#00ffd1,#00ffd0,#00ffcf,#00ffce,#00ffce,#00ffcd,#0fc,#00ffcb,#00ffca,#00ffc9,#00ffc8,#00ffc7,#00ffc6,#00ffc4,#0affc3,#20ffc2,#37ffc0,#4fffbf,#68ffbd,#82ffbc,#9effba,#bbffb8,#daffb6,#fbffb5,#ffe49f,#ffca8c,#ffb47b,#ffa26d,#ff9261,#ff8456,#ff784c,#ff6d44,#ff633d,#ff5b36,#ff5330,#ff4c2b,#ff4526,#ff3f21,#ff3a1d,#ff3519,#ff3016,#ff2c13,#f6270f,#ec220c,#e31d09,#da1906,#d21604,#ca1302,#c21001,#bd0e00,#b80c00,#b40a00,#b00800,#ac0700)"></i>
<i style="top:296px;left:16px;width:480px;height:2px;background:linear-gradient(90deg,#00ffd9,#00ffd8,#00ffd8,#00ffd7,#00ffd7,#00ffd6,#00ffd5,#00ffd5,#00ffd4,#00ffd3,#00ffd2,#00ffd2,#00ffd1,#00ffd0,#00ffcf,#00ffce,#00ffcd,#0fc,#00ffcb,#00ffca,#00ffc9,#0cffc8,#22ffc7,#39ffc5,#52ffc4,#6bffc3,#86ffc1,#a2ffbf,#c0ffbe,#e0ffbc,#fffdb9,#ffdea1,#ffc58d,#ffb07c,#ff9e6e,#ff8e62,#ff8157,#ff754e,#ff6a45,#ff613e,#ff5837,#ff5131,#ff4a2c,#ff4327,#ff3e22,#ff381e,#ff331a,#ff2f17,#ff2b13,#f52510,#eb200c,#e11c0a,#d81807,#d01505,#c81203,#c10f01,#ba0d00,#b60b00,#b20900,#ae0700,#aa0600)"></i>
<i style="top:298px;left:16px;width:488px;height:2px;background:linear-gradient(90deg,#00ffdc,#00ffdc,#00ffdb,#00ffdb,#00ffda,#00ffda,#00ffd9,#00ffd8,#00ffd8,#00ffd7,#00ffd6,#00ffd6,#00ffd5,#00ffd4,#00ffd3,#00ffd2,#00ffd2,#00ffd1,#00ffd0,#00ffcf,#00ffce,#0effcd,#24ffcc,#3cffca,#55ffc9,#6fffc8,#8affc6,#a7ffc5,#c5ffc3,#e6ffc2,#fff7ba,#ffd9a2,#ffc08e,#ffac7d,#ff9a6f,#ff8b63,#ff7e58,#ff724f,#ff6847,#ff5e3f,#ff5638,#ff4e32,#ff482d,#ff4128,#ff3c23,#ff371f,#ff321b,#ff2d18,#fd2914,#f32310,#e91f0d,#df1b0a,#d71708,#cf1405,#c71104,#c00e02,#b90c00,#b40a00,#b00800,#ac0700,#a80500,#a40400)"></i>
<i style="top:300px;left:24px;width:480px;height:2px;background:linear-gradient(90deg,#00ffdf,#00ffdf,#00ffde,#00ffde,#0fd,#0fd,#00ffdc,#00ffdc,#00ffdb,#00ffda,#00ffda,#00ffd9,#00ffd8,#00ffd8,#00ffd7,#00ffd6,#00ffd5,#00ffd4,#00ffd4,#00ffd3,#10ffd2,#27ffd1,#3fffd0,#58ffce,#72ffcd,#8effcc,#acffcb,#cbffc9,#ecffc8,#fff0bb,#ffd4a3,#ffbc8f,#ffa87f,#ff9671,#ff8764,#ff7a5a,#ff6f50,#ff6548,#ff5c40,#ff543a,#ff4c33,#ff462e,#ff3f29,#ff3a24,#ff3520,#ff301c,#ff2c19,#fc2715,#f12211,#e71d0e,#de190b,#d51608,#cd1306,#c51004,#be0d02,#b70b01,#b20900,#ae0700,#aa0600,#a60400,#a20300)"></i>
<i style="top:302px;left:24px;width:480px;height:2px;background:linear-gradient(90deg,#00ffe3,#00ffe2,#00ffe2,#00ffe2,#00ffe1,#00ffe1,#00ffe0,#00ffe0,#00ffdf,#00ffdf,#00ffde,#0fd,#0fd,#00ffdc,#00ffdb,#00ffdb,#00ffda,#00ffd9,#00ffd8,#00ffd8,#12ffd7,#29ffd6,#42ffd5,#5bffd4,#76ffd3,#93ffd2,#b1ffd0,#d0ffcf,#f2ffce,#ffeabc,#ffcea4,#ffb791,#ffa380,#ff9372,#ff8465,#ff775b,#ff6c51,#ff6249,#ff5941,#ff513b,#ff4a35,#ff442f,#ff3e2a,#ff3825,#ff3321,#ff2e1d,#ff2a19,#fa2516,#ef2012,#e51c0e,#dc180b,#d41409,#cc1107,#c40f05,#bd0c03,#b60a01,#b00800,#ac0700,#a80500,#a40400,#a10300)"></i>
<i style="top:304px;left:24px;width:480px;height:2px;background:linear-gradient(90deg,#00ffe7,#00ffe6,#00ffe6,#00ffe5,#00ffe5,#00ffe5,#00ffe4,#00ffe4,#00ffe3,#00ffe3,#00ffe2,#00ffe2,#00ffe1,#00ffe1,#00ffe0,#00ffdf,#00ffdf,#00ffde,#0fd,#0fd,#14ffdc,#2cffdb,#45ffda,#5fffd9,#7affd9,#97ffd8,#b6ffd7,#d6ffd5,#f8ffd4,#ffe4bd,#ffc9a5,#ffb292,#ff9f81,#ff8f73,#ff8167,#ff745c,#ff6952,#ff604a,#ff5742,#ff4f3c,#ff4836,#ff4130,#ff3c2b,#ff3626,#ff3122,#ff2d1e,#ff281a,#f82416,#ed1f12,#e41a0f,#db170c,#d2130a,#ca1007,#c30e05,#bb0b03,#b50902,#ae0700,#aa0600,#a60400,#a20300,#9f0200)"></i>
<i style="top:306px;left:24px;width:488px;height:2px;background:linear-gradient(90deg,#00ffea,#00ffea,#00ffea,#00ffe9,#00ffe9,#00ffe9,#00ffe8,#00ffe8,#00ffe8,#00ffe7,#00ffe7,#00ffe6,#00ffe6,#00ffe5,#00ffe5,#00ffe4,#00ffe4,#00ffe3,#00ffe3,#00ffe2,#16ffe1,#2effe1,#48ffe0,#62ffdf,#7effde,#9cffde,#bfd,#dcffdc,#ffffdb,#ffdfbe,#ffc4a7,#ffae93,#ff9b82,#ff8b74,#ff7d68,#ff715d,#ff6654,#ff5d4b,#ff5444,#ff4d3d,#ff4637,#ff3f31,#ff3a2c,#ff3427,#ff3023,#ff2b1f,#ff271b,#f62217,#ec1d13,#e21910,#d9150d,#d1120a,#c90f08,#c10d06,#ba0a04,#b30802,#ad0701,#a80500,#a40400,#a00200,#9d0100,#9a0000)"></i>
<i style="top:308px;left:24px;width:488px;height:2px;background:linear-gradient(90deg,#0fe,#0fe,#0fe,#00ffed,#00ffed,#00ffed,#00ffec,#00ffec,#00ffec,#00ffec,#00ffeb,#00ffeb,#00ffea,#00ffea,#00ffea,#00ffe9,#00ffe9,#00ffe8,#00ffe8,#02ffe7,#19ffe7,#31ffe6,#4bffe6,#66ffe5,#82ffe5,#a0ffe4,#c0ffe3,#e2ffe2,#fff8dc,#ffd9bf,#ffbfa8,#ffa994,#ff9784,#ff8875,#ff7a69,#ff6e5e,#ff6455,#ff5a4c,#ff5245,#ff4a3e,#ff4438,#ff3d32,#ff382d,#ff3328,#ff2e24,#ff2920,#ff251c,#f42018,#ea1c14,#e01810,#d7140d,#cf110b,#c70e08,#c00c06,#b90a04,#b20803,#ac0601,#a60400,#a20300,#9e0200,#9b0100,#900)"></i>
<i style="top:310px;left:24px;width:488px;height:2px;background:linear-gradient(90deg,#00fff2,#00fff2,#00fff2,#00fff1,#00fff1,#00fff1,#00fff1,#00fff1,#00fff0,#00fff0,#00fff0,#00fff0,#00ffef,#00ffef,#00ffef,#0fe,#0fe,#0fe,#00ffed,#04ffed,#1bffed,#34ffec,#4effec,#6affeb,#87ffeb,#a5ffea,#c6ffea,#e8ffe9,#fff2dd,#ffd3c0,#ffbaa9,#ffa595,#ff9385,#ff8477,#ff776a,#ff6b5f,#ff6156,#ff584d,#ff5046,#ff483f,#ff4239,#ff3b33,#ff362e,#ff3129,#ff2c25,#ff2821,#fd241d,#f21e18,#e81a14,#df1611,#d6130e,#cd100b,#c60d09,#be0b07,#b70905,#b10703,#ab0502,#a50401,#a00200,#9d0100,#900,#900)"></i>
<i style="top:312px;left:24px;width:496px;height:2px;background:linear-gradient(90deg,#00fff6,#00fff6,#00fff6,#00fff6,#00fff5,#00fff5,#00fff5,#00fff5,#00fff5,#00fff5,#00fff5,#00fff4,#00fff4,#00fff4,#00fff4,#00fff4,#00fff3,#00fff3,#00fff3,#06fff3,#1efff2,#37fff2,#51fff2,#6dfff2,#8bfff1,#aafff1,#ccfff1,#effff0,#ffebdd,#ffcec1,#ffb5aa,#ffa196,#ff8f86,#ff8178,#ff746b,#ff6861,#ff5e57,#ff554e,#ff4d47,#ff4640,#ff3f3a,#ff3934,#ff342f,#ff2f2a,#ff2a26,#ff2622,#fb221e,#f01d19,#e61915,#dd1512,#d4120e,#cc0f0c,#c40c09,#bd0a07,#b60805,#b00604,#a90402,#a40301,#9e0200,#9b0100,#900,#900,#900)"></i>
<i style="top:314px;left:24px;width:496px;height:2px;background:linear-gradient(90deg,#00fffa,#00fffa,#00fffa,#00fffa,#00fffa,#00fffa,#00fffa,#00fffa,#00fff9,#00fff9,#00fff9,#00fff9,#00fff9,#00fff9,#00fff9,#00fff9,#00fff9,#00fff9,#00fff9,#08fff9,#20fff8,#3afff8,#55fff8,#71fff8,#90fff8,#b0fff8,#d2fff8,#f6fff8,#ffe5de,#ffc8c2,#ffb0ab,#ff9c97,#ff8c87,#ff7d79,#ff706c,#ff6562,#ff5b58,#ff5350,#ff4b48,#ff4441,#ff3d3b,#ff3835,#ff3230,#ff2d2b,#ff2927,#ff2523,#f9201e,#ef1b1a,#e51716,#db1412,#d3100f,#ca0e0c,#c30b0a,#bc0908,#b50706,#ae0504,#a80403,#a20202,#9d0100,#900,#900,#900,#900)"></i>
<i style="top:316px;left:24px;width:496px;height:2px;background:linear-gradient(90deg,#00fffe,#00fffe,#00fffe,#00fffe,#00fffe,#00fffe,#00fffe,#00fffe,#00fffe,#00fffe,#00fffe,#00fffe,#00fffe,#00fffe,#00fffe,#00fffe,#0ff,#0ff,#0ff,#0affff,#23ffff,#3dffff,#58ffff,#76ffff,#94ffff,#b5ffff,#d8ffff,#fcffff,#ffdfdf,#ffc3c3,#ffacac,#ff9899,#f88,#ff7a7a,#ff6d6e,#ff6263,#ff5959,#ff5051,#ff4949,#ff4242,#ff3b3c,#ff3636,#ff3031,#ff2c2c,#ff2728,#ff2324,#f71e1f,#ed1a1a,#e31616,#da1213,#d10f10,#c90c0d,#c10a0a,#ba0808,#b30606,#ad0405,#a70303,#a10202,#9c0001,#900,#900,#900,#900)"></i>
<i style="top:318px;left:24px;width:504px;height:2px;background:linear-gradient(90deg,#00fcff,#00fcff,#00fcff,#00fcff,#00fbff,#00fbff,#00fbff,#00fbff,#00fbff,#00fbff,#00fbff,#00fbff,#00faff,#00faff,#00faff,#00faff,#00faff,#00faff,#00f9ff,#0cf9ff,#24f9ff,#3ef9ff,#5af9ff,#77f8ff,#95f8ff,#b5f8ff,#d8f8ff,#fcf7ff,#ffd9e0,#ffbdc4,#ffa7ad,#ff949a,#ff8489,#ff767b,#ff6a6f,#ff6064,#ff565a,#ff4e52,#ff464a,#ff3f43,#ff393d,#ff3437,#ff2f32,#ff2a2d,#ff2529,#ff2124,#f51d1f,#eb181b,#e11417,#d81113,#cf0e10,#c70b0d,#c0090b,#b90709,#b20507,#ac0405,#a60204,#a00102,#9b0001,#900,#900,#900,#900,#900)"></i>
<i style="top:320px;left:24px;width:504px;height:2px;background:linear-gradient(90deg,#00f8ff,#00f8ff,#00f7ff,#00f7ff,#00f7ff,#00f7ff,#00f7ff,#00f7ff,#00f6ff,#00f6ff,#00f6ff,#00f6ff,#00f5ff,#00f5ff,#00f5ff,#00f5ff,#00f4ff,#00f4ff,#00f4ff,#0ef3ff,#26f3ff,#40f3ff,#5bf2ff,#78f2ff,#96f1ff,#b6f1ff,#d7f0ff,#fbf0ff,#ffd3e1,#ffb8c5,#ffa2ae,#ff909b,#ff808a,#ff737c,#ff6770,#ff5d65,#ff535b,#ff4b53,#ff444b,#ff3d44,#ff373e,#ff3238,#ff2d33,#ff282e,#ff2429,#ff2025,#f31b20,#e9171b,#df1317,#d61014,#ce0d11,#c60a0e,#be080b,#b70609,#b10407,#ab0306,#a50204,#9f0003,#9c0002,#9a0001,#900,#900,#900,#900)"></i>
<i style="top:322px;left:24px;width:504px;height:2px;background:linear-gradient(90deg,#00f4ff,#00f4ff,#00f3ff,#00f3ff,#00f3ff,#00f3ff,#00f2ff,#00f2ff,#00f2ff,#00f1ff,#00f1ff,#00f1ff,#00f0ff,#00f0ff,#00f0ff,#00efff,#00efff,#0ef,#0ef,#10edff,#28edff,#41ecff,#5cecff,#78ebff,#96ebff,#b6eaff,#d7e9ff,#fbe9ff,#ffcde1,#ffb3c6,#ff9eaf,#ff8c9c,#ff7d8b,#ff707d,#ff6471,#ff5a66,#ff515c,#ff4954,#ff424c,#ff3b45,#ff353f,#ff3039,#ff2b34,#ff262f,#ff222a,#fd1e26,#f21921,#e7151c,#de1218,#d50f14,#cc0c11,#c4090e,#bd070c,#b6050a,#b00408,#a90206,#a30105,#9f0003,#9d0002,#9b0001,#900,#900,#900,#900)"></i>
<i style="top:324px;left:24px;width:512px;height:2px;background:linear-gradient(90deg,#00f0ff,#00efff,#00efff,#00efff,#00efff,#0ef,#0ef,#00edff,#00edff,#00edff,#00ecff,#00ecff,#00ebff,#00ebff,#00eaff,#00eaff,#00e9ff,#00e9ff,#00e8ff,#11e8ff,#29e7ff,#43e6ff,#5de6ff,#79e5ff,#97e4ff,#b6e3ff,#d7e2ff,#fae2ff,#ffc7e2,#ffaec7,#ff99b0,#ff889d,#ff798c,#ff6c7e,#ff6172,#ff5767,#ff4e5d,#ff4655,#ff3f4d,#ff3946,#ff3340,#ff2e3a,#ff2935,#ff2530,#ff212b,#fb1c26,#f01821,#e6141c,#dc1018,#d30d15,#cb0b12,#c3080f,#bc060c,#b5040a,#ae0308,#a80106,#a20005,#9f0004,#9d0002,#9b0001,#9a0000,#900,#900,#900,#900)"></i>
<i style="top:326px;left:24px;width:512px;height:2px;background:linear-gradient(90deg,#00ecff,#00ebff,#00ebff,#00ebff,#00eaff,#00eaff,#00e9ff,#00e9ff,#00e9ff,#00e8ff,#00e8ff,#00e7ff,#00e7ff,#00e6ff,#00e5ff,#00e5ff,#00e4ff,#00e3ff,#00e3ff,#13e2ff,#2be1ff,#44e0ff,#5fe0ff,#7adfff,#98deff,#b7ddff,#d7dcff,#fadbff,#ffc1e3,#ffa9c8,#ff95b1,#ff849e,#ff768e,#ff697f,#ff5e73,#ff5468,#ff4c5e,#ff4456,#ff3d4e,#ff3747,#ff3141,#ff2c3b,#ff2736,#ff2331,#ff1f2c,#f91b27,#ee1622,#e4121d,#da0f19,#d20c15,#c90a12,#c2070f,#ba050d,#b3040b,#ad0209,#a70107,#a20005,#a00004,#9e0003,#9c0002,#9a0001,#900,#900,#900,#900)"></i>
<i style="top:328px;left:24px;width:512px;height:2px;background:linear-gradient(90deg,#00e8ff,#00e8ff,#00e7ff,#00e7ff,#00e6ff,#00e6ff,#00e5ff,#00e5ff,#00e4ff,#00e4ff,#00e3ff,#00e2ff,#00e2ff,#00e1ff,#00e0ff,#00e0ff,#00dfff,#00deff,#0df,#15ddff,#2ddcff,#46dbff,#60daff,#7bd9ff,#98d8ff,#b7d6ff,#d7d5ff,#fad4ff,#ffbce3,#ffa4c8,#ff91b2,#ff809f,#ff728f,#ff6680,#ff5b74,#ff5269,#ff4960,#ff4257,#ff3b4f,#ff3548,#ff2f42,#ff2a3c,#ff2636,#ff2132,#ff1d2d,#f71927,#ec1522,#e2111d,#d90e19,#d00b16,#c80913,#c00610,#b9050d,#b2030b,#ac0109,#a60007,#a30006,#a10005,#9f0003,#9d0002,#9b0001,#900,#900,#900,#900)"></i>
<i style="top:330px;left:24px;width:520px;height:2px;background:linear-gradient(90deg,#00e4ff,#00e4ff,#00e3ff,#00e3ff,#00e2ff,#00e2ff,#00e1ff,#00e0ff,#00e0ff,#00dfff,#00deff,#00deff,#0df,#00dcff,#00dcff,#00dbff,#00daff,#00d9ff,#00d8ff,#17d7ff,#2ed6ff,#47d5ff,#61d4ff,#7cd3ff,#99d1ff,#b7d0ff,#d7cfff,#f9cdff,#ffb6e4,#ff9fc9,#ff8cb3,#ff7ca0,#ff6f90,#ff6381,#ff5875,#ff4f6a,#ff4761,#ff3f58,#ff3950,#ff3349,#ff2d43,#ff283d,#ff2437,#ff2032,#ff1c2e,#f51728,#ea1323,#e0101e,#d70d1a,#ce0a16,#c60813,#bf0510,#b8040e,#b1020b,#aa0109,#a60008,#a40006,#a20005,#a00004,#9e0003,#9c0001,#9a0000,#900,#900,#900,#900)"></i>
<i style="top:332px;left:24px;width:520px;height:2px;background:linear-gradient(90deg,#00e0ff,#00e0ff,#00dfff,#00dfff,#00deff,#0df,#0df,#00dcff,#00dbff,#00dbff,#00daff,#00d9ff,#00d8ff,#00d8ff,#00d7ff,#00d6ff,#00d5ff,#00d4ff,#02d3ff,#18d2ff,#30d1ff,#48cfff,#62ceff,#7dcdff,#99cbff,#b7caff,#d7c8ff,#f9c7ff,#ffb1e5,#ff9bca,#ff88b4,#ff79a1,#ff6b91,#ff6082,#ff5576,#ff4c6b,#ff4462,#ff3d59,#ff3751,#ff314a,#ff2b44,#ff273e,#ff2238,#ff1e33,#fe1a2f,#f31628,#e81223,#df0e1e,#d50b1a,#cd0917,#c50713,#bd0511,#b6030e,#af010c,#a9000a,#a70008,#a50007,#a20005,#a00004,#9e0003,#9c0002,#9a0001,#900,#900,#900,#900)"></i>
<i style="top:334px;left:32px;width:512px;height:2px;background:linear-gradient(90deg,#00dcff,#00dbff,#00dbff,#00daff,#00d9ff,#00d9ff,#00d8ff,#00d7ff,#00d6ff,#00d6ff,#00d5ff,#00d4ff,#00d3ff,#00d2ff,#00d1ff,#00d0ff,#00cfff,#04ceff,#1acdff,#31cbff,#4acaff,#63c9ff,#7ec7ff,#9ac6ff,#b8c4ff,#d7c2ff,#f8c1ff,#fface6,#ff96cb,#ff84b5,#ff75a2,#ff6892,#ff5c84,#ff5277,#ff4a6c,#ff4263,#ff3b5a,#ff3452,#ff2f4b,#ff2a44,#ff253f,#ff2039,#ff1c34,#fc182f,#f11429,#e71024,#dd0d1f,#d40a1b,#cb0817,#c30614,#bc0411,#b5020f,#ae000c,#aa000a,#a80009,#a50007,#a30006,#a10005,#9f0003,#9d0002,#9b0001,#900,#900,#900,#900)"></i>
<i style="top:336px;left:32px;width:512px;height:2px;background:linear-gradient(90deg,#00d8ff,#00d8ff,#00d7ff,#00d6ff,#00d5ff,#00d5ff,#00d4ff,#00d3ff,#00d2ff,#00d1ff,#00d0ff,#00cfff,#00ceff,#00cdff,#0cf,#00cbff,#00caff,#06c9ff,#1cc7ff,#33c6ff,#4bc5ff,#64c3ff,#7fc2ff,#9bc0ff,#b8beff,#d7bcff,#f8baff,#ffa6e6,#ff92cc,#ff80b6,#ff71a3,#ff6493,#ff5985,#ff5078,#ff476d,#ff3f64,#ff395b,#ff3253,#ff2d4c,#ff2845,#ff233f,#ff1f3a,#ff1b35,#fa1730,#ef1229,#e50f24,#db0c1f,#d2091b,#ca0718,#c20514,#ba0311,#b3010f,#ae000d,#ab000b,#a80009,#a60008,#a40006,#a20005,#a00004,#9e0003,#9c0002,#9a0001,#900,#900,#900)"></i>
<i style="top:338px;left:32px;width:520px;height:2px;background:linear-gradient(90deg,#00d5ff,#00d4ff,#00d3ff,#00d2ff,#00d2ff,#00d1ff,#00d0ff,#00cfff,#00ceff,#00cdff,#0cf,#00cbff,#00caff,#00c9ff,#00c8ff,#00c6ff,#00c5ff,#08c4ff,#1dc2ff,#34c1ff,#4cbfff,#65beff,#7fbcff,#9bbaff,#b8b8ff,#d7b6ff,#f7b4ff,#ffa1e7,#ff8dcd,#ff7cb6,#ff6ea4,#ff6194,#ff5685,#ff4d79,#ff446e,#ff3d65,#ff365c,#ff3054,#ff2b4d,#ff2646,#ff2140,#ff1d3b,#ff1936,#f81530,#ed112a,#e30e24,#d90a20,#d0081c,#c80618,#c00415,#b90212,#b2000f,#ae000d,#ac000b,#a9000a,#a70008,#a40007,#a20005,#a00004,#9e0003,#9d0002,#9b0001,#900,#900,#900,#900)"></i>
<i style="top:340px;left:32px;width:520px;height:2px;background:linear-gradient(90deg,#00d1ff,#00d0ff,#00cfff,#00cfff,#00ceff,#00cdff,#0cf,#00cbff,#00caff,#00c9ff,#00c8ff,#00c7ff,#00c5ff,#00c4ff,#00c3ff,#00c2ff,#00c0ff,#09bfff,#1fbdff,#36bcff,#4dbaff,#66b8ff,#80b7ff,#9cb5ff,#b9b3ff,#d7b1ff,#f7aeff,#ff9ce8,#ff89cd,#ff78b7,#ff6aa5,#ff5e95,#ff5386,#ff4a7a,#ff426f,#ff3b65,#ff345d,#ff2e55,#ff294e,#ff2447,#ff1f41,#ff1b3c,#ff1837,#f61330,#eb0f2a,#e10c25,#d80920,#cf071c,#c70518,#bf0315,#b80112,#b20010,#af000e,#ac000c,#aa000a,#a70009,#a50007,#a30006,#a10005,#9f0003,#9d0002,#9b0001,#9a0000,#900,#900,#900)"></i>
<i style="top:342px;left:32px;width:520px;height:2px;background:linear-gradient(90deg,#00cdff,#00cdff,#0cf,#00cbff,#00caff,#00c9ff,#00c8ff,#00c7ff,#00c6ff,#00c5ff,#00c3ff,#00c2ff,#00c1ff,#00c0ff,#00beff,#00bdff,#00bcff,#0bbaff,#21b8ff,#37b7ff,#4fb5ff,#67b3ff,#81b1ff,#9cafff,#b9adff,#d7abff,#f7a9ff,#ff97e8,#ff84ce,#ff74b8,#ff66a6,#ff5b95,#ff5087,#ff477b,#ff3f70,#ff3866,#ff325e,#ff2c56,#ff274f,#ff2248,#ff1e42,#ff1a3d,#ff1638,#f41231,#e90e2b,#df0b25,#d60821,#cd061c,#c50419,#bd0216,#b60013,#b30010,#b0000e,#ad000c,#ab000b,#a80009,#a60008,#a40006,#a20005,#a00004,#9e0003,#9c0002,#9a0001,#900,#900,#900)"></i>
<i style="top:344px;left:32px;width:528px;height:2px;background:linear-gradient(90deg,#00caff,#00c9ff,#00c8ff,#00c7ff,#00c6ff,#00c5ff,#00c4ff,#00c3ff,#00c2ff,#00c1ff,#00bfff,#00beff,#00bdff,#0bf,#00baff,#00b9ff,#00b7ff,#0db5ff,#22b4ff,#38b2ff,#50b0ff,#68aeff,#82acff,#9daaff,#b9a8ff,#d7a5ff,#f6a3ff,#ff92e9,#ff80cf,#ff70b9,#ff63a6,#ff5796,#ff4d88,#ff457c,#ff3d71,#ff3667,#ff305f,#ff2a57,#ff2550,#ff2049,#ff1c43,#ff183e,#fe1438,#f21031,#e80d2b,#de0a26,#d40721,#cc051d,#c40319,#bc0116,#b60013,#b30011,#b1000f,#ae000d,#ab000b,#a9000a,#a70008,#a40007,#a20005,#a00004,#9f0003,#9d0002,#9b0001,#900,#900,#900,#900)"></i>
<i style="top:346px;left:32px;width:528px;height:2px;background:linear-gradient(90deg,#00c6ff,#00c5ff,#00c4ff,#00c3ff,#00c2ff,#00c1ff,#00c0ff,#00bfff,#00beff,#00bdff,#0bf,#00baff,#00b9ff,#00b7ff,#00b6ff,#00b4ff,#00b2ff,#0eb1ff,#24afff,#3aadff,#51abff,#69a9ff,#83a7ff,#9da5ff,#b9a2ff,#d7a0ff,#f69dff,#ff8ee9,#ff7cd0,#ff6cba,#ff60a7,#ff5497,#ff4b89,#ff427d,#ff3a72,#ff3468,#ff2d60,#ff2858,#ff2351,#ff1e4a,#ff1a44,#ff163e,#fc1339,#f00f32,#e60b2b,#dc0826,#d30621,#ca041d,#c2021a,#bb0016,#b70014,#b40012,#b1000f,#af000d,#ac000c,#aa000a,#a70009,#a50007,#a30006,#a10005,#9f0003,#9d0002,#9c0001,#9a0001,#900,#900,#900)"></i>
<i style="top:348px;left:32px;width:528px;height:2px;background:linear-gradient(90deg,#00c3ff,#00c2ff,#00c1ff,#00c0ff,#00bfff,#00bdff,#00bcff,#0bf,#00baff,#00b9ff,#00b7ff,#00b6ff,#00b4ff,#00b3ff,#00b1ff,#00b0ff,#00aeff,#10acff,#25aaff,#3ba8ff,#52a6ff,#6aa4ff,#83a2ff,#9ea0ff,#ba9dff,#d79bff,#f598ff,#ff89ea,#ff77d0,#ff69bb,#ff5ca8,#ff5198,#ff488a,#ff3f7e,#ff3873,#ff3169,#ff2b61,#ff2659,#ff2151,#ff1d4b,#ff1845,#ff153f,#fa1139,#ee0d32,#e40a2c,#da0727,#d10522,#c9031e,#c1011a,#bb0017,#b80014,#b50012,#b20010,#af000e,#ad000c,#aa000b,#a80009,#a60008,#a40006,#a20005,#a00004,#9e0003,#9c0002,#9b0001,#900,#900,#900)"></i>
<i style="top:350px;left:32px;width:536px;height:2px;background:linear-gradient(90deg,#00bfff,#00beff,#00bdff,#00bcff,#0bf,#00baff,#00b9ff,#00b7ff,#00b6ff,#00b5ff,#00b3ff,#00b2ff,#00b0ff,#00afff,#00adff,#00abff,#0af,#12a8ff,#26a6ff,#3ca4ff,#53a2ff,#6b9fff,#849dff,#9e9bff,#ba98ff,#d795ff,#f593ff,#ff84eb,#ff73d1,#ff65bc,#ff59a9,#ff4e99,#ff458b,#ff3d7f,#ff3574,#ff2f6a,#ff2961,#ff245a,#ff1f52,#ff1b4c,#ff1746,#ff1340,#f80f39,#ec0c32,#e2082c,#d80627,#cf0422,#c7021e,#c0001a,#bc0018,#b90015,#b60013,#b30011,#b0000f,#ae000d,#ab000b,#a90009,#a70008,#a40007,#a20005,#a00004,#9f0003,#9d0002,#9b0001,#9a0000,#900,#900,#900)"></i>
<i style="top:352px;left:32px;width:536px;height:2px;background:linear-gradient(90deg,#00bcff,#0bf,#00baff,#00b9ff,#00b7ff,#00b6ff,#00b5ff,#00b4ff,#00b2ff,#00b1ff,#00afff,#00aeff,#00acff,#00abff,#00a9ff,#00a7ff,#00a5ff,#13a3ff,#28a1ff,#3e9fff,#549dff,#6c9bff,#8598ff,#9f96ff,#ba93ff,#d790ff,#f58dff,#ff80eb,#ff6fd2,#ff61bc,#f5a,#ff4b9a,#ff428c,#ff3a80,#ff3375,#ff2d6b,#ff2762,#ff225a,#ff1d53,#ff194d,#ff1547,#ff1141,#f60e3a,#eb0a33,#e0072d,#d70527,#ce0222,#c5011e,#c0001b,#bd0018,#ba0016,#b70013,#b40011,#b1000f,#ae000d,#ac000c,#a9000a,#a70008,#a50007,#a30006,#a10005,#9f0004,#9e0003,#9c0002,#9a0001,#900,#900,#900)"></i>
<i style="top:354px;left:32px;width:536px;height:2px;background:linear-gradient(90deg,#00b9ff,#00b8ff,#00b6ff,#00b5ff,#00b4ff,#00b3ff,#00b1ff,#00b0ff,#00aeff,#00adff,#00abff,#0af,#00a8ff,#00a7ff,#00a5ff,#00a3ff,#01a1ff,#159fff,#299dff,#3f9bff,#5598ff,#6d96ff,#8594ff,#9f91ff,#ba8eff,#d78bff,#f488ff,#ff7bec,#ff6bd3,#ff5ebd,#ff52ab,#ff489b,#ff3f8d,#ff3881,#ff3176,#ff2a6c,#ff2563,#ff205b,#ff1b54,#ff174d,#ff1347,#ff1042,#f40c3a,#e90933,#de062d,#d50328,#cc0123,#c5001f,#c1001c,#be0019,#ba0016,#b70014,#b40012,#b20010,#af000e,#ad000c,#aa000a,#a80009,#a60008,#a40006,#a20005,#a00004,#9e0003,#9c0002,#9b0001,#900,#900,#900)"></i>
<i style="top:356px;left:32px;width:536px;height:2px;background:linear-gradient(90deg,#00b5ff,#00b4ff,#00b3ff,#00b2ff,#00b0ff,#00afff,#00aeff,#00acff,#00abff,#00a9ff,#00a8ff,#00a6ff,#00a4ff,#00a3ff,#00a1ff,#009fff,#039dff,#169bff,#2b99ff,#4096ff,#5694ff,#6e91ff,#868fff,#a08cff,#ba89ff,#d786ff,#f483ff,#ff77ec,#ff67d3,#ff5abe,#ff4fac,#ff459c,#ff3d8e,#ff3582,#ff2e77,#ff286d,#ff2364,#ff1e5c,#ff1955,#ff154e,#ff1248,#fd0e42,#f20a3a,#e70733,#dd052d,#d30228,#ca0023,#c60020,#c2001c,#be0019,#bb0017,#b80014,#b50012,#b20010,#b0000e,#ad000c,#ab000b,#a90009,#a60008,#a40007,#a20005,#a10004,#9f0003,#9d0002,#9b0001,#9a0000,#900,#900)"></i>
<i style="top:358px;left:32px;width:536px;height:2px;background:linear-gradient(90deg,#00b2ff,#00b1ff,#00b0ff,#00aeff,#00adff,#00acff,#0af,#00a9ff,#00a7ff,#00a6ff,#00a4ff,#00a2ff,#00a0ff,#009fff,#009dff,#009bff,#0499ff,#1897ff,#2c94ff,#4192ff,#5790ff,#6f8dff,#878aff,#a088ff,#bb85ff,#d682ff,#f47eff,#ff72ed,#ff63d4,#ff57bf,#ff4cad,#ff429d,#ff3a8f,#ff3383,#ff2c78,#ff266e,#ff2165,#ff1c5d,#ff1856,#ff144f,#ff1049,#fb0c42,#f0093b,#e50634,#db032e,#d20128,#cb0024,#c70020,#c3001d,#bf001a,#bc0017,#b90015,#b60013,#b30011,#b0000f,#ae000d,#ac000b,#a9000a,#a70008,#a50007,#a30006,#a10005,#9f0004,#9e0003,#9c0002,#9a0001,#900,#900)"></i>
<i style="top:360px;left:32px;width:528px;height:2px;background:linear-gradient(90deg,#00afff,#00aeff,#00acff,#00abff,#0af,#00a8ff,#00a7ff,#00a5ff,#00a4ff,#00a2ff,#00a0ff,#009eff,#009dff,#009bff,#09f,#0097ff,#0695ff,#1992ff,#2d90ff,#438eff,#598bff,#6f89ff,#8786ff,#a183ff,#bb80ff,#d67dff,#f37aff,#ff6eed,#ff60d5,#ff53c0,#ff49ad,#ff3f9e,#ff3790,#ff3083,#ff2a79,#ff246f,#ff1f66,#ff1a5e,#ff1657,#ff1250,#ff0e4a,#f90b43,#ee073b,#e30534,#d9022e,#d00028,#cb0025,#c70021,#c4001e,#c0001b,#bd0018,#ba0016,#b70013,#b40011,#b1000f,#af000d,#ac000c,#aa000a,#a80009,#a60007,#a40006,#a20005,#a00004,#9e0003,#9d0002,#9b0001,#900)"></i>
<i style="top:362px;left:40px;width:520px;height:2px;background:linear-gradient(90deg,#0af,#00a9ff,#00a8ff,#00a6ff,#00a5ff,#00a3ff,#00a2ff,#00a0ff,#009eff,#009dff,#009bff,#09f,#0097ff,#0095ff,#0093ff,#0791ff,#1b8eff,#2f8cff,#448aff,#5a87ff,#7084ff,#8881ff,#a17fff,#bb7bff,#d678ff,#f375ff,#ff6aee,#ff5cd5,#ff50c0,#ff45ae,#ff3c9e,#ff3591,#ff2e84,#ff2779,#ff2270,#ff1d67,#ff185f,#ff1458,#ff1051,#ff0d4b,#f70943,#ec063b,#e10334,#d7012e,#d00029,#cc0025,#c80022,#c4001e,#c1001b,#bd0019,#ba0016,#b70014,#b50012,#b20010,#af000e,#ad000c,#ab000b,#a80009,#a60008,#a40007,#a20005,#a10004,#9f0003,#9d0002,#9c0001,#9a0001)"></i>
<i style="top:364px;left:40px;width:512px;height:2px;background:linear-gradient(90deg,#00a7ff,#00a6ff,#00a4ff,#00a3ff,#00a1ff,#00a0ff,#009eff,#009cff,#009bff,#09f,#0097ff,#0095ff,#0093ff,#0091ff,#008fff,#098dff,#1c8aff,#3088ff,#4585ff,#5b83ff,#7180ff,#897dff,#a17aff,#b7f,#d674ff,#f370ff,#ff66ef,#ff58d6,#ff4cc1,#ff42af,#ff3a9f,#ff3291,#ff2b85,#ff257a,#ff2071,#ff1b68,#ff1660,#ff1258,#ff0e52,#ff0b4c,#f50843,#ea053b,#df0234,#d6002e,#d1002a,#cd0026,#c90022,#c5001f,#c2001c,#be0019,#bb0017,#b80014,#b50012,#b30010,#b0000e,#ae000d,#ab000b,#a9000a,#a70008,#a50007,#a30006,#a10005,#9f0004,#9e0003,#9c0002)"></i>
<i style="top:366px;left:40px;width:504px;height:2px;background:linear-gradient(90deg,#00a4ff,#00a3ff,#00a1ff,#00a0ff,#009eff,#009cff,#009bff,#09f,#0097ff,#0095ff,#0093ff,#0091ff,#008fff,#008dff,#008bff,#0a89ff,#1d86ff,#3184ff,#4681ff,#5b7fff,#727cff,#8979ff,#a276ff,#bc73ff,#d66fff,#f26cff,#ff62ef,#ff54d7,#ff49c2,#ff3fb0,#ff37a0,#ff2f92,#ff2986,#ff237b,#ff1d71,#ff1969,#ff1461,#ff1059,#ff0d53,#ff094c,#f30643,#e8033c,#dd0135,#d7002f,#d2002b,#ce0027,#ca0023,#c60020,#c2001d,#bf001a,#bc0017,#b90015,#b60013,#b30011,#b1000f,#ae000d,#ac000c,#aa000a,#a80009,#a60007,#a40006,#a20005,#a00004,#9e0003)"></i>
<i style="top:368px;left:40px;width:504px;height:2px;background:linear-gradient(90deg,#00a1ff,#009fff,#009eff,#009cff,#009bff,#09f,#0097ff,#0096ff,#0094ff,#0092ff,#0090ff,#008eff,#008cff,#008aff,#0087ff,#0c85ff,#1f83ff,#3380ff,#477dff,#5c7bff,#7378ff,#8a75ff,#a272ff,#bc6eff,#d66bff,#f267ff,#ff5ef0,#ff51d7,#ff46c3,#ff3cb1,#ff34a1,#ff2d93,#ff2687,#ff217c,#ff1b72,#ff1769,#ff1261,#ff0f5a,#ff0b53,#fd084d,#f10544,#e6023c,#dd0035,#d80030,#d3002c,#cf0027,#cb0024,#c70020,#c3001d,#c0001a,#bd0018,#ba0016,#b70013,#b40011,#b1000f,#af000e,#ad000c,#aa000b,#a80009,#a60008,#a40007,#a20005,#a10004,#9f0003)"></i>
<i style="top:370px;left:40px;width:496px;height:2px;background:linear-gradient(90deg,#009eff,#009cff,#009bff,#09f,#0097ff,#0096ff,#0094ff,#0092ff,#0090ff,#008eff,#008cff,#008aff,#08f,#0086ff,#0084ff,#0d81ff,#207fff,#347cff,#4879ff,#5d77ff,#7474ff,#8b71ff,#a36dff,#bc6aff,#d667ff,#f263ff,#ff5af0,#ff4dd8,#ff42c3,#ff39b1,#ff31a2,#ff2a94,#ff2488,#ff1e7d,#ff1973,#ff156a,#ff1162,#ff0d5b,#ff0954,#fb064d,#ef0344,#e4013c,#dd0036,#d80031,#d4002c,#cf0028,#cb0024,#c80021,#c4001e,#c1001b,#bd0018,#ba0016,#b70014,#b50012,#b20010,#b0000e,#ad000d,#ab000b,#a9000a,#a70008,#a50007,#a30006,#a10005)"></i>
<i style="top:372px;left:40px;width:488px;height:2px;background:linear-gradient(90deg,#009bff,#09f,#0098ff,#0096ff,#0094ff,#0093ff,#0091ff,#008fff,#008dff,#008bff,#0089ff,#0087ff,#0085ff,#0082ff,#0080ff,#0f7eff,#227bff,#3578ff,#4976ff,#5e73ff,#7470ff,#8b6dff,#a369ff,#bc66ff,#d662ff,#f25fff,#ff56f1,#ff4ad9,#ff3fc4,#ff36b2,#ff2fa3,#ff2895,#ff2289,#ff1c7e,#ff1774,#ff136b,#ff0f63,#ff0b5c,#ff0855,#f9054d,#ed0244,#e4003d,#de0037,#d90032,#d5002d,#d00029,#cc0025,#c80022,#c5001f,#c1001c,#be0019,#bb0017,#b80014,#b50012,#b30010,#b0000f,#ae000d,#ac000b,#aa000a,#a80009,#a60007,#a40006)"></i>
<i style="top:374px;left:40px;width:488px;height:2px;background:linear-gradient(90deg,#0098ff,#0096ff,#0095ff,#0093ff,#0091ff,#008fff,#008eff,#008cff,#008aff,#08f,#0086ff,#0083ff,#0081ff,#007fff,#007cff,#107aff,#2377ff,#3675ff,#4a72ff,#5f6fff,#756cff,#8c69ff,#a465ff,#bc62ff,#d65eff,#f15aff,#ff52f1,#ff46d9,#ff3cc5,#ff33b3,#ff2ca3,#ff2596,#ff1f89,#ff1a7f,#ff1575,#ff116c,#ff0d64,#ff095d,#ff0656,#f6034d,#eb0044,#e5003e,#df0038,#da0033,#d5002e,#d1002a,#cd0026,#c90022,#c5001f,#c2001c,#bf001a,#bc0017,#b90015,#b60013,#b30011,#b1000f,#af000d,#ac000c,#aa000a,#a80009,#a60008,#a40007)"></i>
<i style="top:376px;left:40px;width:480px;height:2px;background:linear-gradient(90deg,#0095ff,#0093ff,#0091ff,#0090ff,#008eff,#008cff,#008aff,#08f,#0086ff,#0084ff,#0082ff,#0080ff,#007eff,#007bff,#0079ff,#1276ff,#2474ff,#3771ff,#4b6eff,#606bff,#7668ff,#8c65ff,#a461ff,#bc5eff,#d65aff,#f156ff,#ff4ef2,#ff43da,#ff39c5,#ff31b4,#ff29a4,#ff2396,#ff1d8a,#ff187f,#ff1376,#ff0f6d,#ff0b65,#ff085d,#ff0457,#f4014d,#eb0045,#e5003e,#e00039,#db0033,#d6002f,#d2002a,#ce0027,#ca0023,#c60020,#c3001d,#bf001a,#bc0018,#b90015,#b70013,#b40011,#b20010,#af000e,#ad000c,#ab000b,#a90009,#a70008)"></i>
<i style="top:378px;left:40px;width:472px;height:2px;background:linear-gradient(90deg,#0092ff,#0090ff,#008eff,#008dff,#008bff,#0089ff,#0087ff,#0085ff,#0083ff,#0081ff,#007fff,#007dff,#007aff,#0078ff,#0175ff,#1373ff,#2570ff,#396dff,#4c6aff,#6167ff,#7764ff,#8d61ff,#a45dff,#bd5aff,#d656ff,#f152ff,#ff4af2,#ff3fda,#ff36c6,#ff2eb4,#ff27a5,#ff2097,#ff1b8b,#ff1680,#ff1176,#ff0d6e,#ff0966,#ff065e,#ff0357,#f2004d,#ec0046,#e6003f,#e1003a,#dc0034,#d70030,#d3002b,#ce0027,#cb0024,#c70021,#c3001e,#c0001b,#bd0018,#ba0016,#b70014,#b50012,#b20010,#b0000e,#ae000d,#ab000b,#a9000a)"></i>
<i style="top:380px;left:40px;width:472px;height:2px;background:linear-gradient(90deg,#008fff,#008dff,#008bff,#008aff,#08f,#0086ff,#0084ff,#0082ff,#0080ff,#007eff,#007cff,#0079ff,#07f,#0074ff,#0372ff,#146fff,#276cff,#3a6aff,#4d67ff,#6264ff,#7760ff,#8e5dff,#a55aff,#bd56ff,#d652ff,#f04eff,#ff46f3,#ff3cdb,#ff33c7,#ff2bb5,#ff24a6,#ff1e98,#ff188c,#ff1481,#ff0f77,#ff0b6e,#ff0866,#ff045f,#fc0157,#f3004e,#ed0047,#e70040,#e2003a,#dd0035,#d80030,#d3002c,#cf0028,#cb0024,#c80021,#c4001e,#c1001b,#be0019,#bb0017,#b80014,#b50012,#b30011,#b1000f,#ae000d,#ac000c,#aa000a)"></i>
<i style="top:382px;left:40px;width:464px;height:2px;background:linear-gradient(90deg,#008cff,#008aff,#0089ff,#0087ff,#0085ff,#0083ff,#0081ff,#007fff,#007dff,#007bff,#0078ff,#0076ff,#0074ff,#0071ff,#046eff,#166cff,#2869ff,#3b66ff,#4e63ff,#6360ff,#785dff,#8e59ff,#a556ff,#bd52ff,#d64eff,#f04aff,#ff43f3,#ff39dc,#ff30c7,#ff28b6,#ff21a6,#ff1b99,#ff168d,#ff1182,#ff0d78,#ff096f,#ff0667,#ff0360,#fb0058,#f4004f,#ee0048,#e80041,#e2003b,#dd0036,#d90031,#d4002d,#d00029,#cc0025,#c80022,#c5001f,#c2001c,#bf0019,#bc0017,#b90015,#b60013,#b40011,#b1000f,#af000e,#ad000c)"></i>
<i style="top:384px;left:40px;width:456px;height:2px;background:linear-gradient(90deg,#0089ff,#0087ff,#0086ff,#0084ff,#0082ff,#0080ff,#007eff,#007cff,#007aff,#07f,#0075ff,#0073ff,#0070ff,#006eff,#066bff,#1768ff,#2966ff,#3c63ff,#4f60ff,#645cff,#7959ff,#8f56ff,#a552ff,#bd4eff,#d64aff,#f046ff,#ff3ff4,#ff35dc,#ff2dc8,#ff25b7,#ff1fa7,#ff199a,#ff148e,#ff0f83,#ff0b79,#ff0770,#ff0468,#ff0161,#fc0059,#f50050,#ef0049,#e90042,#e3003c,#de0037,#d90032,#d5002d,#d10029,#cd0026,#c90023,#c6001f,#c2001d,#bf001a,#bc0018,#b90015,#b70013,#b40012,#b20010,#b0000e)"></i>
<i style="top:386px;left:40px;width:456px;height:2px;background:linear-gradient(90deg,#0086ff,#0085ff,#0083ff,#0081ff,#007fff,#007dff,#007bff,#0079ff,#07f,#0074ff,#0072ff,#0070ff,#006dff,#006aff,#0768ff,#1865ff,#2a62ff,#3d5fff,#505cff,#6459ff,#7956ff,#8f52ff,#a64eff,#bd4bff,#d647ff,#f043ff,#ff3cf4,#ff32dd,#ff2ac9,#ff23b7,#ff1ca8,#ff179a,#ff128e,#ff0d83,#ff097a,#ff0671,#ff0269,#ff0061,#fd005a,#f60051,#ef004a,#e90043,#e4003d,#df0038,#da0033,#d6002e,#d2002a,#ce0027,#ca0023,#c60020,#c3001d,#c0001b,#bd0018,#ba0016,#b70014,#b50012,#b20010,#b0000f)"></i>
<i style="top:388px;left:48px;width:440px;height:2px;background:linear-gradient(90deg,#0082ff,#0080ff,#007eff,#007cff,#007aff,#0078ff,#0076ff,#0074ff,#0071ff,#006fff,#006cff,#006aff,#0067ff,#0965ff,#1a62ff,#2c5fff,#3e5cff,#5159ff,#6555ff,#7a52ff,#904eff,#a64bff,#be47ff,#d643ff,#ef3fff,#ff38f4,#ff2fdd,#ff27c9,#ff20b8,#ff1aa9,#ff149b,#ff108f,#ff0b84,#ff077a,#ff0472,#ff016a,#ff0062,#fd005b,#f70052,#f0004b,#ea0044,#e5003e,#e00038,#db0033,#d6002f,#d2002b,#ce0027,#cb0024,#c70021,#c4001e,#c1001b,#be0019,#bb0017,#b80014,#b60012,#b30011)"></i>
<i style="top:390px;left:48px;width:432px;height:2px;background:linear-gradient(90deg,#007fff,#007dff,#007bff,#0079ff,#07f,#0075ff,#0073ff,#0071ff,#006eff,#006cff,#0069ff,#0067ff,#0064ff,#0a61ff,#1b5eff,#2d5cff,#3f58ff,#5255ff,#6652ff,#7b4fff,#904bff,#a647ff,#be43ff,#d63fff,#ef3bff,#ff35f5,#ff2cde,#ff24ca,#ff1db9,#ff17a9,#ff129c,#ff0d90,#ff0985,#ff057b,#ff0272,#ff006a,#ff0063,#fe005c,#f70053,#f1004c,#eb0045,#e6003f,#e00039,#dc0034,#d70030,#d3002c,#cf0028,#cb0024,#c80021,#c4001e,#c1001c,#be0019,#bb0017,#b90015,#b60013)"></i>
<i style="top:392px;left:48px;width:432px;height:2px;background:linear-gradient(90deg,#007cff,#007aff,#0078ff,#0076ff,#0074ff,#0072ff,#0070ff,#006eff,#006bff,#0069ff,#06f,#0064ff,#0061ff,#0b5eff,#1c5bff,#2e58ff,#4055ff,#5352ff,#674fff,#7b4bff,#9148ff,#a744ff,#be40ff,#d63cff,#ef38ff,#ff31f5,#ff29de,#ff21cb,#ff1bb9,#ff15aa,#ff109d,#ff0b91,#ff0786,#ff047c,#ff0073,#ff006b,#ff0064,#ff005d,#f80054,#f2004d,#ec0046,#e60040,#e1003a,#dc0035,#d80030,#d4002c,#d00029,#cc0025,#c80022,#c5001f,#c2001c,#bf001a,#bc0018,#b90015,#b70013)"></i>
<i style="top:394px;left:48px;width:424px;height:2px;background:linear-gradient(90deg,#0079ff,#0078ff,#0076ff,#0073ff,#0071ff,#006fff,#006dff,#006bff,#0068ff,#06f,#0063ff,#0061ff,#005eff,#0d5bff,#1e58ff,#2f55ff,#4152ff,#544fff,#684bff,#7c48ff,#9144ff,#a740ff,#be3cff,#d638ff,#ef34ff,#ff2ef6,#ff26df,#ff1ecb,#ff18ba,#ff12ab,#ff0e9d,#ff0991,#ff0587,#ff027d,#ff0074,#ff006c,#ff0064,#ff005e,#f90055,#f3004e,#ed0047,#e70040,#e2003b,#dd0036,#d90031,#d4002d,#d00029,#cd0026,#c90023,#c60020,#c3001d,#c0001a,#bd0018,#ba0016)"></i>
<i style="top:396px;left:48px;width:416px;height:2px;background:linear-gradient(90deg,#07f,#0075ff,#0073ff,#0071ff,#006fff,#006cff,#006aff,#0068ff,#0065ff,#0063ff,#0060ff,#005eff,#005bff,#0e58ff,#1f55ff,#3052ff,#424fff,#554bff,#6948ff,#7d45ff,#9241ff,#a73dff,#be39ff,#d635ff,#ee31ff,#ff2bf6,#ff22df,#ff1ccc,#ff15bb,#ff10ac,#ff0b9e,#ff0792,#ff0387,#ff007e,#ff0075,#ff006d,#ff0065,#ff005e,#fa0056,#f3004f,#ee0048,#e80041,#e3003c,#de0037,#d90032,#d5002e,#d1002a,#cd0026,#ca0023,#c70020,#c3001d,#c0001b,#bd0019)"></i>
<i style="top:398px;left:48px;width:416px;height:2px;background:linear-gradient(90deg,#0074ff,#0072ff,#0070ff,#006eff,#006cff,#006aff,#0067ff,#0065ff,#0062ff,#0060ff,#005dff,#005bff,#0058ff,#0f55ff,#2052ff,#314fff,#434cff,#5648ff,#6945ff,#7d41ff,#923eff,#a83aff,#be36ff,#d631ff,#ee2dff,#ff27f7,#ff1fe0,#ff19cc,#ff13bb,#ff0eac,#ff099f,#ff0593,#ff0188,#ff007e,#ff0075,#ff006d,#f06,#ff005f,#fb0057,#f4004f,#ee0048,#e90042,#e4003d,#df0037,#da0033,#d6002e,#d2002b,#ce0027,#cb0024,#c70021,#c4001e,#c1001c,#be0019)"></i>
<i style="top:400px;left:48px;width:408px;height:2px;background:linear-gradient(90deg,#0071ff,#006fff,#006dff,#006bff,#0069ff,#0067ff,#0064ff,#0062ff,#0060ff,#005dff,#005aff,#0058ff,#05f,#1152ff,#214fff,#324cff,#4448ff,#5745ff,#6a42ff,#7e3eff,#933aff,#a836ff,#be32ff,#d62eff,#ee2aff,#ff24f7,#ff1de1,#ff16cd,#ff10bc,#ff0bad,#ff07a0,#ff0394,#ff0089,#ff007f,#ff0076,#ff006e,#ff0067,#ff0060,#fb0058,#f50050,#ef0049,#ea0043,#e4003d,#e00038,#db0033,#d7002f,#d3002b,#cf0028,#cb0024,#c80021,#c5001f,#c2001c)"></i>
<i style="top:402px;left:48px;width:400px;height:2px;background:linear-gradient(90deg,#006fff,#006dff,#006bff,#0069ff,#06f,#0064ff,#0062ff,#005fff,#005dff,#005aff,#0057ff,#05f,#0252ff,#124fff,#224cff,#3449ff,#4545ff,#5842ff,#6b3fff,#7f3bff,#9337ff,#a833ff,#bf2fff,#d62bff,#ee26ff,#ff21f7,#ff1ae1,#ff13ce,#ff0ebd,#ff09ae,#ff05a0,#ff0194,#ff008a,#ff0080,#f07,#ff006f,#ff0067,#ff0061,#fc0059,#f60051,#f0004a,#ea0044,#e5003e,#e00039,#dc0034,#d70030,#d3002c,#d00028,#cc0025,#c90022,#c5001f)"></i>
<i style="top:404px;left:48px;width:400px;height:2px;background:linear-gradient(90deg,#006cff,#006aff,#0068ff,#06f,#0064ff,#0061ff,#005fff,#005cff,#005aff,#0057ff,#05f,#0052ff,#034fff,#134cff,#2449ff,#3546ff,#4642ff,#593fff,#6c3bff,#7f38ff,#9434ff,#a930ff,#bf2cff,#d628ff,#ee23ff,#ff1ef8,#ff17e2,#ff11ce,#ff0bbd,#ff07ae,#ff03a1,#ff0095,#ff008a,#ff0081,#ff0078,#ff0070,#ff0068,#ff0061,#fd005a,#f70052,#f1004b,#eb0045,#e6003f,#e1003a,#dc0035,#d80031,#d4002d,#d00029,#cd0026,#c90023,#c60020)"></i>
<i style="top:406px;left:48px;width:392px;height:2px;background:linear-gradient(90deg,#006aff,#0068ff,#06f,#0063ff,#0061ff,#005fff,#005cff,#005aff,#0057ff,#05f,#0052ff,#004fff,#044cff,#1449ff,#2546ff,#3643ff,#473fff,#593cff,#6c38ff,#8035ff,#9431ff,#a92dff,#bf29ff,#d624ff,#ed20ff,#ff1bf8,#ff14e2,#ff0ecf,#ff09be,#ff04af,#ff00a2,#ff0096,#ff008b,#ff0081,#ff0078,#ff0070,#ff0069,#ff0062,#fe005b,#f70053,#f1004c,#ec0046,#e70040,#e2003b,#dd0036,#d90031,#d5002d,#d1002a,#cd0026,#ca0023)"></i>
<i style="top:408px;left:48px;width:384px;height:2px;background:linear-gradient(90deg,#0067ff,#0065ff,#0063ff,#0061ff,#005eff,#005cff,#005aff,#0057ff,#0054ff,#0052ff,#004fff,#004cff,#0649ff,#1646ff,#2643ff,#3740ff,#483cff,#5a39ff,#6d35ff,#8032ff,#942eff,#a92aff,#bf26ff,#d621ff,#ed1dff,#ff17f9,#ff11e3,#ff0bcf,#ff07bf,#ff02b0,#ff00a2,#ff0096,#ff008c,#ff0082,#ff0079,#ff0071,#ff006a,#ff0063,#ff005c,#f80054,#f2004d,#ed0046,#e70041,#e2003b,#de0036,#da0032,#d5002e,#d2002a,#ce0027)"></i>
<i style="top:410px;left:56px;width:376px;height:2px;background:linear-gradient(90deg,#0063ff,#0060ff,#005eff,#005cff,#0059ff,#0057ff,#0054ff,#0052ff,#004fff,#004cff,#0049ff,#0746ff,#1743ff,#2740ff,#383dff,#493aff,#5b36ff,#6e32ff,#812fff,#952bff,#aa27ff,#bf23ff,#d61eff,#ed1aff,#ff14f9,#ff0ee3,#ff09d0,#ff04bf,#ff00b0,#ff00a3,#ff0097,#ff008c,#ff0083,#ff007a,#ff0072,#ff006a,#ff0063,#ff005d,#f90055,#f3004e,#ed0047,#e80041,#e3003c,#df0037,#da0033,#d6002f,#d2002b,#cf0028)"></i>
<i style="top:412px;left:56px;width:368px;height:2px;background:linear-gradient(90deg,#0060ff,#005eff,#005cff,#0059ff,#0057ff,#0054ff,#0052ff,#004fff,#004cff,#004aff,#0047ff,#0844ff,#1841ff,#283dff,#393aff,#4a37ff,#5c33ff,#6e30ff,#812cff,#9528ff,#aa24ff,#bf20ff,#d61bff,#ed17ff,#ff11f9,#ff0ce4,#ff06d1,#ff02c0,#ff00b1,#ff00a4,#ff0098,#ff008d,#ff0083,#ff007b,#ff0072,#ff006b,#ff0064,#ff005e,#fa0056,#f4004f,#ee0048,#e90042,#e4003d,#df0038,#db0034,#d7002f,#d3002c)"></i>
<i style="top:414px;left:56px;width:360px;height:2px;background:linear-gradient(90deg,#005eff,#005bff,#0059ff,#0057ff,#0054ff,#0052ff,#004fff,#004cff,#004aff,#0047ff,#04f,#0a41ff,#193eff,#293bff,#3a37ff,#4b34ff,#5d30ff,#6f2dff,#8229ff,#9625ff,#aa21ff,#bf1dff,#d618ff,#ec14ff,#ff0ffa,#ff09e4,#ff04d1,#ff00c0,#ff00b2,#ff00a4,#f09,#ff008e,#ff0084,#ff007b,#ff0073,#ff006c,#ff0065,#ff005f,#fa0057,#f40050,#ef0049,#ea0043,#e5003e,#e00039,#dc0034,#d80030)"></i>
<i style="top:416px;left:56px;width:360px;height:2px;background:linear-gradient(90deg,#005bff,#0059ff,#0057ff,#0054ff,#0052ff,#004fff,#004dff,#004aff,#0047ff,#04f,#0041ff,#0b3eff,#1a3bff,#2a38ff,#3b35ff,#4c31ff,#5d2eff,#702aff,#8326ff,#9622ff,#ab1eff,#c01aff,#d615ff,#ec11ff,#ff0cfa,#ff06e5,#ff01d2,#ff00c1,#ff00b2,#ff00a5,#f09,#ff008f,#ff0085,#ff007c,#ff0074,#ff006c,#f06,#ff005f,#fb0058,#f50051,#f0004a,#ea0044,#e5003e,#e10039,#dc0035,#d80031)"></i>
<i style="top:418px;left:56px;width:352px;height:2px;background:linear-gradient(90deg,#0059ff,#0056ff,#0054ff,#0052ff,#004fff,#004dff,#004aff,#0047ff,#0045ff,#0042ff,#003fff,#0c3cff,#1b38ff,#2b35ff,#3c32ff,#4d2eff,#5e2bff,#7027ff,#8323ff,#971fff,#ab1bff,#c017ff,#d612ff,#ec0eff,#ff09fb,#ff03e5,#ff00d2,#ff00c2,#ff00b3,#ff00a6,#ff009a,#ff008f,#ff0086,#ff007d,#ff0075,#ff006d,#f06,#ff0060,#fc0059,#f60051,#f0004b,#eb0045,#e6003f,#e1003a,#dd0036)"></i>
<i style="top:420px;left:56px;width:344px;height:2px;background:linear-gradient(90deg,#0056ff,#0054ff,#0052ff,#004fff,#004dff,#004aff,#0048ff,#0045ff,#0042ff,#003fff,#003cff,#0d39ff,#1d36ff,#2c33ff,#3d2fff,#4e2cff,#5f28ff,#7124ff,#8420ff,#971cff,#ab18ff,#c014ff,#d50fff,#ec0bff,#ff06fb,#ff01e5,#ff00d3,#ff00c2,#ff00b4,#ff00a6,#ff009b,#ff0090,#ff0086,#ff007d,#ff0075,#ff006e,#ff0067,#ff0061,#fd005a,#f70052,#f1004c,#ec0046,#e70040,#e2003b)"></i>
<i style="top:422px;left:56px;width:344px;height:2px;background:linear-gradient(90deg,#0054ff,#0052ff,#004fff,#004dff,#004aff,#0048ff,#0045ff,#0042ff,#003fff,#003dff,#003aff,#0e36ff,#1e33ff,#2d30ff,#3e2dff,#4e29ff,#6025ff,#7222ff,#841eff,#971aff,#ab15ff,#c011ff,#d50dff,#ec08ff,#ff03fb,#ff00e6,#ff00d3,#ff00c3,#ff00b4,#ff00a7,#ff009b,#ff0091,#ff0087,#ff007e,#ff0076,#ff006f,#ff0068,#ff0061,#fd005b,#f70053,#f2004c,#ec0046,#e70041,#e3003c)"></i>
<i style="top:424px;left:56px;width:336px;height:2px;background:linear-gradient(90deg,#0052ff,#004fff,#004dff,#004aff,#0048ff,#0045ff,#0043ff,#0040ff,#003dff,#003aff,#0137ff,#1034ff,#1f31ff,#2e2dff,#3f2aff,#4f26ff,#6023ff,#721fff,#851bff,#9817ff,#ac13ff,#c00eff,#d50aff,#ec05ff,#ff00fc,#ff00e6,#ff00d4,#ff00c3,#ff00b5,#ff00a8,#ff009c,#ff0091,#f08,#ff007f,#f07,#ff006f,#ff0068,#ff0062,#fe005c,#f80054,#f2004d,#ed0047,#e80042)"></i>
<i style="top:426px;left:56px;width:328px;height:2px;background:linear-gradient(90deg,#004fff,#004dff,#004bff,#0048ff,#0045ff,#0043ff,#0040ff,#003dff,#003aff,#0038ff,#0234ff,#1131ff,#202eff,#2f2bff,#3f27ff,#5024ff,#6120ff,#731cff,#8518ff,#9814ff,#ac10ff,#c00cff,#d507ff,#eb02ff,#ff00fc,#ff00e7,#ff00d4,#ff00c4,#ff00b5,#ff00a8,#ff009d,#ff0092,#f08,#ff007f,#f07,#ff0070,#ff0069,#ff0063,#ff005d,#f90055,#f3004e,#ee0048)"></i>
<i style="top:428px;left:56px;width:328px;height:2px;background:linear-gradient(90deg,#004dff,#004bff,#0048ff,#0046ff,#0043ff,#0040ff,#003eff,#003bff,#0038ff,#0035ff,#0332ff,#122fff,#212cff,#3028ff,#4025ff,#5121ff,#621dff,#741aff,#8616ff,#9912ff,#ac0dff,#c009ff,#d504ff,#eb00ff,#ff00fc,#ff00e7,#ff00d5,#ff00c4,#ff00b6,#ff00a9,#ff009d,#ff0093,#ff0089,#ff0080,#ff0078,#ff0071,#ff006a,#ff0063,#ff005d,#fa0056,#f4004f,#ef0049)"></i>
<i style="top:430px;left:64px;width:312px;height:2px;background:linear-gradient(90deg,#0048ff,#0046ff,#0043ff,#0041ff,#003eff,#003bff,#0039ff,#0036ff,#03f,#0530ff,#132cff,#2229ff,#3126ff,#4122ff,#521fff,#631bff,#7417ff,#8613ff,#990fff,#ac0bff,#c106ff,#d502ff,#eb00ff,#ff00fd,#ff00e8,#ff00d5,#ff00c5,#ff00b7,#f0a,#ff009e,#ff0093,#ff008a,#ff0081,#ff0079,#ff0071,#ff006a,#ff0064,#ff005e,#fa0057,#f50050)"></i>
<i style="top:432px;left:64px;width:304px;height:2px;background:linear-gradient(90deg,#0046ff,#04f,#0041ff,#003eff,#003cff,#0039ff,#0036ff,#03f,#0030ff,#062dff,#142aff,#2327ff,#3223ff,#4220ff,#521cff,#6318ff,#7515ff,#8711ff,#990cff,#ad08ff,#c104ff,#d500ff,#eb00ff,#ff00fd,#ff00e8,#ff00d6,#ff00c6,#ff00b7,#f0a,#ff009f,#ff0094,#ff008a,#ff0081,#ff0079,#ff0072,#ff006b,#ff0065,#ff005f,#fb0058)"></i>
<i style="top:434px;left:64px;width:304px;height:2px;background:linear-gradient(90deg,#04f,#0041ff,#003fff,#003cff,#0039ff,#0037ff,#0034ff,#0031ff,#002eff,#072bff,#1528ff,#2424ff,#3321ff,#431dff,#531aff,#6416ff,#7512ff,#870eff,#9a0aff,#ad06ff,#c101ff,#d500ff,#eb00ff,#ff00fd,#ff00e9,#ff00d6,#ff00c6,#ff00b8,#ff00ab,#ff009f,#ff0095,#ff008b,#ff0082,#ff007a,#ff0073,#ff006c,#ff0065,#ff005f,#fc0059)"></i>
<i style="top:436px;left:64px;width:296px;height:2px;background:linear-gradient(90deg,#0042ff,#003fff,#003dff,#003aff,#0037ff,#0034ff,#0031ff,#002fff,#002bff,#0828ff,#1625ff,#2522ff,#341eff,#441bff,#5417ff,#6513ff,#7610ff,#880bff,#9a07ff,#ad03ff,#c100ff,#d500ff,#ea00ff,#ff00fe,#ff00e9,#ff00d7,#ff00c7,#ff00b8,#ff00ab,#ff00a0,#ff0095,#ff008c,#ff0083,#ff007b,#ff0073,#ff006c,#f06,#ff0060)"></i>
<i style="top:438px;left:64px;width:288px;height:2px;background:linear-gradient(90deg,#003fff,#003dff,#003aff,#0038ff,#0035ff,#0032ff,#002fff,#002cff,#0029ff,#0926ff,#1723ff,#261fff,#351cff,#4518ff,#5515ff,#6511ff,#770dff,#8809ff,#9b05ff,#ad01ff,#c100ff,#d500ff,#ea00ff,#ff00fe,#ff00e9,#ff00d7,#ff00c7,#ff00b9,#ff00ac,#ff00a0,#ff0096,#ff008c,#ff0083,#ff007b,#ff0074,#ff006d,#ff0067)"></i>
<i style="top:440px;left:64px;width:288px;height:2px;background:linear-gradient(90deg,#003dff,#003bff,#0038ff,#0035ff,#03f,#0030ff,#002dff,#002aff,#0027ff,#0a24ff,#1820ff,#271dff,#361aff,#4616ff,#5612ff,#660fff,#770bff,#8907ff,#9b02ff,#ae00ff,#c100ff,#d500ff,#ea00ff,#ff00fe,#ff00ea,#ff00d8,#ff00c8,#ff00b9,#ff00ad,#ff00a1,#ff0096,#ff008d,#ff0084,#ff007c,#ff0074,#ff006e,#ff0067)"></i>
<i style="top:442px;left:64px;width:280px;height:2px;background:linear-gradient(90deg,#003bff,#0039ff,#0036ff,#03f,#0030ff,#002eff,#002bff,#0028ff,#0025ff,#0b21ff,#1a1eff,#281bff,#3717ff,#4614ff,#5610ff,#670cff,#7808ff,#8904ff,#9b00ff,#ae00ff,#c100ff,#d500ff,#ea00ff,#f0f,#ff00ea,#ff00d8,#ff00c8,#ff00ba,#ff00ad,#ff00a2,#ff0097,#ff008d,#ff0085,#ff007d,#ff0075,#ff006e)"></i>
<i style="top:444px;left:64px;width:272px;height:2px;background:linear-gradient(90deg,#0039ff,#0036ff,#0034ff,#0031ff,#002eff,#002bff,#0028ff,#0025ff,#02f,#0d1fff,#1b1cff,#2918ff,#3815ff,#4711ff,#570eff,#670aff,#7806ff,#8a02ff,#9c00ff,#ae00ff,#c100ff,#d500ff,#ea00ff,#f0f,#ff00eb,#ff00d9,#ff00c9,#f0b,#ff00ae,#ff00a2,#ff0098,#ff008e,#ff0085,#ff007d,#ff0076)"></i>
<i style="top:446px;left:72px;width:264px;height:2px;background:linear-gradient(90deg,#0034ff,#0032ff,#002fff,#002cff,#0029ff,#0026ff,#0023ff,#0020ff,#0e1dff,#1c1aff,#2a16ff,#3913ff,#480fff,#580bff,#6808ff,#7904ff,#8a00ff,#9c00ff,#ae00ff,#c100ff,#d500ff,#ea00ff,#f0f,#ff00eb,#ff00d9,#ff00c9,#f0b,#ff00ae,#ff00a3,#ff0098,#ff008f,#ff0086,#ff007e,#ff0076)"></i>
<i style="top:448px;left:72px;width:256px;height:2px;background:linear-gradient(90deg,#0032ff,#0030ff,#002dff,#002aff,#0027ff,#0024ff,#0021ff,#011eff,#0f1bff,#1d17ff,#2b14ff,#3a10ff,#490dff,#5909ff,#6905ff,#7901ff,#8b00ff,#9c00ff,#af00ff,#c200ff,#d500ff,#e900ff,#fe00ff,#ff00eb,#ff00da,#ff00ca,#ff00bc,#ff00af,#ff00a3,#f09,#ff008f,#ff0087,#ff007f)"></i>
<i style="top:450px;left:72px;width:248px;height:2px;background:linear-gradient(90deg,#0030ff,#002dff,#002bff,#0028ff,#0025ff,#02f,#001fff,#021cff,#1019ff,#1e15ff,#2c12ff,#3b0eff,#4a0bff,#5907ff,#6903ff,#7a00ff,#8b00ff,#9d00ff,#af00ff,#c200ff,#d500ff,#e900ff,#fe00ff,#ff00ec,#ff00da,#ff00ca,#ff00bc,#ff00b0,#ff00a4,#ff009a,#ff0090,#ff0087)"></i>
<i style="top:452px;left:72px;width:248px;height:2px;background:linear-gradient(90deg,#002eff,#002bff,#0029ff,#0026ff,#0023ff,#0020ff,#001dff,#031aff,#1116ff,#1f13ff,#2d10ff,#3b0cff,#4b08ff,#5a05ff,#6a01ff,#7a00ff,#8b00ff,#9d00ff,#af00ff,#c200ff,#d500ff,#e900ff,#fe00ff,#ff00ec,#ff00db,#ff00cb,#ff00bd,#ff00b0,#ff00a5,#ff009a,#ff0091,#f08)"></i>
<i style="top:454px;left:72px;width:240px;height:2px;background:linear-gradient(90deg,#002cff,#0029ff,#0027ff,#0024ff,#0021ff,#001eff,#001bff,#0517ff,#1214ff,#2011ff,#2e0dff,#3c0aff,#4b06ff,#5b02ff,#6b00ff,#7b00ff,#8c00ff,#9d00ff,#af00ff,#c200ff,#d500ff,#e900ff,#fe00ff,#ff00ed,#ff00db,#ff00cb,#ff00bd,#ff00b1,#ff00a5,#ff009b,#ff0091)"></i>
<i style="top:456px;left:72px;width:232px;height:2px;background:linear-gradient(90deg,#002aff,#0027ff,#0024ff,#02f,#001fff,#001cff,#0019ff,#0615ff,#1312ff,#210fff,#2f0bff,#3d08ff,#4c04ff,#5b00ff,#6b00ff,#7b00ff,#8c00ff,#9e00ff,#b000ff,#c200ff,#d500ff,#e900ff,#fd00ff,#ff00ed,#ff00db,#f0c,#ff00be,#ff00b1,#ff00a6,#ff009b)"></i>
<i style="top:458px;left:72px;width:232px;height:2px;background:linear-gradient(90deg,#0028ff,#0025ff,#02f,#0020ff,#001dff,#001aff,#0016ff,#0713ff,#1410ff,#220dff,#3009ff,#3e06ff,#4d02ff,#5c00ff,#6c00ff,#7c00ff,#8d00ff,#9e00ff,#b000ff,#c200ff,#d500ff,#e900ff,#fd00ff,#ff00ed,#ff00dc,#f0c,#ff00be,#ff00b2,#ff00a6,#ff009c)"></i>
<i style="top:460px;left:72px;width:224px;height:2px;background:linear-gradient(90deg,#0026ff,#0023ff,#0020ff,#001eff,#001bff,#0018ff,#0014ff,#0811ff,#150eff,#230bff,#3107ff,#3f03ff,#4e00ff,#5d00ff,#6c00ff,#7d00ff,#8d00ff,#9e00ff,#b000ff,#c200ff,#d500ff,#e900ff,#fd00ff,#f0e,#ff00dc,#ff00cd,#ff00bf,#ff00b2,#ff00a7)"></i>
<i style="top:462px;left:72px;width:216px;height:2px;background:linear-gradient(90deg,#0024ff,#0021ff,#001eff,#001cff,#0019ff,#0016ff,#0012ff,#090fff,#160cff,#2408ff,#3105ff,#4001ff,#4e00ff,#5d00ff,#6d00ff,#7d00ff,#8e00ff,#9f00ff,#b000ff,#c200ff,#d500ff,#e800ff,#fc00ff,#f0e,#f0d,#ff00cd,#ff00bf,#ff00b3)"></i>
<i style="top:464px;left:80px;width:208px;height:2px;background:linear-gradient(90deg,#001fff,#001cff,#001aff,#0017ff,#0014ff,#0010ff,#0a0dff,#170aff,#2406ff,#3203ff,#4000ff,#4f00ff,#5e00ff,#6e00ff,#7e00ff,#8e00ff,#9f00ff,#b000ff,#c200ff,#d500ff,#e800ff,#fc00ff,#f0e,#f0d,#ff00ce,#ff00c0,#ff00b3)"></i>
<i style="top:466px;left:80px;width:200px;height:2px;background:linear-gradient(90deg,#001dff,#001bff,#0018ff,#0015ff,#0012ff,#000eff,#0b0bff,#1808ff,#2504ff,#3301ff,#4100ff,#5000ff,#5f00ff,#6e00ff,#7e00ff,#8e00ff,#9f00ff,#b100ff,#c200ff,#d500ff,#e800ff,#fc00ff,#ff00ef,#ff00de,#ff00ce,#ff00c0)"></i>
<i style="top:468px;left:80px;width:192px;height:2px;background:linear-gradient(90deg,#001bff,#0019ff,#0016ff,#0013ff,#0010ff,#000cff,#0c09ff,#1906ff,#2602ff,#3400ff,#4200ff,#5100ff,#5f00ff,#6f00ff,#7e00ff,#8f00ff,#9f00ff,#b100ff,#c300ff,#d500ff,#e800ff,#fc00ff,#ff00ef,#ff00de,#ff00cf)"></i>
<i style="top:470px;left:80px;width:192px;height:2px;background:linear-gradient(90deg,#001aff,#0017ff,#0014ff,#01f,#000eff,#000aff,#0d07ff,#1a04ff,#2700ff,#3500ff,#4300ff,#5100ff,#6000ff,#6f00ff,#7f00ff,#8f00ff,#a000ff,#b100ff,#c300ff,#d500ff,#e800ff,#fb00ff,#ff00f0,#ff00df,#ff00cf)"></i>
<i style="top:472px;left:80px;width:184px;height:2px;background:linear-gradient(90deg,#0018ff,#0015ff,#0012ff,#000fff,#000cff,#0209ff,#0e05ff,#1b02ff,#2800ff,#3600ff,#40f,#5200ff,#6100ff,#7000ff,#7f00ff,#9000ff,#a000ff,#b100ff,#c300ff,#d500ff,#e800ff,#fb00ff,#ff00f0,#ff00df)"></i>
<i style="top:474px;left:80px;width:176px;height:2px;background:linear-gradient(90deg,#0016ff,#0013ff,#0010ff,#000dff,#000aff,#0307ff,#0f03ff,#1c00ff,#2900ff,#3600ff,#40f,#5300ff,#6100ff,#7000ff,#8000ff,#9000ff,#a000ff,#b100ff,#c300ff,#d500ff,#e800ff,#fb00ff,#ff00f0)"></i>
<i style="top:476px;left:80px;width:176px;height:2px;background:linear-gradient(90deg,#0014ff,#01f,#000eff,#000bff,#0008ff,#0405ff,#1001ff,#1d00ff,#2a00ff,#3700ff,#4500ff,#5300ff,#6200ff,#7100ff,#8000ff,#9000ff,#a100ff,#b200ff,#c300ff,#d500ff,#e700ff,#fb00ff,#ff00f1)"></i>
<i style="top:478px;left:88px;width:160px;height:2px;background:linear-gradient(90deg,#000fff,#000cff,#0009ff,#0006ff,#0503ff,#10f,#1e00ff,#2b00ff,#3800ff,#4600ff,#5400ff,#6300ff,#7100ff,#8100ff,#9100ff,#a100ff,#b200ff,#c300ff,#d500ff,#e700ff,#fa00ff)"></i>
<i style="top:480px;left:88px;width:152px;height:2px;background:linear-gradient(90deg,#000dff,#000aff,#0007ff,#0004ff,#0601ff,#1200ff,#1f00ff,#2c00ff,#3900ff,#4700ff,#50f,#6300ff,#7200ff,#8100ff,#9100ff,#a100ff,#b200ff,#c300ff,#d500ff,#e700ff)"></i>
<i style="top:482px;left:88px;width:152px;height:2px;background:linear-gradient(90deg,#000cff,#0009ff,#0006ff,#0002ff,#0700ff,#1300ff,#2000ff,#2c00ff,#3a00ff,#4700ff,#50f,#6400ff,#7300ff,#8200ff,#9100ff,#a200ff,#b200ff,#c300ff,#d500ff,#e700ff)"></i>
<i style="top:484px;left:88px;width:144px;height:2px;background:linear-gradient(90deg,#000aff,#0007ff,#0004ff,#0001ff,#0800ff,#1400ff,#2000ff,#2d00ff,#3b00ff,#4800ff,#5600ff,#6400ff,#7300ff,#8200ff,#9200ff,#a200ff,#b200ff,#c300ff,#d500ff)"></i>
<i style="top:486px;left:88px;width:136px;height:2px;background:linear-gradient(90deg,#0008ff,#0005ff,#0002ff,#00f,#0900ff,#1500ff,#2100ff,#2e00ff,#3b00ff,#4900ff,#5700ff,#6500ff,#7400ff,#8300ff,#9200ff,#a200ff,#b200ff,#c300ff)"></i>
<i style="top:488px;left:88px;width:136px;height:2px;background:linear-gradient(90deg,#0006ff,#0003ff,#00f,#00f,#0a00ff,#1600ff,#20f,#2f00ff,#3c00ff,#4a00ff,#5700ff,#60f,#7400ff,#8300ff,#9200ff,#a200ff,#b300ff,#c300ff)"></i>
<i style="top:490px;left:96px;width:120px;height:2px;background:linear-gradient(90deg,#0002ff,#00f,#00f,#0b00ff,#1700ff,#2300ff,#3000ff,#3d00ff,#4a00ff,#5800ff,#60f,#7500ff,#8400ff,#9300ff,#a300ff,#b300ff)"></i>
<i style="top:492px;left:96px;width:112px;height:2px;background:linear-gradient(90deg,#00f,#00f,#00f,#0c00ff,#1800ff,#2400ff,#3100ff,#3e00ff,#4b00ff,#5900ff,#6700ff,#7500ff,#8400ff,#9300ff,#a300ff)"></i>
<i style="top:494px;left:96px;width:112px;height:2px;background:linear-gradient(90deg,#00f,#00f,#0100ff,#0d00ff,#1900ff,#2500ff,#3100ff,#3e00ff,#4c00ff,#5900ff,#6700ff,#7600ff,#8400ff,#9400ff,#a300ff)"></i>
<i style="top:496px;left:96px;width:104px;height:2px;background:linear-gradient(90deg,#00f,#00f,#0200ff,#0d00ff,#1900ff,#2600ff,#3200ff,#3f00ff,#4c00ff,#5a00ff,#6800ff,#7600ff,#8500ff,#9400ff)"></i>
<i style="top:498px;left:104px;width:88px;height:2px;background:linear-gradient(90deg,#00f,#0300ff,#0e00ff,#1a00ff,#2600ff,#30f,#4000ff,#4d00ff,#5a00ff,#6800ff,#70f,#8500ff)"></i>
<i style="top:500px;left:104px;width:88px;height:2px;background:linear-gradient(90deg,#00f,#0400ff,#0f00ff,#1b00ff,#2700ff,#3400ff,#4100ff,#4e00ff,#5b00ff,#6900ff,#70f,#8600ff)"></i>
<i style="top:502px;left:104px;width:80px;height:2px;background:linear-gradient(90deg,#00f,#0500ff,#1000ff,#1c00ff,#2800ff,#3500ff,#4100ff,#4e00ff,#5c00ff,#6900ff,#7800ff)"></i>
<i style="top:504px;left:104px;width:72px;height:2px;background:linear-gradient(90deg,#00f,#0600ff,#10f,#1d00ff,#2900ff,#3500ff,#4200ff,#4f00ff,#5c00ff,#6a00ff)"></i>
<i style="top:506px;left:112px;width:64px;height:2px;background:linear-gradient(90deg,#0700ff,#1200ff,#1e00ff,#2a00ff,#3600ff,#4300ff,#5000ff,#5d00ff,#6a00ff)"></i>
<i style="top:508px;left:112px;width:56px;height:2px;background:linear-gradient(90deg,#0800ff,#1300ff,#1f00ff,#2b00ff,#3700ff,#4300ff,#5000ff,#5d00ff)"></i>
<i style="top:510px;left:112px;width:48px;height:2px;background:linear-gradient(90deg,#0800ff,#1400ff,#1f00ff,#2b00ff,#3800ff,#40f,#5100ff)"></i>
<i style="top:512px;left:120px;width:40px;height:2px;background:linear-gradient(90deg,#1500ff,#2000ff,#2c00ff,#3800ff,#4500ff,#5200ff)"></i>
<i style="top:514px;left:120px;width:32px;height:2px;background:linear-gradient(90deg,#1600ff,#2100ff,#2d00ff,#3900ff,#4500ff)"></i>
<i style="top:516px;left:120px;width:24px;height:2px;background:linear-gradient(90deg,#1600ff,#20f,#2e00ff,#3a00ff)"></i>
<i style="top:518px;left:128px;width:16px;height:2px;background:linear-gradient(90deg,#2300ff,#2e00ff,#3a00ff)"></i>
</div>
<div class="rw" style="position:absolute;left:1471.5px;top:46px;width:184px;height:190px;overflow:hidden;">
<i style="top:0px;left:0px;width:184px;height:2px;background:linear-gradient(90deg,#b0ff00,#b6ff00,#bcff00,#c2ff00,#c8ff00,#ceff00,#d4ff00,#daff00,#e0ff00,#e6ff00,#edff00,#f3ff00,#faff00,#fffe00,#fff700,#fff100,#ffeb00)"></i>
<i style="top:2px;left:0px;width:184px;height:2px;background:linear-gradient(90deg,#b1ff00,#b7ff00,#bcff00,#c2ff00,#c8ff00,#ceff00,#d4ff00,#dbff00,#e1ff00,#e7ff00,#edff00,#f4ff00,#faff00,#fffd00,#fff700,#fff100,#ffeb00)"></i>
<i style="top:4px;left:0px;width:184px;height:2px;background:linear-gradient(90deg,#b1ff00,#b7ff00,#bdff00,#c3ff00,#c9ff00,#cfff00,#d5ff00,#dbff00,#e1ff00,#e8ff00,#ef0,#f5ff00,#fbff00,#fffc00,#fff600,#fff000,#ffea00)"></i>
<i style="top:6px;left:0px;width:184px;height:2px;background:linear-gradient(90deg,#b2ff00,#b8ff00,#bdff00,#c3ff00,#c9ff00,#cfff00,#d6ff00,#dcff00,#e2ff00,#e8ff00,#efff00,#f5ff00,#fcff00,#fffc00,#fff500,#ffef00,#ffe900)"></i>
<i style="top:8px;left:0px;width:184px;height:2px;background:linear-gradient(90deg,#b2ff00,#b8ff00,#beff00,#c4ff00,#caff00,#d0ff00,#d6ff00,#dcff00,#e3ff00,#e9ff00,#efff00,#f6ff00,#fcff00,#fffb00,#fff500,#ffef00,#ffe900)"></i>
<i style="top:10px;left:0px;width:184px;height:2px;background:linear-gradient(90deg,#b3ff00,#b9ff00,#beff00,#c4ff00,#caff00,#d1ff00,#d7ff00,#df0,#e3ff00,#eaff00,#f0ff00,#f6ff00,#fdff00,#fffa00,#fff400,#fe0,#ffe800)"></i>
<i style="top:12px;left:0px;width:184px;height:2px;background:linear-gradient(90deg,#b3ff00,#b9ff00,#bfff00,#c5ff00,#cbff00,#d1ff00,#d7ff00,#deff00,#e4ff00,#eaff00,#f1ff00,#f7ff00,#feff00,#fffa00,#fff300,#ffed00,#ffe800)"></i>
<i style="top:14px;left:0px;width:184px;height:2px;background:linear-gradient(90deg,#b4ff00,#baff00,#c0ff00,#c6ff00,#cf0,#d2ff00,#d8ff00,#deff00,#e4ff00,#ebff00,#f1ff00,#f8ff00,#feff00,#fff900,#fff300,#ffed00,#ffe700)"></i>
<i style="top:16px;left:0px;width:184px;height:2px;background:linear-gradient(90deg,#b4ff00,#baff00,#c0ff00,#c6ff00,#cf0,#d2ff00,#d8ff00,#dfff00,#e5ff00,#ebff00,#f2ff00,#f8ff00,#ff0,#fff800,#fff200,#ffec00,#ffe600)"></i>
<i style="top:18px;left:0px;width:184px;height:2px;background:linear-gradient(90deg,#b5ff00,#bf0,#c1ff00,#c7ff00,#cdff00,#d3ff00,#d9ff00,#dfff00,#e6ff00,#ecff00,#f3ff00,#f9ff00,#fffe00,#fff800,#fff200,#ffec00,#ffe600)"></i>
<i style="top:20px;left:0px;width:184px;height:2px;background:linear-gradient(90deg,#b5ff00,#bf0,#c1ff00,#c7ff00,#cdff00,#d3ff00,#daff00,#e0ff00,#e6ff00,#edff00,#f3ff00,#faff00,#fffe00,#fff700,#fff100,#ffeb00,#ffe500)"></i>
<i style="top:22px;left:0px;width:184px;height:2px;background:linear-gradient(90deg,#b6ff00,#bcff00,#c2ff00,#c8ff00,#ceff00,#d4ff00,#daff00,#e1ff00,#e7ff00,#edff00,#f4ff00,#faff00,#fffd00,#fff600,#fff000,#ffea00,#ffe500)"></i>
<i style="top:24px;left:0px;width:184px;height:2px;background:linear-gradient(90deg,#b6ff01,#bcff00,#c2ff00,#c8ff00,#ceff00,#d5ff00,#dbff00,#e1ff00,#e8ff00,#ef0,#f5ff00,#fbff00,#fffc00,#fff600,#fff000,#ffea00,#ffe400)"></i>
<i style="top:26px;left:0px;width:184px;height:2px;background:linear-gradient(90deg,#b7ff01,#bdff00,#c3ff00,#c9ff00,#cfff00,#d5ff00,#dbff00,#e2ff00,#e8ff00,#efff00,#f5ff00,#fcff00,#fffc00,#fff500,#ffef00,#ffe900,#ffe300)"></i>
<i style="top:28px;left:0px;width:184px;height:2px;background:linear-gradient(90deg,#b7ff01,#bdff00,#c3ff00,#c9ff00,#d0ff00,#d6ff00,#dcff00,#e2ff00,#e9ff00,#efff00,#f6ff00,#fcff00,#fffb00,#fff500,#fe0,#ffe800,#ffe300)"></i>
<i style="top:30px;left:0px;width:184px;height:2px;background:linear-gradient(90deg,#b8ff02,#beff00,#c4ff00,#caff00,#d0ff00,#d6ff00,#df0,#e3ff00,#e9ff00,#f0ff00,#f7ff00,#fdff00,#fffa00,#fff400,#fe0,#ffe800,#ffe200)"></i>
<i style="top:32px;left:0px;width:184px;height:2px;background:linear-gradient(90deg,#b8ff02,#beff01,#c4ff00,#cbff00,#d1ff00,#d7ff00,#df0,#e4ff00,#eaff00,#f1ff00,#f7ff00,#feff00,#fffa00,#fff300,#ffed00,#ffe700,#ffe200)"></i>
<i style="top:34px;left:0px;width:184px;height:2px;background:linear-gradient(90deg,#b9ff02,#bfff01,#c5ff00,#cbff00,#d1ff00,#d8ff00,#deff00,#e4ff00,#ebff00,#f1ff00,#f8ff00,#ff0,#fff900,#fff300,#ffec00,#ffe700,#ffe100)"></i>
<i style="top:36px;left:0px;width:184px;height:2px;background:linear-gradient(90deg,#baff02,#c0ff01,#c6ff00,#cf0,#d2ff00,#d8ff00,#deff00,#e5ff00,#ebff00,#f2ff00,#f9ff00,#ff0,#fff800,#fff200,#ffec00,#ffe600,#ffe000)"></i>
<i style="top:38px;left:0px;width:184px;height:2px;background:linear-gradient(90deg,#baff03,#c0ff01,#c6ff00,#cf0,#d3ff00,#d9ff00,#dfff00,#e6ff00,#ecff00,#f3ff00,#f9ff00,#fffe00,#fff800,#fff100,#ffeb00,#ffe500,#ffe000)"></i>
<i style="top:40px;left:0px;width:184px;height:2px;background:linear-gradient(90deg,#bbff03,#c1ff02,#c7ff00,#cdff00,#d3ff00,#d9ff00,#e0ff00,#e6ff00,#edff00,#f3ff00,#faff00,#fffd00,#fff700,#fff100,#ffeb00,#ffe500,#ffdf00)"></i>
<i style="top:42px;left:0px;width:184px;height:2px;background:linear-gradient(90deg,#bbff03,#c1ff02,#c7ff01,#cdff00,#d4ff00,#daff00,#e0ff00,#e7ff00,#edff00,#f4ff00,#fbff00,#fffd00,#fff600,#fff000,#ffea00,#ffe400,#ffdf00)"></i>
<i style="top:44px;left:0px;width:184px;height:2px;background:linear-gradient(90deg,#bcff04,#c2ff02,#c8ff01,#ceff00,#d4ff00,#dbff00,#e1ff00,#e7ff00,#ef0,#f5ff00,#fbff00,#fffc00,#fff600,#ffef00,#ffe900,#ffe400,#ffde00)"></i>
<i style="top:46px;left:0px;width:184px;height:2px;background:linear-gradient(90deg,#bcff04,#c2ff03,#c8ff01,#cfff00,#d5ff00,#dbff00,#e2ff00,#e8ff00,#efff00,#f5ff00,#fcff00,#fffb00,#fff500,#ffef00,#ffe900,#ffe300,#fd0)"></i>
<i style="top:48px;left:0px;width:184px;height:2px;background:linear-gradient(90deg,#bdff04,#c3ff03,#c9ff02,#cfff00,#d5ff00,#dcff00,#e2ff00,#e9ff00,#efff00,#f6ff00,#fdff00,#fffb00,#fff400,#fe0,#ffe800,#ffe200,#fd0)"></i>
<i style="top:50px;left:0px;width:184px;height:2px;background:linear-gradient(90deg,#bdff04,#c3ff03,#caff02,#d0ff00,#d6ff00,#dcff00,#e3ff00,#e9ff00,#f0ff00,#f7ff00,#fdff00,#fffa00,#fff400,#ffed00,#ffe800,#ffe200,#ffdc00)"></i>
<i style="top:52px;left:0px;width:184px;height:2px;background:linear-gradient(90deg,#beff05,#c4ff03,#caff02,#d0ff01,#d7ff00,#df0,#e3ff00,#eaff00,#f1ff00,#f7ff00,#feff00,#fff900,#fff300,#ffed00,#ffe700,#ffe100,#ffdc00)"></i>
<i style="top:54px;left:0px;width:184px;height:2px;background:linear-gradient(90deg,#beff05,#c5ff04,#cbff02,#d1ff01,#d7ff00,#deff00,#e4ff00,#ebff00,#f1ff00,#f8ff00,#ff0,#fff900,#fff200,#ffec00,#ffe600,#ffe100,#ffdb00)"></i>
<i style="top:56px;left:0px;width:184px;height:2px;background:linear-gradient(90deg,#bfff05,#c5ff04,#cbff03,#d2ff01,#d8ff00,#deff00,#e5ff00,#ebff00,#f2ff00,#f9ff00,#ff0,#fff800,#fff200,#ffec00,#ffe600,#ffe000,#ffdb00)"></i>
<i style="top:58px;left:0px;width:184px;height:2px;background:linear-gradient(90deg,#c0ff06,#c6ff04,#ccff03,#d2ff02,#d8ff00,#dfff00,#e5ff00,#ecff00,#f3ff00,#f9ff00,#fffe00,#fff700,#fff100,#ffeb00,#ffe500,#ffdf00,#ffda00)"></i>
<i style="top:60px;left:0px;width:184px;height:2px;background:linear-gradient(90deg,#c0ff06,#c6ff05,#ccff03,#d3ff02,#d9ff01,#dfff00,#e6ff00,#edff00,#f3ff00,#faff00,#fffd00,#fff700,#fff000,#ffea00,#ffe400,#ffdf00,#ffd900)"></i>
<i style="top:62px;left:0px;width:184px;height:2px;background:linear-gradient(90deg,#c1ff06,#c7ff05,#cdff04,#d3ff02,#daff01,#e0ff00,#e7ff00,#edff00,#f4ff00,#fbff00,#fffd00,#fff600,#fff000,#ffea00,#ffe400,#ffde00,#ffd900)"></i>
<i style="top:64px;left:0px;width:184px;height:2px;background:linear-gradient(90deg,#c1ff07,#c7ff05,#ceff04,#d4ff03,#daff01,#e1ff00,#e7ff00,#ef0,#f5ff00,#fbff00,#fffc00,#fff500,#ffef00,#ffe900,#ffe300,#ffde00,#ffd800)"></i>
<i style="top:66px;left:0px;width:184px;height:2px;background:linear-gradient(90deg,#c2ff07,#c8ff06,#ceff04,#d5ff03,#dbff01,#e1ff00,#e8ff00,#efff00,#f5ff00,#fcff00,#fffb00,#fff500,#fe0,#ffe800,#ffe300,#fd0,#ffd800)"></i>
<i style="top:68px;left:0px;width:184px;height:2px;background:linear-gradient(90deg,#c2ff07,#c9ff06,#cfff04,#d5ff03,#dcff02,#e2ff00,#e9ff00,#efff00,#f6ff00,#fdff00,#fffb00,#fff400,#fe0,#ffe800,#ffe200,#ffdc00,#ffd700)"></i>
<i style="top:70px;left:0px;width:184px;height:2px;background:linear-gradient(90deg,#c3ff07,#c9ff06,#cfff05,#d6ff03,#dcff02,#e3ff01,#e9ff00,#f0ff00,#f7ff00,#fdff00,#fffa00,#fff300,#ffed00,#ffe700,#ffe100,#ffdc00,#ffd600)"></i>
<i style="top:72px;left:0px;width:184px;height:2px;background:linear-gradient(90deg,#c3ff08,#caff06,#d0ff05,#d6ff04,#ddff02,#e3ff01,#eaff00,#f1ff00,#f7ff00,#feff00,#fff900,#fff300,#ffec00,#ffe700,#ffe100,#ffdb00,#ffd600)"></i>
<i style="top:74px;left:0px;width:184px;height:2px;background:linear-gradient(90deg,#c4ff08,#caff07,#d1ff05,#d7ff04,#ddff03,#e4ff01,#eaff00,#f1ff00,#f8ff00,#ff0,#fff900,#fff200,#ffec00,#ffe600,#ffe000,#ffdb00,#ffd500)"></i>
<i style="top:76px;left:0px;width:184px;height:2px;background:linear-gradient(90deg,#c5ff08,#cbff07,#d1ff06,#d8ff04,#deff03,#e5ff02,#ebff00,#f2ff00,#f9ff00,#ff0,#fff800,#fff100,#ffeb00,#ffe500,#ffe000,#ffda00,#ffd500)"></i>
<i style="top:78px;left:0px;width:184px;height:2px;background:linear-gradient(90deg,#c5ff09,#cbff07,#d2ff06,#d8ff05,#dfff03,#e5ff02,#ecff00,#f3ff00,#f9ff00,#fffe00,#fff700,#fff100,#ffeb00,#ffe500,#ffdf00,#ffd900,#ffd400)"></i>
<i style="top:80px;left:0px;width:184px;height:2px;background:linear-gradient(90deg,#c6ff09,#ccff08,#d2ff06,#d9ff05,#dfff04,#e6ff02,#ecff01,#f3ff00,#faff00,#fffd00,#fff600,#fff000,#ffea00,#ffe400,#ffde00,#ffd900,#ffd400)"></i>
<i style="top:82px;left:0px;width:184px;height:2px;background:linear-gradient(90deg,#c6ff09,#cdff08,#d3ff07,#d9ff05,#e0ff04,#e6ff02,#edff01,#f4ff00,#fbff00,#fffc00,#fff600,#ffef00,#ffe900,#ffe300,#ffde00,#ffd800,#ffd300)"></i>
<i style="top:84px;left:0px;width:184px;height:2px;background:linear-gradient(90deg,#c7ff0a,#cdff08,#d4ff07,#daff06,#e1ff04,#e7ff03,#eeff01,#f5ff00,#fbff00,#fffc00,#fff500,#ffef00,#ffe900,#ffe300,#fd0,#ffd800,#ffd200)"></i>
<i style="top:86px;left:0px;width:184px;height:2px;background:linear-gradient(90deg,#c7ff0a,#ceff09,#d4ff07,#dbff06,#e1ff04,#e8ff03,#eeff02,#f5ff00,#fcff00,#fffb00,#fff400,#fe0,#ffe800,#ffe200,#fd0,#ffd700,#ffd200)"></i>
<i style="top:88px;left:0px;width:184px;height:2px;background:linear-gradient(90deg,#c8ff0a,#ceff09,#d5ff08,#dbff06,#e2ff05,#e8ff03,#efff02,#f6ff01,#fdff00,#fffa00,#fff400,#ffed00,#ffe700,#ffe200,#ffdc00,#ffd700,#ffd100)"></i>
<i style="top:90px;left:0px;width:184px;height:2px;background:linear-gradient(90deg,#c9ff0b,#cfff09,#d5ff08,#dcff06,#e2ff05,#e9ff04,#f0ff02,#f7ff01,#fdff00,#fffa00,#fff300,#ffed00,#ffe700,#ffe100,#ffdb00,#ffd600,#ffd100)"></i>
<i style="top:92px;left:0px;width:184px;height:2px;background:linear-gradient(90deg,#c9ff0b,#d0ff0a,#d6ff08,#dcff07,#e3ff05,#eaff04,#f0ff03,#f7ff01,#feff00,#fff900,#fff200,#ffec00,#ffe600,#ffe000,#ffdb00,#ffd500,#ffd000)"></i>
<i style="top:94px;left:0px;width:184px;height:2px;background:linear-gradient(90deg,#caff0b,#d0ff0a,#d7ff08,#ddff07,#e4ff06,#eaff04,#f1ff03,#f8ff01,#ff0,#fff800,#fff200,#ffec00,#ffe600,#ffe000,#ffda00,#ffd500,#ffd000)"></i>
<i style="top:96px;left:0px;width:184px;height:2px;background:linear-gradient(90deg,#caff0c,#d1ff0a,#d7ff09,#deff07,#e4ff06,#ebff05,#f2ff03,#f9ff02,#fffe00,#fff800,#fff100,#ffeb00,#ffe500,#ffdf00,#ffda00,#ffd400,#ffcf00)"></i>
<i style="top:98px;left:0px;width:184px;height:2px;background:linear-gradient(90deg,#cbff0c,#d1ff0a,#d8ff09,#deff08,#e5ff06,#ecff05,#f2ff04,#f9ff02,#fffe01,#fff700,#fff000,#ffea00,#ffe400,#ffdf00,#ffd900,#ffd400,#ffcf00)"></i>
<i style="top:100px;left:0px;width:184px;height:2px;background:linear-gradient(90deg,#ccff0c,#d2ff0b,#d8ff09,#dfff08,#e6ff07,#ecff05,#f3ff04,#faff02,#fffd01,#fff600,#fff000,#ffea00,#ffe400,#ffde00,#ffd800,#ffd300,#ffce00)"></i>
<i style="top:102px;left:0px;width:184px;height:2px;background:linear-gradient(90deg,#ccff0c,#d3ff0b,#d9ff0a,#e0ff08,#e6ff07,#edff06,#f4ff04,#fbff03,#fffc01,#fff600,#ffef00,#ffe900,#ffe300,#fd0,#ffd800,#ffd200,#ffcd00)"></i>
<i style="top:104px;left:0px;width:184px;height:2px;background:linear-gradient(90deg,#cdff0d,#d3ff0b,#daff0a,#e0ff09,#e7ff07,#eeff06,#f5ff04,#fbff03,#fffc02,#fff500,#fe0,#ffe800,#ffe200,#fd0,#ffd700,#ffd200,#ffcd00)"></i>
<i style="top:106px;left:0px;width:184px;height:2px;background:linear-gradient(90deg,#cdff0d,#d4ff0c,#daff0a,#e1ff09,#e8ff08,#eeff06,#f5ff05,#fcff03,#fffb02,#fff400,#fe0,#ffe800,#ffe200,#ffdc00,#ffd700,#ffd100,#fc0)"></i>
<i style="top:108px;left:0px;width:184px;height:2px;background:linear-gradient(90deg,#ceff0d,#d4ff0c,#dbff0b,#e2ff09,#e8ff08,#efff07,#f6ff05,#fdff04,#fffa02,#fff401,#ffed00,#ffe700,#ffe100,#ffdb00,#ffd600,#ffd100,#fc0)"></i>
<i style="top:110px;left:0px;width:184px;height:2px;background:linear-gradient(90deg,#cfff0e,#d5ff0c,#dcff0b,#e2ff0a,#e9ff08,#f0ff07,#f7ff05,#feff04,#fffa02,#fff301,#ffec00,#ffe600,#ffe100,#ffdb00,#ffd500,#ffd000,#ffcb00)"></i>
<i style="top:112px;left:0px;width:184px;height:2px;background:linear-gradient(90deg,#cfff0e,#d6ff0d,#dcff0b,#e3ff0a,#eaff09,#f0ff07,#f7ff06,#feff04,#fff903,#fff201,#ffec00,#ffe600,#ffe000,#ffda00,#ffd500,#ffd000,#ffcb00)"></i>
<i style="top:114px;left:0px;width:184px;height:2px;background:linear-gradient(90deg,#d0ff0e,#d6ff0d,#ddff0c,#e4ff0a,#eaff09,#f1ff07,#f8ff06,#ffff05,#fff803,#fff202,#ffeb00,#ffe500,#ffdf00,#ffda00,#ffd400,#ffcf00,#ffca00)"></i>
<i style="top:116px;left:0px;width:184px;height:2px;background:linear-gradient(90deg,#d0ff0f,#d7ff0d,#ddff0c,#e4ff0b,#ebff09,#f2ff08,#f9ff06,#fffe05,#fff703,#fff102,#ffeb00,#ffe400,#ffdf00,#ffd900,#ffd400,#ffce00,#ffc900)"></i>
<i style="top:118px;left:0px;width:184px;height:2px;background:linear-gradient(90deg,#d1ff0f,#d7ff0e,#deff0c,#e5ff0b,#ecff0a,#f2ff08,#f9ff07,#fffe05,#fff704,#fff002,#ffea01,#ffe400,#ffde00,#ffd800,#ffd300,#ffce00,#ffc900)"></i>
<i style="top:120px;left:0px;width:184px;height:2px;background:linear-gradient(90deg,#d2ff0f,#d8ff0e,#dfff0d,#e5ff0b,#ecff0a,#f3ff08,#faff07,#fffd06,#fff604,#fff002,#ffe901,#ffe300,#fd0,#ffd800,#ffd300,#ffcd00,#ffc800)"></i>
<i style="top:122px;left:0px;width:184px;height:2px;background:linear-gradient(90deg,#d2ff10,#d9ff0e,#dfff0d,#e6ff0c,#edff0a,#f4ff09,#fbff07,#fffc06,#fff504,#ffef03,#ffe901,#ffe300,#fd0,#ffd700,#ffd200,#ffcd00,#ffc800)"></i>
<i style="top:124px;left:0px;width:184px;height:2px;background:linear-gradient(90deg,#d3ff10,#d9ff0f,#e0ff0d,#e7ff0c,#eeff0b,#f5ff09,#fcff08,#fffb06,#fff505,#ffee03,#ffe802,#ffe200,#ffdc00,#ffd700,#ffd100,#fc0,#ffc700)"></i>
<i style="top:126px;left:0px;width:184px;height:2px;background:linear-gradient(90deg,#d3ff10,#daff0f,#e1ff0e,#e7ff0c,#eeff0b,#f5ff09,#fcff08,#fffb06,#fff405,#ffed03,#ffe702,#ffe101,#ffdc00,#ffd600,#ffd100,#fc0,#ffc700)"></i>
<i style="top:128px;left:0px;width:184px;height:2px;background:linear-gradient(90deg,#d4ff11,#dbff0f,#e1ff0e,#e8ff0d,#efff0b,#f6ff0a,#fdff08,#fffa07,#fff305,#ffed04,#ffe702,#ffe101,#ffdb00,#ffd500,#ffd000,#ffcb00,#ffc600)"></i>
<i style="top:130px;left:0px;width:184px;height:2px;background:linear-gradient(90deg,#d5ff11,#dbff10,#e2ff0e,#e9ff0d,#f0ff0c,#f7ff0a,#feff09,#fff907,#fff305,#ffec04,#ffe602,#ffe001,#ffda00,#ffd500,#ffd000,#ffcb00,#ffc600)"></i>
<i style="top:132px;left:0px;width:184px;height:2px;background:linear-gradient(90deg,#d5ff11,#dcff10,#e3ff0f,#e9ff0d,#f0ff0c,#f7ff0a,#feff09,#fff907,#fff206,#ffec04,#ffe503,#ffdf01,#ffda00,#ffd400,#ffcf00,#ffca00,#ffc500)"></i>
<i style="top:134px;left:0px;width:184px;height:2px;background:linear-gradient(90deg,#d6ff12,#ddff10,#e3ff0f,#eaff0e,#f1ff0c,#f8ff0b,#ffff09,#fff808,#fff106,#ffeb05,#ffe503,#ffdf02,#ffd900,#ffd400,#ffce00,#ffc900,#ffc500)"></i>
<i style="top:136px;left:0px;width:184px;height:2px;background:linear-gradient(90deg,#d7ff12,#df1,#e4ff0f,#ebff0e,#f2ff0d,#f9ff0b,#fffe0a,#fff708,#fff106,#ffea05,#ffe403,#ffde02,#ffd901,#ffd300,#ffce00,#ffc900,#ffc400)"></i>
<i style="top:138px;left:0px;width:184px;height:2px;background:linear-gradient(90deg,#d7ff12,#deff11,#e5ff10,#ecff0e,#f2ff0d,#f9ff0b,#fffd0a,#fff708,#fff007,#ffea05,#ffe304,#ffde02,#ffd801,#ffd300,#ffcd00,#ffc800,#ffc300)"></i>
<i style="top:140px;left:0px;width:184px;height:2px;background:linear-gradient(90deg,#d8ff13,#dfff11,#e5ff10,#ecff0f,#f3ff0d,#faff0c,#fffd0a,#fff609,#ffef07,#ffe905,#ffe304,#ffdd03,#ffd701,#ffd200,#ffcd00,#ffc800,#ffc300)"></i>
<i style="top:142px;left:0px;width:184px;height:2px;background:linear-gradient(90deg,#d8ff13,#dfff12,#e6ff10,#edff0f,#f4ff0e,#fbff0c,#fffc0b,#fff509,#ffef07,#ffe806,#ffe204,#ffdc03,#ffd701,#ffd100,#fc0,#ffc700,#ffc200)"></i>
<i style="top:144px;left:0px;width:184px;height:2px;background:linear-gradient(90deg,#d9ff13,#e0ff12,#e7ff11,#eeff0f,#f5ff0e,#fcff0c,#fffb0b,#fff409,#ffee08,#ffe806,#ffe205,#ffdc03,#ffd602,#ffd100,#fc0,#ffc700,#ffc200)"></i>
<i style="top:146px;left:0px;width:184px;height:2px;background:linear-gradient(90deg,#daff14,#e0ff12,#e7ff11,#eeff10,#f5ff0e,#fcff0d,#fffb0b,#fff409,#ffed08,#ffe706,#ffe105,#ffdb03,#ffd602,#ffd001,#ffcb00,#ffc600,#ffc100)"></i>
<i style="top:148px;left:0px;width:184px;height:2px;background:linear-gradient(90deg,#daff14,#e1ff13,#e8ff11,#efff10,#f6ff0f,#fdff0d,#fffa0b,#fff30a,#ffed08,#ffe607,#ffe005,#ffda04,#ffd502,#ffd001,#ffca00,#ffc600,#ffc100)"></i>
<i style="top:150px;left:0px;width:184px;height:2px;background:linear-gradient(90deg,#dbff14,#e2ff13,#e9ff12,#f0ff10,#f7ff0f,#feff0e,#fff90c,#fff20a,#ffec08,#ffe607,#ffe005,#ffda04,#ffd403,#ffcf01,#ffca00,#ffc500,#ffc000)"></i>
<i style="top:152px;left:0px;width:184px;height:2px;background:linear-gradient(90deg,#dcff15,#e2ff13,#e9ff12,#f0ff11,#f7ff0f,#ffff0e,#fff80c,#fff20a,#ffeb09,#ffe507,#ffdf06,#ffd904,#ffd403,#ffce01,#ffc900,#ffc400,#ffc000)"></i>
<i style="top:154px;left:0px;width:184px;height:2px;background:linear-gradient(90deg,#dcff15,#e3ff14,#eaff12,#f1ff11,#f8ff10,#ffff0e,#fff80c,#fff10b,#ffea09,#ffe407,#ffde06,#ffd904,#ffd303,#ffce02,#ffc900,#ffc400,#ffbf00)"></i>
<i style="top:156px;left:0px;width:184px;height:2px;background:linear-gradient(90deg,#ddff16,#e4ff14,#ebff13,#f2ff11,#f9ff10,#fffe0f,#fff70d,#fff00b,#ffea09,#ffe408,#ffde06,#ffd805,#ffd303,#ffcd02,#ffc801,#ffc300,#ffbf00)"></i>
<i style="top:158px;left:0px;width:184px;height:2px;background:linear-gradient(90deg,#deff16,#e4ff15,#ebff13,#f2ff12,#faff10,#fffd0f,#fff60d,#fff00b,#ffe90a,#ffe308,#ffdd07,#ffd705,#ffd204,#ffcd02,#ffc801,#ffc300,#ffbe00)"></i>
<i style="top:160px;left:0px;width:184px;height:2px;background:linear-gradient(90deg,#deff16,#e5ff15,#ecff13,#f3ff12,#faff11,#fffd0f,#fff60d,#ffef0c,#ffe90a,#ffe208,#ffdc07,#ffd705,#ffd104,#ffcc03,#ffc701,#ffc200,#ffbe00)"></i>
<i style="top:162px;left:0px;width:184px;height:2px;background:linear-gradient(90deg,#dfff17,#e6ff15,#edff14,#f4ff12,#fbff11,#fffc0f,#fff50e,#ffee0c,#ffe80a,#ffe209,#ffdc07,#ffd606,#ffd104,#ffcc03,#ffc702,#ffc200,#ffbd00)"></i>
<i style="top:164px;left:0px;width:184px;height:2px;background:linear-gradient(90deg,#e0ff17,#e6ff16,#edff14,#f5ff13,#fcff11,#fffb10,#fff40e,#ffee0c,#ffe70a,#ffe109,#ffdb07,#ffd606,#ffd004,#ffcb03,#ffc602,#ffc101,#ffbc00)"></i>
<i style="top:166px;left:0px;width:184px;height:2px;background:linear-gradient(90deg,#e0ff17,#e7ff16,#eeff15,#f5ff13,#fcff12,#fffa10,#fff30e,#ffed0c,#ffe70b,#ffe009,#ffdb08,#ffd506,#ffd005,#ffca03,#ffc502,#ffc101,#ffbc00)"></i>
<i style="top:168px;left:0px;width:184px;height:2px;background:linear-gradient(90deg,#e1ff18,#e8ff16,#efff15,#f6ff14,#fdff12,#fffa10,#fff30f,#ffec0d,#ffe60b,#ffe009,#ffda08,#ffd406,#ffcf05,#ffca04,#ffc502,#ffc001,#fb0)"></i>
<i style="top:170px;left:0px;width:184px;height:2px;background:linear-gradient(90deg,#e2ff18,#e9ff17,#f0ff15,#f7ff14,#feff12,#fff911,#fff20f,#ffeb0d,#ffe50b,#ffdf0a,#ffd908,#ffd407,#ffce05,#ffc904,#ffc403,#ffc001,#fb0)"></i>
<i style="top:172px;left:0px;width:184px;height:2px;background:linear-gradient(90deg,#e2ff18,#e9ff17,#f0ff16,#f7ff14,#ffff13,#fff811,#fff10f,#ffeb0d,#ffe50c,#ffdf0a,#ffd908,#ffd307,#ffce06,#ffc904,#ffc403,#ffbf02,#ffba00)"></i>
<i style="top:174px;left:0px;width:184px;height:2px;background:linear-gradient(90deg,#e3ff19,#eaff17,#f1ff16,#f8ff15,#ffff13,#fff711,#fff10f,#ffea0e,#ffe40c,#ffde0a,#ffd809,#ffd307,#ffcd06,#ffc804,#ffc303,#ffbe02,#ffba01)"></i>
<i style="top:176px;left:0px;width:184px;height:2px;background:linear-gradient(90deg,#e4ff19,#ebff18,#f2ff16,#f9ff15,#fffe13,#fff712,#fff010,#ffe90e,#ffe30c,#ffdd0b,#ffd809,#ffd208,#ffcd06,#ffc805,#ffc303,#ffbe02,#ffb901)"></i>
<i style="top:178px;left:0px;width:184px;height:2px;background:linear-gradient(90deg,#e4ff19,#ebff18,#f2ff17,#faff15,#fffd14,#fff612,#ffef10,#ffe90e,#ffe30d,#ffdd0b,#ffd709,#ffd108,#ffcc06,#ffc705,#ffc204,#ffbd02,#ffb901)"></i>
<i style="top:180px;left:0px;width:184px;height:2px;background:linear-gradient(90deg,#e5ff1a,#ecff18,#f3ff17,#faff16,#fffc14,#fff512,#ffef10,#ffe80f,#ffe20d,#ffdc0b,#ffd60a,#ffd108,#ffcc07,#ffc605,#ffc204,#ffbd03,#ffb801)"></i>
<i style="top:182px;left:0px;width:184px;height:2px;background:linear-gradient(90deg,#e6ff1a,#edff19,#f4ff17,#fbff16,#fffc14,#fff512,#fe1,#ffe70f,#ffe10d,#ffdb0b,#ffd60a,#ffd008,#ffcb07,#ffc606,#ffc104,#ffbc03,#ffb802)"></i>
<i style="top:184px;left:0px;width:184px;height:2px;background:linear-gradient(90deg,#e6ff1b,#edff19,#f5ff18,#fcff16,#fffb15,#fff413,#ffed11,#ffe70f,#ffe10d,#ffdb0c,#ffd50a,#ffd009,#ffca07,#ffc506,#ffc004,#ffbc03,#ffb702)"></i>
<i style="top:186px;left:0px;width:184px;height:2px;background:linear-gradient(90deg,#e7ff1b,#eeff1a,#f5ff18,#fdff17,#fffa15,#fff313,#ffed11,#ffe60f,#ffe00e,#ffda0c,#ffd40a,#ffcf09,#ffca07,#ffc506,#ffc005,#ffbb03,#ffb702)"></i>
<i style="top:188px;left:0px;width:184px;height:2px;background:linear-gradient(90deg,#e8ff1b,#efff1a,#f6ff19,#fdff17,#fff915,#fff213,#ffec11,#ffe510,#ffdf0e,#ffd90c,#ffd40b,#ffce09,#ffc908,#ffc406,#ffbf05,#ffbb04,#ffb602)"></i>
</div>
<svg width="1667" height="839" viewBox="0 0 1667 839"><defs>
<linearGradient id="gR" x1="0" y1="0" x2="0" y2="1"><stop offset="0" stop-color="#ff5a5a"/><stop offset=".17" stop-color="#ff1c1c"/><stop offset=".25" stop-color="#f00"/><stop offset=".5" stop-color="#f00"/><stop offset="1" stop-color="#700000"/></linearGradient>
<linearGradient id="gG" x1="0" y1="0" x2="0" y2="1"><stop offset="0" stop-color="#5fb05f"/><stop offset=".22" stop-color="#0a850a"/><stop offset=".3" stop-color="#008000"/><stop offset=".5" stop-color="#008000"/><stop offset="1" stop-color="#003400"/></linearGradient>
<linearGradient id="gB" x1="0" y1="0" x2="0" y2="1"><stop offset="0" stop-color="#2020e0"/><stop offset="1" stop-color="#0000c0"/></linearGradient>
<linearGradient id="gY" x1="0" y1="0" x2="0" y2="1"><stop offset="0" stop-color="#d8d85c"/><stop offset=".22" stop-color="#c8c614"/><stop offset=".3" stop-color="#c4c000"/><stop offset=".55" stop-color="#c2be00"/><stop offset="1" stop-color="#545000"/></linearGradient>
<linearGradient id="gTop" x1="0" y1="0" x2="0" y2="1"><stop offset="0" stop-color="#2a2a2a"/><stop offset="1" stop-color="#333"/></linearGradient>
</defs><rect x="0" y="0" width="1667" height="1.6" fill="url(#gTop)"/><rect x="1665.6" y="0" width="1.4" height="839" fill="#2b2b2b"/><text x="22" y="59.4" font-size="40" textLength="325" lengthAdjust="spacingAndGlyphs" fill="#f0f0f0">Saturation Sweeps</text><rect x="44.6" y="132.3" width="253.7" height="459.7" fill="#252525"/><path d="M44.6 547.3H298.3" stroke="#939393" stroke-width="1.25"/><path d="M44.6 501.25H298.3" stroke="#939393" stroke-width="1.25"/><path d="M44.6 455.2H298.3" stroke="#939393" stroke-width="1.25"/><path d="M44.6 409.15H298.3" stroke="#939393" stroke-width="1.25"/><path d="M44.6 363.1H298.3" stroke="#939393" stroke-width="1.25"/><path d="M44.6 317.05H298.3" stroke="#939393" stroke-width="1.25"/><path d="M44.6 271H298.3" stroke="#939393" stroke-width="1.25"/><path d="M44.6 224.95H298.3" stroke="#939393" stroke-width="1.25"/><path d="M44.6 178.9H298.3" stroke="#939393" stroke-width="1.25"/><rect x="71" y="362.3" width="66.4" height="193.1" fill="url(#gR)" stroke="#000" stroke-width="1.5"/><rect x="139.2" y="362.3" width="66.3" height="152.3" fill="url(#gG)" stroke="#000" stroke-width="1.5"/><rect x="207" y="358.8" width="66.2" height="3.5" fill="url(#gB)" stroke="#000" stroke-width="1.5"/><path d="M44.6 132.3V592H298.3V132.3Z" fill="none" stroke="#a6a6a6" stroke-width="1.25"/><path d="M44.6 132.2H298.3" stroke="#a6a6a6" stroke-width="1.9"/><path d="M44.6 591.8H298.3" stroke="#9c9c9c" stroke-width="2.1"/><path d="M39.3 592.3H44.6" stroke="#d8d8d8" stroke-width="1.3"/><text transform="translate(38.8 599.1) scale(.94 1)" font-size="16" text-anchor="end">-50</text><path d="M39.3 547.3H44.6" stroke="#d8d8d8" stroke-width="1.3"/><text transform="translate(38.8 553) scale(.94 1)" font-size="16" text-anchor="end">-40</text><path d="M39.3 501.25H44.6" stroke="#d8d8d8" stroke-width="1.3"/><text transform="translate(38.8 506.95) scale(.94 1)" font-size="16" text-anchor="end">-30</text><path d="M39.3 455.2H44.6" stroke="#d8d8d8" stroke-width="1.3"/><text transform="translate(38.8 460.9) scale(.94 1)" font-size="16" text-anchor="end">-20</text><path d="M39.3 409.15H44.6" stroke="#d8d8d8" stroke-width="1.3"/><text transform="translate(38.8 414.85) scale(.94 1)" font-size="16" text-anchor="end">-10</text><path d="M39.3 363.1H44.6" stroke="#d8d8d8" stroke-width="1.3"/><text transform="translate(38.8 368.8) scale(.94 1)" font-size="16" text-anchor="end">0</text><path d="M39.3 317.05H44.6" stroke="#d8d8d8" stroke-width="1.3"/><text transform="translate(38.8 322.75) scale(.94 1)" font-size="16" text-anchor="end">10</text><path d="M39.3 271H44.6" stroke="#d8d8d8" stroke-width="1.3"/><text transform="translate(38.8 276.7) scale(.94 1)" font-size="16" text-anchor="end">20</text><path d="M39.3 224.95H44.6" stroke="#d8d8d8" stroke-width="1.3"/><text transform="translate(38.8 230.65) scale(.94 1)" font-size="16" text-anchor="end">30</text><path d="M39.3 178.9H44.6" stroke="#d8d8d8" stroke-width="1.3"/><text transform="translate(38.8 184.6) scale(.94 1)" font-size="16" text-anchor="end">40</text><path d="M39.3 132.6H44.6" stroke="#d8d8d8" stroke-width="1.3"/><text transform="translate(38.8 138.3) scale(.94 1)" font-size="16" text-anchor="end">50</text><path d="M44.6 592V598M298.3 592V598" stroke="#d8d8d8" stroke-width="1.3"/><text x="158" y="125.8" font-size="16" text-anchor="middle" textLength="82.5" lengthAdjust="spacingAndGlyphs">RGB Balance</text><text x="171.3" y="609.1" font-size="16" text-anchor="middle" textLength="35.4" lengthAdjust="spacingAndGlyphs">100%</text><text x="12" y="650.9" font-size="31" textLength="219" lengthAdjust="spacingAndGlyphs" fill="#f0f0f0">Current Reading</text><text x="12" y="694.5" font-size="25.5" textLength="103" lengthAdjust="spacingAndGlyphs" fill="#f0f0f0">x: 0,4108</text><text x="12" y="737" font-size="25.5" textLength="103" lengthAdjust="spacingAndGlyphs" fill="#f0f0f0">y: 0,5117</text><text x="12" y="779.5" font-size="25.5" textLength="110" lengthAdjust="spacingAndGlyphs" fill="#f0f0f0">fL: 26,625</text><text x="12" y="822" font-size="25.5" textLength="159.5" lengthAdjust="spacingAndGlyphs" fill="#f0f0f0">cd/m²: 91,226</text><rect x="398.7" y="47" width="138.2" height="278.3" fill="#252525"/><path d="M398.7 95.05H536.9" stroke="#939393" stroke-width="1.2"/><path d="M398.7 141.3H536.9" stroke="#939393" stroke-width="1.2"/><path d="M398.7 187.55H536.9" stroke="#939393" stroke-width="1.2"/><path d="M398.7 233.8H536.9" stroke="#939393" stroke-width="1.2"/><path d="M398.7 280.05H536.9" stroke="#939393" stroke-width="1.2"/><path d="M398.7 48.6H536.9" stroke="#939393" stroke-width="1.2"/><rect x="413" y="186.2" width="109" height="107.4" fill="url(#gY)" stroke="#000" stroke-width="1.5"/><path d="M397.9 92.6H537.7" stroke="#f00" stroke-width="1.35"/><path d="M397.9 279.2H537.7" stroke="#f00" stroke-width="1.35"/><path d="M397.9 139.25H537.7" stroke="#eaea00" stroke-width="1.8"/><path d="M397.9 232.55H537.7" stroke="#eaea00" stroke-width="1.8"/><path d="M397.9 157.91H537.7" stroke="#008200" stroke-width="1.4"/><path d="M397.9 213.89H537.7" stroke="#008200" stroke-width="1.4"/><path d="M398.7 46.7V325.3H536.9V46.7Z" fill="none" stroke="#a6a6a6" stroke-width="1.25"/><path d="M392.7 48.4H398.7" stroke="#d8d8d8" stroke-width="1.3"/><text transform="translate(393.1 54.3) scale(.94 1)" font-size="16" text-anchor="end">15</text><path d="M392.7 94.65H398.7" stroke="#d8d8d8" stroke-width="1.3"/><text transform="translate(393.1 100.55) scale(.94 1)" font-size="16" text-anchor="end">10</text><path d="M392.7 140.9H398.7" stroke="#d8d8d8" stroke-width="1.3"/><text transform="translate(393.1 146.8) scale(.94 1)" font-size="16" text-anchor="end">5</text><path d="M392.7 187.15H398.7" stroke="#d8d8d8" stroke-width="1.3"/><text transform="translate(393.1 193.05) scale(.94 1)" font-size="16" text-anchor="end">0</text><path d="M392.7 233.4H398.7" stroke="#d8d8d8" stroke-width="1.3"/><text transform="translate(393.1 239.3) scale(.94 1)" font-size="16" text-anchor="end">-5</text><path d="M392.7 279.65H398.7" stroke="#d8d8d8" stroke-width="1.3"/><text transform="translate(393.1 285.55) scale(.94 1)" font-size="16" text-anchor="end">-10</text><path d="M392.7 325.3H398.7" stroke="#d8d8d8" stroke-width="1.3"/><text transform="translate(393.1 332.4) scale(.94 1)" font-size="16" text-anchor="end">-15</text><path d="M398.7 325.3V331.3M536.9 325.3V331.3" stroke="#d8d8d8" stroke-width="1.3"/><text x="454.9" y="42.5" font-size="16" text-anchor="middle" textLength="41.5" lengthAdjust="spacingAndGlyphs">DeltaL</text><text x="468.4" y="342.3" font-size="16" text-anchor="middle" textLength="34" lengthAdjust="spacingAndGlyphs">100%</text><rect x="589.4" y="47" width="138.2" height="278.3" fill="#252525"/><path d="M589.4 95.05H727.6" stroke="#939393" stroke-width="1.2"/><path d="M589.4 141.3H727.6" stroke="#939393" stroke-width="1.2"/><path d="M589.4 187.55H727.6" stroke="#939393" stroke-width="1.2"/><path d="M589.4 233.8H727.6" stroke="#939393" stroke-width="1.2"/><path d="M589.4 280.05H727.6" stroke="#939393" stroke-width="1.2"/><path d="M589.4 48.6H727.6" stroke="#939393" stroke-width="1.2"/><rect x="603.7" y="181.3" width="109" height="5.5" fill="url(#gY)" stroke="#000" stroke-width="1.5"/><path d="M588.6 92.6H728.4" stroke="#f00" stroke-width="1.35"/><path d="M588.6 279.2H728.4" stroke="#f00" stroke-width="1.35"/><path d="M588.6 139.25H728.4" stroke="#eaea00" stroke-width="1.8"/><path d="M588.6 232.55H728.4" stroke="#eaea00" stroke-width="1.8"/><path d="M588.6 157.91H728.4" stroke="#008200" stroke-width="1.4"/><path d="M588.6 213.89H728.4" stroke="#008200" stroke-width="1.4"/><path d="M589.4 46.7V325.3H727.6V46.7Z" fill="none" stroke="#a6a6a6" stroke-width="1.25"/><path d="M583.4 48.4H589.4" stroke="#d8d8d8" stroke-width="1.3"/><text transform="translate(583.8 54.3) scale(.94 1)" font-size="16" text-anchor="end">15</text><path d="M583.4 94.65H589.4" stroke="#d8d8d8" stroke-width="1.3"/><text transform="translate(583.8 100.55) scale(.94 1)" font-size="16" text-anchor="end">10</text><path d="M583.4 140.9H589.4" stroke="#d8d8d8" stroke-width="1.3"/><text transform="translate(583.8 146.8) scale(.94 1)" font-size="16" text-anchor="end">5</text><path d="M583.4 187.15H589.4" stroke="#d8d8d8" stroke-width="1.3"/><text transform="translate(583.8 193.05) scale(.94 1)" font-size="16" text-anchor="end">0</text><path d="M583.4 233.4H589.4" stroke="#d8d8d8" stroke-width="1.3"/><text transform="translate(583.8 239.3) scale(.94 1)" font-size="16" text-anchor="end">-5</text><path d="M583.4 279.65H589.4" stroke="#d8d8d8" stroke-width="1.3"/><text transform="translate(583.8 285.55) scale(.94 1)" font-size="16" text-anchor="end">-10</text><path d="M583.4 325.3H589.4" stroke="#d8d8d8" stroke-width="1.3"/><text transform="translate(583.8 332.4) scale(.94 1)" font-size="16" text-anchor="end">-15</text><path d="M589.4 325.3V331.3M727.6 325.3V331.3" stroke="#d8d8d8" stroke-width="1.3"/><text x="645.6" y="42.5" font-size="16" text-anchor="middle" textLength="43.2" lengthAdjust="spacingAndGlyphs">DeltaC</text><text x="659.1" y="342.3" font-size="16" text-anchor="middle" textLength="34" lengthAdjust="spacingAndGlyphs">100%</text><rect x="779.9" y="47" width="138.2" height="278.3" fill="#252525"/><path d="M779.9 95.05H918.1" stroke="#939393" stroke-width="1.2"/><path d="M779.9 141.3H918.1" stroke="#939393" stroke-width="1.2"/><path d="M779.9 187.55H918.1" stroke="#939393" stroke-width="1.2"/><path d="M779.9 233.8H918.1" stroke="#939393" stroke-width="1.2"/><path d="M779.9 280.05H918.1" stroke="#939393" stroke-width="1.2"/><path d="M779.9 48.6H918.1" stroke="#939393" stroke-width="1.2"/><rect x="794.2" y="153.8" width="109" height="33" fill="url(#gY)" stroke="#000" stroke-width="1.5"/><path d="M779.1 92.6H918.9" stroke="#f00" stroke-width="1.35"/><path d="M779.1 279.2H918.9" stroke="#f00" stroke-width="1.35"/><path d="M779.1 139.25H918.9" stroke="#eaea00" stroke-width="1.8"/><path d="M779.1 232.55H918.9" stroke="#eaea00" stroke-width="1.8"/><path d="M779.1 157.91H918.9" stroke="#008200" stroke-width="1.4"/><path d="M779.1 213.89H918.9" stroke="#008200" stroke-width="1.4"/><path d="M779.9 46.7V325.3H918.1V46.7Z" fill="none" stroke="#a6a6a6" stroke-width="1.25"/><path d="M773.9 48.4H779.9" stroke="#d8d8d8" stroke-width="1.3"/><text transform="translate(774.3 54.3) scale(.94 1)" font-size="16" text-anchor="end">15</text><path d="M773.9 94.65H779.9" stroke="#d8d8d8" stroke-width="1.3"/><text transform="translate(774.3 100.55) scale(.94 1)" font-size="16" text-anchor="end">10</text><path d="M773.9 140.9H779.9" stroke="#d8d8d8" stroke-width="1.3"/><text transform="translate(774.3 146.8) scale(.94 1)" font-size="16" text-anchor="end">5</text><path d="M773.9 187.15H779.9" stroke="#d8d8d8" stroke-width="1.3"/><text transform="translate(774.3 193.05) scale(.94 1)" font-size="16" text-anchor="end">0</text><path d="M773.9 233.4H779.9" stroke="#d8d8d8" stroke-width="1.3"/><text transform="translate(774.3 239.3) scale(.94 1)" font-size="16" text-anchor="end">-5</text><path d="M773.9 279.65H779.9" stroke="#d8d8d8" stroke-width="1.3"/><text transform="translate(774.3 285.55) scale(.94 1)" font-size="16" text-anchor="end">-10</text><path d="M773.9 325.3H779.9" stroke="#d8d8d8" stroke-width="1.3"/><text transform="translate(774.3 332.4) scale(.94 1)" font-size="16" text-anchor="end">-15</text><path d="M779.9 325.3V331.3M918.1 325.3V331.3" stroke="#d8d8d8" stroke-width="1.3"/><text x="836.1" y="42.5" font-size="16" text-anchor="middle" textLength="43.4" lengthAdjust="spacingAndGlyphs">DeltaH</text><text x="849.6" y="342.3" font-size="16" text-anchor="middle" textLength="34" lengthAdjust="spacingAndGlyphs">100%</text><rect x="332" y="359" width="619" height="167" fill="#000"/><rect x="353.5" y="366.5" width="103" height="60" fill="#9aa5b3" stroke="#fff" stroke-width="1" shape-rendering="crispEdges"/><rect x="354.5" y="367.5" width="101" height="58" fill="none" stroke="#000" stroke-opacity=".22" stroke-width="1" shape-rendering="crispEdges"/><rect x="353.5" y="443.5" width="103" height="59" fill="#bfbfa5" stroke="#fff" stroke-width="1" shape-rendering="crispEdges"/><rect x="354.5" y="444.5" width="101" height="57" fill="none" stroke="#000" stroke-opacity=".22" stroke-width="1" shape-rendering="crispEdges"/><text x="405" y="519.2" font-size="12.5" text-anchor="middle" font-weight="bold" textLength="23.5" lengthAdjust="spacingAndGlyphs" fill="#fff">20%</text><rect x="474.5" y="366.5" width="103" height="60" fill="#99a48f" stroke="#fff" stroke-width="1" shape-rendering="crispEdges"/><rect x="475.5" y="367.5" width="101" height="58" fill="none" stroke="#000" stroke-opacity=".22" stroke-width="1" shape-rendering="crispEdges"/><rect x="474.5" y="443.5" width="103" height="59" fill="#bfbf85" stroke="#fff" stroke-width="1" shape-rendering="crispEdges"/><rect x="475.5" y="444.5" width="101" height="57" fill="none" stroke="#000" stroke-opacity=".22" stroke-width="1" shape-rendering="crispEdges"/><text x="526" y="519.2" font-size="12.5" text-anchor="middle" font-weight="bold" textLength="23.5" lengthAdjust="spacingAndGlyphs" fill="#fff">40%</text><rect x="595.5" y="366.5" width="103" height="60" fill="#99a36f" stroke="#fff" stroke-width="1" shape-rendering="crispEdges"/><rect x="596.5" y="367.5" width="101" height="58" fill="none" stroke="#000" stroke-opacity=".22" stroke-width="1" shape-rendering="crispEdges"/><rect x="595.5" y="443.5" width="103" height="59" fill="#bfbf69" stroke="#fff" stroke-width="1" shape-rendering="crispEdges"/><rect x="596.5" y="444.5" width="101" height="57" fill="none" stroke="#000" stroke-opacity=".22" stroke-width="1" shape-rendering="crispEdges"/><text x="647" y="519.2" font-size="12.5" text-anchor="middle" font-weight="bold" textLength="23.5" lengthAdjust="spacingAndGlyphs" fill="#fff">60%</text><rect x="716.5" y="366.5" width="103" height="60" fill="#99a04f" stroke="#fff" stroke-width="1" shape-rendering="crispEdges"/><rect x="717.5" y="367.5" width="101" height="58" fill="none" stroke="#000" stroke-opacity=".22" stroke-width="1" shape-rendering="crispEdges"/><rect x="716.5" y="443.5" width="103" height="59" fill="#bfbf48" stroke="#fff" stroke-width="1" shape-rendering="crispEdges"/><rect x="717.5" y="444.5" width="101" height="57" fill="none" stroke="#000" stroke-opacity=".22" stroke-width="1" shape-rendering="crispEdges"/><text x="768" y="519.2" font-size="12.5" text-anchor="middle" font-weight="bold" textLength="23.5" lengthAdjust="spacingAndGlyphs" fill="#fff">80%</text><rect x="837.5" y="366.5" width="104" height="60" fill="#989f00" stroke="#fff" stroke-width="1" shape-rendering="crispEdges"/><rect x="838.5" y="367.5" width="102" height="58" fill="none" stroke="#000" stroke-opacity=".22" stroke-width="1" shape-rendering="crispEdges"/><rect x="837.5" y="443.5" width="104" height="59" fill="#bfbf00" stroke="#fff" stroke-width="1" shape-rendering="crispEdges"/><rect x="838.5" y="444.5" width="102" height="57" fill="none" stroke="#000" stroke-opacity=".22" stroke-width="1" shape-rendering="crispEdges"/><text x="889.5" y="519.2" font-size="12.5" text-anchor="middle" font-weight="bold" textLength="30.5" lengthAdjust="spacingAndGlyphs" fill="#fff">100%</text><text transform="translate(343.9 396.5) rotate(-90)" font-size="13" font-weight="bold" fill="#fff" text-anchor="middle" textLength="36" lengthAdjust="spacingAndGlyphs">Actual</text><text transform="translate(343.9 473.2) rotate(-90)" font-size="13" font-weight="bold" fill="#fff" text-anchor="middle" textLength="36" lengthAdjust="spacingAndGlyphs">Target</text><rect x="346.6" y="560.4" width="604.8" height="256.8" fill="#252525"/><path d="M346.6 766.2H951.4" stroke="#939393" stroke-width="1.5"/><path d="M346.6 715H951.4" stroke="#939393" stroke-width="1.5"/><path d="M346.6 663.8H951.4" stroke="#939393" stroke-width="1.5"/><path d="M346.6 612.6H951.4" stroke="#939393" stroke-width="1.5"/><path d="M346.6 562H951.4" stroke="#939393" stroke-width="1.2"/><rect x="457.85" y="627.846" width="9.5" height="189.354" fill="url(#b10)" stroke="#000" stroke-width="1.4"/><rect x="468.78" y="647.404" width="9.5" height="169.796" fill="url(#b11)" stroke="#000" stroke-width="1.4"/><rect x="479.71" y="680.786" width="9.5" height="136.414" fill="url(#b12)" stroke="#000" stroke-width="1.4"/><rect x="490.64" y="632.863" width="9.5" height="184.337" fill="url(#b13)" stroke="#000" stroke-width="1.4"/><rect x="501.57" y="659.59" width="9.5" height="157.61" fill="url(#b14)" stroke="#000" stroke-width="1.4"/><rect x="512.5" y="607.673" width="9.5" height="209.527" fill="url(#b15)" stroke="#000" stroke-width="1.4"/><rect x="558.65" y="653.343" width="9.5" height="163.857" fill="url(#b20)" stroke="#000" stroke-width="1.4"/><rect x="569.58" y="700.038" width="9.5" height="117.162" fill="url(#b21)" stroke="#000" stroke-width="1.4"/><rect x="580.51" y="709.97" width="9.5" height="107.23" fill="url(#b22)" stroke="#000" stroke-width="1.4"/><rect x="591.44" y="637.778" width="9.5" height="179.422" fill="url(#b23)" stroke="#000" stroke-width="1.4"/><rect x="602.37" y="677.202" width="9.5" height="139.998" fill="url(#b24)" stroke="#000" stroke-width="1.4"/><rect x="613.3" y="686.009" width="9.5" height="131.191" fill="url(#b25)" stroke="#000" stroke-width="1.4"/><rect x="659.45" y="684.268" width="9.5" height="132.932" fill="url(#b30)" stroke="#000" stroke-width="1.4"/><rect x="670.38" y="717.036" width="9.5" height="100.164" fill="url(#b31)" stroke="#000" stroke-width="1.4"/><rect x="681.31" y="754.105" width="9.5" height="63.0952" fill="url(#b32)" stroke="#000" stroke-width="1.4"/><rect x="692.24" y="641.874" width="9.5" height="175.326" fill="url(#b33)" stroke="#000" stroke-width="1.4"/><rect x="703.17" y="695.02" width="9.5" height="122.18" fill="url(#b34)" stroke="#000" stroke-width="1.4"/><rect x="714.1" y="705.26" width="9.5" height="111.94" fill="url(#b35)" stroke="#000" stroke-width="1.4"/><rect x="760.25" y="704.953" width="9.5" height="112.247" fill="url(#b40)" stroke="#000" stroke-width="1.4"/><rect x="771.18" y="723.59" width="9.5" height="93.6104" fill="url(#b41)" stroke="#000" stroke-width="1.4"/><rect x="782.11" y="787.999" width="9.5" height="29.2008" fill="url(#b42)" stroke="#000" stroke-width="1.4"/><rect x="793.04" y="641.874" width="9.5" height="175.326" fill="url(#b43)" stroke="#000" stroke-width="1.4"/><rect x="803.97" y="712.94" width="9.5" height="104.26" fill="url(#b44)" stroke="#000" stroke-width="1.4"/><rect x="814.9" y="714.783" width="9.5" height="102.417" fill="url(#b45)" stroke="#000" stroke-width="1.4"/><rect x="861.05" y="718.162" width="9.5" height="99.0376" fill="url(#b50)" stroke="#000" stroke-width="1.4"/><rect x="871.98" y="726.15" width="9.5" height="91.0504" fill="url(#b51)" stroke="#000" stroke-width="1.4"/><rect x="882.91" y="740.076" width="9.5" height="77.124" fill="url(#b52)" stroke="#000" stroke-width="1.4"/><rect x="893.84" y="644.537" width="9.5" height="172.663" fill="url(#b53)" stroke="#000" stroke-width="1.4"/><rect x="904.77" y="725.33" width="9.5" height="91.8696" fill="url(#b54)" stroke="#000" stroke-width="1.4"/><rect x="915.7" y="720.62" width="9.5" height="96.58" fill="url(#b55)" stroke="#000" stroke-width="1.4"/><rect x="420.9" y="771.87" width="9.4" height="45.33" fill="url(#bW)" stroke="#000" stroke-width="1.5"/><defs><linearGradient id="b10" x1="0" y1="0" x2="0" y2="1"><stop offset="0" stop-color="rgb(217,182,182)"/><stop offset=".22" stop-color="rgb(191,130,130)"/><stop offset=".5" stop-color="rgb(191,130,130)"/><stop offset="1" stop-color="rgb(80,54,54)"/></linearGradient><linearGradient id="b11" x1="0" y1="0" x2="0" y2="1"><stop offset="0" stop-color="rgb(189,217,189)"/><stop offset=".22" stop-color="rgb(142,191,142)"/><stop offset=".5" stop-color="rgb(142,191,142)"/><stop offset="1" stop-color="rgb(59,80,59)"/></linearGradient><linearGradient id="b12" x1="0" y1="0" x2="0" y2="1"><stop offset="0" stop-color="rgb(189,189,217)"/><stop offset=".22" stop-color="rgb(142,142,191)"/><stop offset=".5" stop-color="rgb(142,142,191)"/><stop offset="1" stop-color="rgb(59,59,80)"/></linearGradient><linearGradient id="b13" x1="0" y1="0" x2="0" y2="1"><stop offset="0" stop-color="rgb(189,217,217)"/><stop offset=".22" stop-color="rgb(142,191,191)"/><stop offset=".5" stop-color="rgb(142,191,191)"/><stop offset="1" stop-color="rgb(59,80,80)"/></linearGradient><linearGradient id="b14" x1="0" y1="0" x2="0" y2="1"><stop offset="0" stop-color="rgb(217,189,217)"/><stop offset=".22" stop-color="rgb(191,142,191)"/><stop offset=".5" stop-color="rgb(191,142,191)"/><stop offset="1" stop-color="rgb(80,59,80)"/></linearGradient><linearGradient id="b15" x1="0" y1="0" x2="0" y2="1"><stop offset="0" stop-color="rgb(217,217,189)"/><stop offset=".22" stop-color="rgb(191,191,142)"/><stop offset=".5" stop-color="rgb(191,191,142)"/><stop offset="1" stop-color="rgb(80,80,59)"/></linearGradient><linearGradient id="b20" x1="0" y1="0" x2="0" y2="1"><stop offset="0" stop-color="rgb(217,167,167)"/><stop offset=".22" stop-color="rgb(191,104,104)"/><stop offset=".5" stop-color="rgb(191,104,104)"/><stop offset="1" stop-color="rgb(80,43,43)"/></linearGradient><linearGradient id="b21" x1="0" y1="0" x2="0" y2="1"><stop offset="0" stop-color="rgb(174,217,174)"/><stop offset=".22" stop-color="rgb(116,191,116)"/><stop offset=".5" stop-color="rgb(116,191,116)"/><stop offset="1" stop-color="rgb(48,80,48)"/></linearGradient><linearGradient id="b22" x1="0" y1="0" x2="0" y2="1"><stop offset="0" stop-color="rgb(174,174,217)"/><stop offset=".22" stop-color="rgb(116,116,191)"/><stop offset=".5" stop-color="rgb(116,116,191)"/><stop offset="1" stop-color="rgb(48,48,80)"/></linearGradient><linearGradient id="b23" x1="0" y1="0" x2="0" y2="1"><stop offset="0" stop-color="rgb(174,217,217)"/><stop offset=".22" stop-color="rgb(116,191,191)"/><stop offset=".5" stop-color="rgb(116,191,191)"/><stop offset="1" stop-color="rgb(48,80,80)"/></linearGradient><linearGradient id="b24" x1="0" y1="0" x2="0" y2="1"><stop offset="0" stop-color="rgb(217,174,217)"/><stop offset=".22" stop-color="rgb(191,116,191)"/><stop offset=".5" stop-color="rgb(191,116,191)"/><stop offset="1" stop-color="rgb(80,48,80)"/></linearGradient><linearGradient id="b25" x1="0" y1="0" x2="0" y2="1"><stop offset="0" stop-color="rgb(217,217,174)"/><stop offset=".22" stop-color="rgb(191,191,116)"/><stop offset=".5" stop-color="rgb(191,191,116)"/><stop offset="1" stop-color="rgb(80,80,48)"/></linearGradient><linearGradient id="b30" x1="0" y1="0" x2="0" y2="1"><stop offset="0" stop-color="rgb(217,152,152)"/><stop offset=".22" stop-color="rgb(191,78,78)"/><stop offset=".5" stop-color="rgb(191,78,78)"/><stop offset="1" stop-color="rgb(80,32,32)"/></linearGradient><linearGradient id="b31" x1="0" y1="0" x2="0" y2="1"><stop offset="0" stop-color="rgb(159,217,159)"/><stop offset=".22" stop-color="rgb(90,191,90)"/><stop offset=".5" stop-color="rgb(90,191,90)"/><stop offset="1" stop-color="rgb(37,80,37)"/></linearGradient><linearGradient id="b32" x1="0" y1="0" x2="0" y2="1"><stop offset="0" stop-color="rgb(159,159,217)"/><stop offset=".22" stop-color="rgb(90,90,191)"/><stop offset=".5" stop-color="rgb(90,90,191)"/><stop offset="1" stop-color="rgb(37,37,80)"/></linearGradient><linearGradient id="b33" x1="0" y1="0" x2="0" y2="1"><stop offset="0" stop-color="rgb(159,217,217)"/><stop offset=".22" stop-color="rgb(90,191,191)"/><stop offset=".5" stop-color="rgb(90,191,191)"/><stop offset="1" stop-color="rgb(37,80,80)"/></linearGradient><linearGradient id="b34" x1="0" y1="0" x2="0" y2="1"><stop offset="0" stop-color="rgb(217,159,217)"/><stop offset=".22" stop-color="rgb(191,90,191)"/><stop offset=".5" stop-color="rgb(191,90,191)"/><stop offset="1" stop-color="rgb(80,37,80)"/></linearGradient><linearGradient id="b35" x1="0" y1="0" x2="0" y2="1"><stop offset="0" stop-color="rgb(217,217,159)"/><stop offset=".22" stop-color="rgb(191,191,90)"/><stop offset=".5" stop-color="rgb(191,191,90)"/><stop offset="1" stop-color="rgb(80,80,37)"/></linearGradient><linearGradient id="b40" x1="0" y1="0" x2="0" y2="1"><stop offset="0" stop-color="rgb(217,134,134)"/><stop offset=".22" stop-color="rgb(191,48,48)"/><stop offset=".5" stop-color="rgb(191,48,48)"/><stop offset="1" stop-color="rgb(80,20,20)"/></linearGradient><linearGradient id="b41" x1="0" y1="0" x2="0" y2="1"><stop offset="0" stop-color="rgb(141,217,141)"/><stop offset=".22" stop-color="rgb(60,191,60)"/><stop offset=".5" stop-color="rgb(60,191,60)"/><stop offset="1" stop-color="rgb(25,80,25)"/></linearGradient><linearGradient id="b42" x1="0" y1="0" x2="0" y2="1"><stop offset="0" stop-color="rgb(141,141,217)"/><stop offset=".22" stop-color="rgb(60,60,191)"/><stop offset=".5" stop-color="rgb(60,60,191)"/><stop offset="1" stop-color="rgb(25,25,80)"/></linearGradient><linearGradient id="b43" x1="0" y1="0" x2="0" y2="1"><stop offset="0" stop-color="rgb(141,217,217)"/><stop offset=".22" stop-color="rgb(60,191,191)"/><stop offset=".5" stop-color="rgb(60,191,191)"/><stop offset="1" stop-color="rgb(25,80,80)"/></linearGradient><linearGradient id="b44" x1="0" y1="0" x2="0" y2="1"><stop offset="0" stop-color="rgb(217,141,217)"/><stop offset=".22" stop-color="rgb(191,60,191)"/><stop offset=".5" stop-color="rgb(191,60,191)"/><stop offset="1" stop-color="rgb(80,25,80)"/></linearGradient><linearGradient id="b45" x1="0" y1="0" x2="0" y2="1"><stop offset="0" stop-color="rgb(217,217,141)"/><stop offset=".22" stop-color="rgb(191,191,60)"/><stop offset=".5" stop-color="rgb(191,191,60)"/><stop offset="1" stop-color="rgb(80,80,25)"/></linearGradient><linearGradient id="b50" x1="0" y1="0" x2="0" y2="1"><stop offset="0" stop-color="rgb(217,107,107)"/><stop offset=".22" stop-color="rgb(191,0,0)"/><stop offset=".5" stop-color="rgb(191,0,0)"/><stop offset="1" stop-color="rgb(80,0,0)"/></linearGradient><linearGradient id="b51" x1="0" y1="0" x2="0" y2="1"><stop offset="0" stop-color="rgb(111,217,111)"/><stop offset=".22" stop-color="rgb(8,191,8)"/><stop offset=".5" stop-color="rgb(8,191,8)"/><stop offset="1" stop-color="rgb(3,80,3)"/></linearGradient><linearGradient id="b52" x1="0" y1="0" x2="0" y2="1"><stop offset="0" stop-color="rgb(111,111,217)"/><stop offset=".22" stop-color="rgb(8,8,191)"/><stop offset=".5" stop-color="rgb(8,8,191)"/><stop offset="1" stop-color="rgb(3,3,80)"/></linearGradient><linearGradient id="b53" x1="0" y1="0" x2="0" y2="1"><stop offset="0" stop-color="rgb(111,217,217)"/><stop offset=".22" stop-color="rgb(8,191,191)"/><stop offset=".5" stop-color="rgb(8,191,191)"/><stop offset="1" stop-color="rgb(3,80,80)"/></linearGradient><linearGradient id="b54" x1="0" y1="0" x2="0" y2="1"><stop offset="0" stop-color="rgb(217,111,217)"/><stop offset=".22" stop-color="rgb(191,8,191)"/><stop offset=".5" stop-color="rgb(191,8,191)"/><stop offset="1" stop-color="rgb(80,3,80)"/></linearGradient><linearGradient id="b55" x1="0" y1="0" x2="0" y2="1"><stop offset="0" stop-color="rgb(217,217,111)"/><stop offset=".22" stop-color="rgb(191,191,8)"/><stop offset=".5" stop-color="rgb(191,191,8)"/><stop offset="1" stop-color="rgb(80,80,3)"/></linearGradient><linearGradient id="bW" x1="0" y1="0" x2="0" y2="1"><stop offset="0" stop-color="#fff"/><stop offset=".4" stop-color="#f4f4f4"/><stop offset="1" stop-color="#6a6a6a"/></linearGradient></defs><path d="M346.6 713.9H951.4" stroke="#f01818" stroke-width="1.8"/><path d="M346.6 765.1H951.4" stroke="#f0f000" stroke-width="1.8"/><path d="M346.6 785.58H951.4" stroke="#0a7a0a" stroke-width="1.8"/><path d="M346.6 560.4V817.2H951.4V560.4Z" fill="none" stroke="#a6a6a6" stroke-width="1.25"/><path d="M346.6 817.5H951.4" stroke="#9a9a9a" stroke-width="2.2"/><path d="M340.6 817.2H346.6" stroke="#dcdcdc" stroke-width="1.4"/><text transform="translate(339.4 824) scale(.94 1)" font-size="16" text-anchor="end">0</text><path d="M340.6 766H346.6" stroke="#dcdcdc" stroke-width="1.4"/><text transform="translate(339.4 771.4) scale(.94 1)" font-size="16" text-anchor="end">5</text><path d="M340.6 714.8H346.6" stroke="#dcdcdc" stroke-width="1.4"/><text transform="translate(339.4 720.2) scale(.94 1)" font-size="16" text-anchor="end">10</text><path d="M340.6 663.6H346.6" stroke="#dcdcdc" stroke-width="1.4"/><text transform="translate(339.4 669) scale(.94 1)" font-size="16" text-anchor="end">15</text><path d="M340.6 612.4H346.6" stroke="#dcdcdc" stroke-width="1.4"/><text transform="translate(339.4 617.8) scale(.94 1)" font-size="16" text-anchor="end">20</text><path d="M340.6 561.7H346.6" stroke="#dcdcdc" stroke-width="1.4"/><text transform="translate(339.4 567.1) scale(.94 1)" font-size="16" text-anchor="end">25</text><path d="M346.6 817.2V823.2" stroke="#d8d8d8" stroke-width="1.3"/><path d="M447.4 817.2V823.2" stroke="#d8d8d8" stroke-width="1.3"/><path d="M548.2 817.2V823.2" stroke="#d8d8d8" stroke-width="1.3"/><path d="M649 817.2V823.2" stroke="#d8d8d8" stroke-width="1.3"/><path d="M749.8 817.2V823.2" stroke="#d8d8d8" stroke-width="1.3"/><path d="M850.6 817.2V823.2" stroke="#d8d8d8" stroke-width="1.3"/><path d="M951.4 817.2V823.2" stroke="#d8d8d8" stroke-width="1.3"/><text x="396" y="832.6" font-size="15.4" text-anchor="middle">100</text><text x="496.8" y="832.6" font-size="15.4" text-anchor="middle">20%</text><text x="597.6" y="832.6" font-size="15.4" text-anchor="middle">40%</text><text x="698.4" y="832.6" font-size="15.4" text-anchor="middle">60%</text><text x="799.2" y="832.6" font-size="15.4" text-anchor="middle">80%</text><text x="900" y="832.6" font-size="15.4" text-anchor="middle">100%</text><text x="638" y="554.5" font-size="16" text-anchor="middle" textLength="80" lengthAdjust="spacingAndGlyphs">DeltaE 2000</text><rect x="972.7" y="612.8" width="624.3" height="16" fill="#2d2d2d"/><rect x="972.7" y="628.8" width="624.3" height="16" fill="#111"/><rect x="972.7" y="612.8" width="17.3" height="32" fill="#000"/><text x="1136" y="636.8" font-size="19" textLength="34" lengthAdjust="spacingAndGlyphs" fill="#e6e6e6">20%</text><text x="1229.3" y="636.8" font-size="19" textLength="34" lengthAdjust="spacingAndGlyphs" fill="#e6e6e6">40%</text><text x="1322.6" y="636.8" font-size="19" textLength="34" lengthAdjust="spacingAndGlyphs" fill="#e6e6e6">60%</text><text x="1416" y="636.8" font-size="19" textLength="34" lengthAdjust="spacingAndGlyphs" fill="#e6e6e6">80%</text><text x="1509.2" y="636.8" font-size="19" textLength="44.5" lengthAdjust="spacingAndGlyphs" fill="#e6e6e6">100%</text><rect x="972.7" y="644.6" width="624.3" height="29.53" fill="#3e3e3e"/><rect x="972.7" y="644.6" width="17.3" height="29.53" fill="#262626"/><text x="996" y="666.6" font-size="19" textLength="68" lengthAdjust="spacingAndGlyphs" fill="#e8e8e8">x: CIE31</text><text x="1136" y="666.6" font-size="19" textLength="58.6" lengthAdjust="spacingAndGlyphs" fill="#e8e8e8">0,2909</text><text x="1229.3" y="666.6" font-size="19" textLength="58.6" lengthAdjust="spacingAndGlyphs" fill="#e8e8e8">0,3214</text><text x="1322.6" y="666.6" font-size="19" textLength="58.6" lengthAdjust="spacingAndGlyphs" fill="#e8e8e8">0,3486</text><text x="1416" y="666.6" font-size="19" textLength="58.6" lengthAdjust="spacingAndGlyphs" fill="#e8e8e8">0,3758</text><text x="1509.2" y="666.6" font-size="19" textLength="58.6" lengthAdjust="spacingAndGlyphs" fill="#e8e8e8">0,4108</text><rect x="972.7" y="673.93" width="624.3" height="29.53" fill="#7d7d7d"/><rect x="972.7" y="673.93" width="17.3" height="29.53" fill="#262626"/><path d="M972.7 673.93H1597" stroke="#333" stroke-width="1"/><text x="996" y="695.93" font-size="19" textLength="68" lengthAdjust="spacingAndGlyphs" fill="#e8e8e8">y: CIE31</text><text x="1136" y="695.93" font-size="19" textLength="58.6" lengthAdjust="spacingAndGlyphs" fill="#e8e8e8">0,3102</text><rect x="1224" y="674.73" width="91" height="27" fill="#f0f0f0" stroke="#c8c8c8" stroke-width="1"/><text x="1229.3" y="695.93" font-size="19" textLength="58.6" lengthAdjust="spacingAndGlyphs" fill="#111">0,3619</text><text x="1322.6" y="695.93" font-size="19" textLength="58.6" lengthAdjust="spacingAndGlyphs" fill="#e8e8e8">0,4085</text><text x="1416" y="695.93" font-size="19" textLength="58.6" lengthAdjust="spacingAndGlyphs" fill="#e8e8e8">0,4550</text><text x="1509.2" y="695.93" font-size="19" textLength="58.6" lengthAdjust="spacingAndGlyphs" fill="#e8e8e8">0,5117</text><rect x="972.7" y="703.26" width="624.3" height="29.53" fill="#3e3e3e"/><rect x="972.7" y="703.26" width="17.3" height="29.53" fill="#262626"/><path d="M972.7 703.26H1597" stroke="#333" stroke-width="1"/><text x="996" y="725.26" font-size="19" fill="#e8e8e8">Y</text><text x="1136" y="725.26" font-size="19" textLength="80.5" lengthAdjust="spacingAndGlyphs" fill="#e8e8e8">104,1057</text><text x="1229.3" y="725.26" font-size="19" textLength="69.5" lengthAdjust="spacingAndGlyphs" fill="#e8e8e8">99,0597</text><text x="1322.6" y="725.26" font-size="19" textLength="69.5" lengthAdjust="spacingAndGlyphs" fill="#e8e8e8">96,0555</text><text x="1416" y="725.26" font-size="19" textLength="69.5" lengthAdjust="spacingAndGlyphs" fill="#e8e8e8">93,7957</text><text x="1509.2" y="725.26" font-size="19" textLength="69.5" lengthAdjust="spacingAndGlyphs" fill="#e8e8e8">91,2259</text><rect x="972.7" y="732.59" width="624.3" height="29.53" fill="#7d7d7d"/><rect x="972.7" y="732.59" width="17.3" height="29.53" fill="#262626"/><path d="M972.7 732.59H1597" stroke="#333" stroke-width="1"/><text x="996" y="754.59" font-size="19" textLength="125.5" lengthAdjust="spacingAndGlyphs" fill="#e8e8e8">Target x:CIE31</text><text x="1136" y="754.59" font-size="19" textLength="58.6" lengthAdjust="spacingAndGlyphs" fill="#e8e8e8">0,3344</text><text x="1229.3" y="754.59" font-size="19" textLength="58.6" lengthAdjust="spacingAndGlyphs" fill="#e8e8e8">0,3564</text><text x="1322.6" y="754.59" font-size="19" textLength="58.6" lengthAdjust="spacingAndGlyphs" fill="#e8e8e8">0,3773</text><text x="1416" y="754.59" font-size="19" textLength="58.6" lengthAdjust="spacingAndGlyphs" fill="#e8e8e8">0,3969</text><text x="1509.2" y="754.59" font-size="19" textLength="58.6" lengthAdjust="spacingAndGlyphs" fill="#e8e8e8">0,4193</text><rect x="972.7" y="761.92" width="624.3" height="29.53" fill="#3e3e3e"/><rect x="972.7" y="761.92" width="17.3" height="29.53" fill="#262626"/><path d="M972.7 761.92H1597" stroke="#333" stroke-width="1"/><text x="996" y="783.92" font-size="19" textLength="125.5" lengthAdjust="spacingAndGlyphs" fill="#e8e8e8">Target y:CIE31</text><text x="1136" y="783.92" font-size="19" textLength="58.6" lengthAdjust="spacingAndGlyphs" fill="#e8e8e8">0,3648</text><text x="1229.3" y="783.92" font-size="19" textLength="58.6" lengthAdjust="spacingAndGlyphs" fill="#e8e8e8">0,4013</text><text x="1322.6" y="783.92" font-size="19" textLength="58.6" lengthAdjust="spacingAndGlyphs" fill="#e8e8e8">0,4358</text><text x="1416" y="783.92" font-size="19" textLength="58.6" lengthAdjust="spacingAndGlyphs" fill="#e8e8e8">0,4682</text><text x="1509.2" y="783.92" font-size="19" textLength="58.6" lengthAdjust="spacingAndGlyphs" fill="#e8e8e8">0,5053</text><rect x="972.7" y="791.25" width="624.3" height="29.53" fill="#7d7d7d"/><rect x="972.7" y="791.25" width="17.3" height="29.53" fill="#262626"/><path d="M972.7 791.25H1597" stroke="#333" stroke-width="1"/><text x="996" y="813.25" font-size="19" textLength="73.4" lengthAdjust="spacingAndGlyphs" fill="#e8e8e8">Target Y</text><text x="1136" y="813.25" font-size="19" textLength="80.5" lengthAdjust="spacingAndGlyphs" fill="#e8e8e8">143,9662</text><text x="1229.3" y="813.25" font-size="19" textLength="80.5" lengthAdjust="spacingAndGlyphs" fill="#e8e8e8">141,4391</text><text x="1322.6" y="813.25" font-size="19" textLength="80.5" lengthAdjust="spacingAndGlyphs" fill="#e8e8e8">139,4975</text><text x="1416" y="813.25" font-size="19" textLength="80.5" lengthAdjust="spacingAndGlyphs" fill="#e8e8e8">137,9737</text><text x="1509.2" y="813.25" font-size="19" textLength="80.5" lengthAdjust="spacingAndGlyphs" fill="#e8e8e8">136,5005</text><path d="M971.4 14.7H1663.3V604.6H971.4ZM978.3 21.8V597.5H1659V21.8Z" fill="#c4c000" fill-rule="evenodd"/><path d="M1471.5 46L1471.5 65.7L1655.5 216.6L1655.5 46Z" fill="#000" fill-opacity=".4"/><path d="M1141.7 564.5L1139.6 564.4L1137.7 563.3L1135.8 562.0L1133.8 560.5L1131.7 559.0L1129.7 557.6L1127.4 556.0L1125.7 554.8L1123.9 553.5L1121.8 551.9L1119.6 550.1L1117.3 548.1L1114.7 545.7L1111.9 542.8L1110.4 541.0L1108.8 539.1L1107.0 536.8L1105.1 534.4L1103.2 531.6L1101.1 528.7L1099.0 525.4L1096.8 521.8L1094.4 517.9L1092.0 513.6L1089.4 508.8L1086.7 503.6L1083.9 497.9L1081.0 491.8L1077.9 485.1L1074.6 477.8L1071.2 470.0L1067.7 461.6L1064.1 452.5L1060.5 442.8L1056.8 432.3L1053.2 421.3L1049.6 409.6L1046.1 397.2L1042.5 384.1L1038.9 370.4L1035.4 356.2L1032.0 341.4L1028.7 326.3L1025.6 310.9L1022.7 295.3L1020.0 279.6L1017.7 263.9L1015.6 248.3L1013.8 232.7L1012.3 217.4L1011.3 202.4L1010.6 187.9L1010.3 173.9L1010.5 160.3L1011.1 147.2L1012.1 134.6L1013.7 122.7L1015.7 111.4L1018.2 101.0L1021.2 91.4L1024.6 82.7L1028.5 74.9L1032.8 68.2L1037.4 62.5L1042.4 57.9L1047.7 54.3L1053.2 51.7L1058.9 49.9L1064.8 49.0L1070.7 48.8L1076.8 49.3L1083.0 50.3L1089.2 51.9L1095.5 53.7L1101.8 55.8L1108.1 58.2L1114.4 60.8L1120.6 63.5L1126.8 66.4L1132.8 69.2L1138.7 72.2L1144.6 75.2L1150.4 78.3L1156.2 81.4L1161.9 84.7L1167.6 88.0L1173.2 91.4L1178.9 94.9L1184.5 98.4L1190.1 102.0L1195.7 105.7L1201.3 109.4L1206.8 113.2L1212.4 117.1L1217.9 121.0L1223.4 124.9L1228.9 128.9L1234.5 132.9L1240.0 137.0L1245.5 141.1L1251.0 145.2L1256.5 149.4L1262.0 153.6L1267.5 157.8L1273.1 162.0L1278.6 166.3L1284.1 170.6L1289.6 174.9L1295.1 179.2L1300.6 183.5L1306.1 187.8L1311.6 192.2L1317.1 196.5L1322.6 200.9L1328.0 205.2L1333.5 209.6L1338.9 213.9L1344.4 218.2L1349.8 222.6L1355.2 226.9L1360.6 231.2L1365.9 235.5L1371.2 239.8L1376.5 244.0L1381.8 248.3L1387.0 252.5L1392.2 256.7L1397.4 260.8L1402.5 264.9L1407.6 269.0L1412.6 273.1L1417.6 277.1L1422.5 281.0L1427.4 284.9L1432.2 288.8L1437.0 292.6L1441.7 296.4L1446.3 300.1L1450.8 303.7L1455.3 307.3L1459.7 310.9L1464.0 314.3L1468.2 317.7L1472.2 321.0L1476.2 324.1L1480.0 327.2L1483.7 330.2L1487.3 333.1L1490.8 335.9L1494.3 338.7L1497.7 341.4L1500.9 344.0L1504.1 346.6L1507.2 349.0L1510.1 351.4L1512.9 353.6L1515.6 355.8L1518.2 357.8L1520.7 359.8L1523.1 361.8L1525.4 363.6L1527.6 365.4L1529.7 367.1L1531.7 368.7L1533.6 370.3L1535.5 371.8L1537.2 373.2L1538.9 374.5L1540.5 375.8L1543.5 378.2L1546.2 380.4L1548.8 382.4L1551.0 384.3L1553.2 386.0L1555.2 387.6L1557.0 389.1L1558.7 390.4L1560.3 391.7L1562.4 393.4L1564.3 394.9L1566.3 396.5L1567.9 397.8L1569.4 399.1L1571.0 400.3L1572.6 401.6L1573.8 402.6ZM1500.8 362.3L1238.7 194.4L1123.1 530.3Z" fill="#000" fill-opacity=".4" fill-rule="evenodd"/><path d="M1007.6 46V568.4H1655.8V46Z" fill="none" stroke="#a6a6a6" stroke-width="1.25"/><path d="M1001.6 568.9H1007.6" stroke="#e4e4e4" stroke-width="1.7"/><text transform="translate(1001.3 574.8) scale(.94 1)" font-size="16" text-anchor="end">0</text><path d="M1007.5 568.4V574.4" stroke="#d8d8d8" stroke-width="1.3"/><text transform="translate(1007.5 590) scale(.94 1)" font-size="16" text-anchor="middle">0</text><path d="M1001.6 506.7H1007.6" stroke="#e4e4e4" stroke-width="1.7"/><text transform="translate(1001.3 512.6) scale(.94 1)" font-size="16" text-anchor="end">0,1</text><path d="M1084.58 568.4V574.4" stroke="#d8d8d8" stroke-width="1.3"/><text transform="translate(1084.58 590) scale(.94 1)" font-size="16" text-anchor="middle">0,1</text><path d="M1001.6 444.5H1007.6" stroke="#e4e4e4" stroke-width="1.7"/><text transform="translate(1001.3 450.4) scale(.94 1)" font-size="16" text-anchor="end">0,2</text><path d="M1161.66 568.4V574.4" stroke="#d8d8d8" stroke-width="1.3"/><text transform="translate(1161.66 590) scale(.94 1)" font-size="16" text-anchor="middle">0,2</text><path d="M1001.6 382.3H1007.6" stroke="#e4e4e4" stroke-width="1.7"/><text transform="translate(1001.3 388.2) scale(.94 1)" font-size="16" text-anchor="end">0,3</text><path d="M1238.74 568.4V574.4" stroke="#d8d8d8" stroke-width="1.3"/><text transform="translate(1238.74 590) scale(.94 1)" font-size="16" text-anchor="middle">0,3</text><path d="M1001.6 320.1H1007.6" stroke="#e4e4e4" stroke-width="1.7"/><text transform="translate(1001.3 326) scale(.94 1)" font-size="16" text-anchor="end">0,4</text><path d="M1315.82 568.4V574.4" stroke="#d8d8d8" stroke-width="1.3"/><text transform="translate(1315.82 590) scale(.94 1)" font-size="16" text-anchor="middle">0,4</text><path d="M1001.6 257.9H1007.6" stroke="#e4e4e4" stroke-width="1.7"/><text transform="translate(1001.3 263.8) scale(.94 1)" font-size="16" text-anchor="end">0,5</text><path d="M1392.9 568.4V574.4" stroke="#d8d8d8" stroke-width="1.3"/><text transform="translate(1392.9 590) scale(.94 1)" font-size="16" text-anchor="middle">0,5</text><path d="M1001.6 195.7H1007.6" stroke="#e4e4e4" stroke-width="1.7"/><text transform="translate(1001.3 201.6) scale(.94 1)" font-size="16" text-anchor="end">0,6</text><path d="M1469.98 568.4V574.4" stroke="#d8d8d8" stroke-width="1.3"/><text transform="translate(1469.98 590) scale(.94 1)" font-size="16" text-anchor="middle">0,6</text><path d="M1001.6 133.5H1007.6" stroke="#e4e4e4" stroke-width="1.7"/><text transform="translate(1001.3 139.4) scale(.94 1)" font-size="16" text-anchor="end">0,7</text><path d="M1547.06 568.4V574.4" stroke="#d8d8d8" stroke-width="1.3"/><text transform="translate(1547.06 590) scale(.94 1)" font-size="16" text-anchor="middle">0,7</text><path d="M1001.6 71.3H1007.6" stroke="#e4e4e4" stroke-width="1.7"/><text transform="translate(1001.3 77.2) scale(.94 1)" font-size="16" text-anchor="end">0,8</text><path d="M1624.14 568.4V574.4" stroke="#d8d8d8" stroke-width="1.3"/><text transform="translate(1624.14 590) scale(.94 1)" font-size="16" text-anchor="middle">0,8</text><text x="1318.4" y="40.6" font-size="16" text-anchor="middle" textLength="76" lengthAdjust="spacingAndGlyphs">CIE 1931 xy</text><rect x="1289.5" y="354.9" width="15" height="15" fill="none" stroke="#fff" stroke-width="1.3"/><rect x="1342.6" y="354.9" width="15" height="15" fill="none" stroke="#fff" stroke-width="1.3"/><rect x="1387.4" y="354.9" width="15" height="15" fill="none" stroke="#fff" stroke-width="1.3"/><rect x="1437.9" y="354.9" width="15" height="15" fill="none" stroke="#fff" stroke-width="1.3"/><rect x="1493.5" y="354.9" width="15" height="15" fill="none" stroke="#fff" stroke-width="1.3"/><rect x="1239.4" y="320.9" width="15" height="15" fill="none" stroke="#fff" stroke-width="1.3"/><rect x="1236.6" y="288.5" width="15" height="15" fill="none" stroke="#fff" stroke-width="1.3"/><rect x="1235.1" y="255.1" width="15" height="15" fill="none" stroke="#fff" stroke-width="1.3"/><rect x="1233.6" y="222.1" width="15" height="15" fill="none" stroke="#fff" stroke-width="1.3"/><rect x="1231.1" y="186.1" width="15" height="15" fill="none" stroke="#fff" stroke-width="1.3"/><rect x="1216.1" y="388.7" width="15" height="15" fill="none" stroke="#fff" stroke-width="1.3"/><rect x="1190.4" y="422.3" width="15" height="15" fill="none" stroke="#fff" stroke-width="1.3"/><rect x="1166.9" y="452.9" width="15" height="15" fill="none" stroke="#fff" stroke-width="1.3"/><rect x="1142.5" y="486.0" width="15" height="15" fill="none" stroke="#fff" stroke-width="1.3"/><rect x="1115.6" y="521.9" width="15" height="15" fill="none" stroke="#fff" stroke-width="1.3"/><rect x="1227.3" y="354.7" width="15" height="15" fill="none" stroke="#fff" stroke-width="1.3"/><rect x="1213.7" y="354.7" width="15" height="15" fill="none" stroke="#fff" stroke-width="1.3"/><rect x="1200.2" y="354.8" width="15" height="15" fill="none" stroke="#fff" stroke-width="1.3"/><rect x="1186.6" y="354.8" width="15" height="15" fill="none" stroke="#fff" stroke-width="1.3"/><rect x="1173.1" y="354.8" width="15" height="15" fill="none" stroke="#fff" stroke-width="1.3"/><rect x="1242.1" y="376.4" width="15" height="15" fill="none" stroke="#fff" stroke-width="1.3"/><rect x="1243.4" y="398.1" width="15" height="15" fill="none" stroke="#fff" stroke-width="1.3"/><rect x="1244.7" y="419.8" width="15" height="15" fill="none" stroke="#fff" stroke-width="1.3"/><rect x="1246.0" y="441.5" width="15" height="15" fill="none" stroke="#fff" stroke-width="1.3"/><rect x="1247.3" y="463.2" width="15" height="15" fill="none" stroke="#fff" stroke-width="1.3"/><rect x="1257.8" y="332.6" width="15" height="15" fill="none" stroke="#fff" stroke-width="1.3"/><rect x="1274.7" y="309.9" width="15" height="15" fill="none" stroke="#fff" stroke-width="1.3"/><rect x="1290.8" y="288.4" width="15" height="15" fill="none" stroke="#fff" stroke-width="1.3"/><rect x="1305.9" y="268.3" width="15" height="15" fill="none" stroke="#fff" stroke-width="1.3"/><rect x="1323.2" y="245.2" width="15" height="15" fill="none" stroke="#fff" stroke-width="1.3"/><rect x="1240.6" y="354.9" width="15" height="15" fill="none" stroke="#000" stroke-width="1.7"/><circle cx="1231.7" cy="374.1" r="4.9" fill="#beb99b" stroke="#000" stroke-width="1.1"/><circle cx="1255.2" cy="341.9" r="4.9" fill="#beb982" stroke="#000" stroke-width="1.1"/><circle cx="1276.2" cy="312.9" r="4.9" fill="#beb96e" stroke="#000" stroke-width="1.1"/><circle cx="1297.2" cy="284.0" r="4.9" fill="#beb950" stroke="#000" stroke-width="1.1"/><circle cx="1324.1" cy="248.7" r="4.9" fill="#beb400" stroke="#000" stroke-width="1.1"/><circle cx="1256.3" cy="400.5" r="4.9" fill="#c3877d" stroke="#000" stroke-width="1.1"/><circle cx="1303.5" cy="393.3" r="4.9" fill="#c36e69" stroke="#000" stroke-width="1.1"/><circle cx="1347.4" cy="384.9" r="4.9" fill="#c35555" stroke="#000" stroke-width="1.1"/><circle cx="1396.6" cy="375.4" r="4.9" fill="#c33737" stroke="#000" stroke-width="1.1"/><circle cx="1453.5" cy="361.0" r="4.9" fill="#c80000" stroke="#000" stroke-width="1.1"/><circle cx="1215.4" cy="363.7" r="4.9" fill="#9bbe96" stroke="#000" stroke-width="1.1"/><circle cx="1222.4" cy="320.4" r="4.9" fill="#7db97d" stroke="#000" stroke-width="1.1"/><circle cx="1228.9" cy="280.9" r="4.9" fill="#64b964" stroke="#000" stroke-width="1.1"/><circle cx="1237.6" cy="238.4" r="4.9" fill="#46b446" stroke="#000" stroke-width="1.1"/><circle cx="1246.6" cy="188.4" r="4.9" fill="#00aa00" stroke="#000" stroke-width="1.1"/><circle cx="1181.4" cy="441.4" r="4.9" fill="#a0a0c3" stroke="#000" stroke-width="1.1"/><circle cx="1161.1" cy="470.4" r="4.9" fill="#8787c3" stroke="#000" stroke-width="1.1"/><circle cx="1147.5" cy="488.9" r="4.9" fill="#6964c3" stroke="#000" stroke-width="1.1"/><circle cx="1136.5" cy="504.3" r="4.9" fill="#4641c3" stroke="#000" stroke-width="1.1"/><circle cx="1128.5" cy="516.8" r="4.9" fill="#0000b4" stroke="#000" stroke-width="1.1"/><circle cx="1199.6" cy="403.3" r="4.9" fill="#a5c3b9" stroke="#000" stroke-width="1.1"/><circle cx="1188.4" cy="404.7" r="4.9" fill="#8cc3b9" stroke="#000" stroke-width="1.1"/><circle cx="1180.4" cy="406.0" r="4.9" fill="#6ec3b9" stroke="#000" stroke-width="1.1"/><circle cx="1174.2" cy="406.0" r="4.9" fill="#50c8be" stroke="#000" stroke-width="1.1"/><circle cx="1167.2" cy="405.8" r="4.9" fill="#00c8b4" stroke="#000" stroke-width="1.1"/><circle cx="1207.3" cy="425.3" r="4.9" fill="#c8a5be" stroke="#000" stroke-width="1.1"/><circle cx="1203.6" cy="448.4" r="4.9" fill="#c882be" stroke="#000" stroke-width="1.1"/><circle cx="1200.4" cy="460.6" r="4.9" fill="#c864b9" stroke="#000" stroke-width="1.1"/><circle cx="1197.3" cy="473.4" r="4.9" fill="#c83cb4" stroke="#000" stroke-width="1.1"/><circle cx="1194.9" cy="484.6" r="4.9" fill="#c800aa" stroke="#000" stroke-width="1.1"/><circle cx="1241.4" cy="365.4" r="4.9" fill="#fff" stroke="#000" stroke-width="1.1"/><rect x="1471.3" y="45.8" width="184.4" height="190.2" fill="none" stroke="#959595" stroke-width="1.3"/><path d="M1470.2 45V237.2H1656" fill="none" stroke="#3c3c3c" stroke-width="1.2"/><rect x="1556.0" y="133.4" width="15" height="15" fill="none" stroke="#fff" stroke-width="1.3"/><circle cx="1532.1" cy="115.6" r="4.9" fill="#beb400" stroke="#000" stroke-width="1.1"/></svg>
</body></html>
